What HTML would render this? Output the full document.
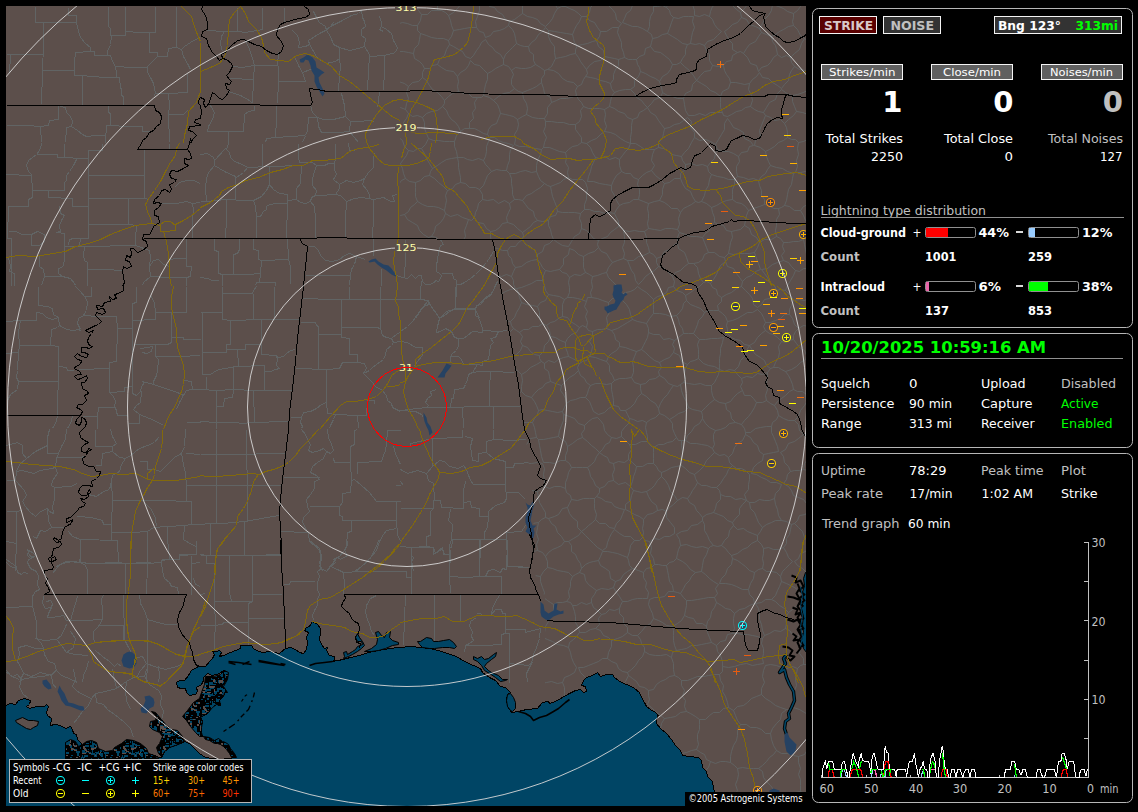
<!DOCTYPE html>
<html lang="en"><head><meta charset="utf-8"><title>Lightning Detector</title>
<style>
html,body{margin:0;padding:0;background:#000;overflow:hidden}
svg{display:block}
text{font-family:"DejaVu Sans","Liberation Sans",sans-serif;white-space:pre}
</style></head><body>
<svg width="1138" height="812" viewBox="0 0 1138 812">
<rect width="1138" height="812" fill="#000"/>
<clipPath id="mc"><rect x="6" y="6" width="800" height="800"/></clipPath>
<g clip-path="url(#mc)" fill="none" stroke-linejoin="round">
<rect x="6" y="6" width="800" height="800" fill="#5c4f4b"/>
<clipPath id="vz"><polygon points="400,0 812,0 812,812 545,812 545,594.5 537.5,594.5 534,560 533,500 524.6,429 500.4,286 492.4,239.3 400,239.3"/></clipPath>
<clipPath id="tz"><path clip-rule="evenodd" d="M0 0H812V812H0Z M400,0L812,0L812,812L545,812L545,594.5L537.5,594.5L534,560L533,500L524.6,429L500.4,286L492.4,239.3L400,239.3Z"/></clipPath>
<g stroke="#616464" stroke-width="1" shape-rendering="crispEdges" fill="none">
<path clip-path="url(#vz)" d="M704.5,821.5 705.5,816.5 709.5,812.5 710.5,808.5M698.5,787.5 701.5,790.5 703.5,795.5 706.5,799.5 707.5,804.5 710.5,808.5M698.5,787.5 692.5,786.5 687.5,787.5 682.5,788.5 677.5,790.5 671.5,790.5M671.5,790.5 672.5,796.5 671.5,802.5 673.5,808.5 671.5,814.5 672.5,819.5 672.5,825.5M363.5,454.5 368.5,452.5 373.5,452.5 379.5,452.5 383.5,448.5 389.5,449.5M389.5,449.5 386.5,444.5 388.5,438.5 385.5,433.5 384.5,428.5M374.5,422.5 380.5,424.5 384.5,428.5M414.5,432.5 412.5,437.5 414.5,443.5 412.5,448.5M414.5,432.5 411.5,428.5 407.5,426.5 404.5,422.5 399.5,420.5M384.5,428.5 389.5,425.5 394.5,422.5 399.5,420.5M390.5,450.5 395.5,451.5 401.5,450.5 406.5,448.5 412.5,448.5M806.5,355.5 804.5,350.5 799.5,347.5 796.5,343.5 793.5,339.5M806.5,355.5 809.5,351.5 813.5,348.5 817.5,344.5 822.5,342.5 825.5,338.5M820.5,322.5 814.5,322.5 809.5,326.5 803.5,325.5 798.5,328.5M798.5,328.5 795.5,331.5 793.5,335.5 793.5,339.5M614.5,528.5 609.5,527.5 605.5,523.5 599.5,523.5 595.5,519.5M614.5,528.5 616.5,523.5 620.5,519.5 622.5,514.5 624.5,509.5M624.5,509.5 619.5,508.5 614.5,506.5 611.5,502.5 605.5,501.5 601.5,498.5 596.5,496.5M595.5,519.5 596.5,514.5 594.5,508.5 594.5,503.5 594.5,498.5M594.5,498.5 596.5,496.5M614.5,529.5 611.5,533.5 609.5,537.5 607.5,542.5 606.5,547.5 602.5,550.5M602.5,550.5 597.5,547.5 593.5,543.5 589.5,539.5 585.5,535.5 581.5,531.5M581.5,531.5 585.5,528.5 588.5,525.5 592.5,522.5 595.5,519.5M571.5,499.5 577.5,500.5 583.5,498.5 589.5,498.5 594.5,498.5M571.5,499.5 569.5,503.5 567.5,507.5M567.5,507.5 569.5,513.5 572.5,517.5 577.5,521.5 577.5,527.5 581.5,531.5M648.5,690.5 648.5,695.5 649.5,699.5 647.5,704.5M648.5,690.5 644.5,687.5 639.5,686.5 636.5,681.5 632.5,678.5 628.5,675.5M647.5,704.5 644.5,707.5 638.5,708.5 635.5,713.5 631.5,716.5 626.5,717.5M628.5,675.5 625.5,681.5 621.5,685.5 615.5,688.5 611.5,692.5 608.5,698.5M626.5,717.5 622.5,714.5 619.5,709.5 616.5,705.5 611.5,702.5 608.5,698.5M696.5,749.5 691.5,750.5 686.5,752.5 681.5,753.5 675.5,754.5 670.5,754.5 664.5,754.5 659.5,757.5M696.5,749.5 700.5,752.5 704.5,754.5 706.5,759.5 710.5,761.5M710.5,761.5 708.5,767.5 704.5,771.5 701.5,776.5 700.5,782.5 698.5,787.5M671.5,790.5 667.5,787.5 663.5,783.5 660.5,778.5 656.5,774.5M659.5,757.5 660.5,762.5 657.5,766.5 658.5,770.5 656.5,774.5M664.5,718.5 660.5,715.5 655.5,711.5 651.5,707.5 647.5,704.5M664.5,718.5 661.5,723.5 660.5,728.5 659.5,734.5 659.5,739.5 658.5,745.5 655.5,749.5M626.5,717.5 625.5,722.5 624.5,727.5 624.5,731.5 624.5,736.5M655.5,749.5 651.5,746.5 645.5,744.5 639.5,744.5 634.5,742.5 629.5,738.5 624.5,736.5M631.5,821.5 628.5,815.5 629.5,809.5 629.5,803.5 628.5,797.5 626.5,791.5M656.5,774.5 650.5,777.5 646.5,781.5 641.5,783.5 636.5,785.5 630.5,788.5 626.5,791.5M758.5,768.5 753.5,768.5 748.5,768.5 742.5,767.5 737.5,768.5M758.5,768.5 762.5,771.5 763.5,777.5 766.5,781.5 770.5,785.5 773.5,789.5 774.5,795.5 778.5,798.5M737.5,768.5 738.5,774.5 737.5,779.5 735.5,784.5 737.5,790.5 734.5,795.5 734.5,800.5M778.5,798.5 777.5,803.5 773.5,806.5M773.5,806.5 767.5,807.5 762.5,808.5 756.5,808.5 751.5,811.5 745.5,810.5M745.5,810.5 742.5,806.5 739.5,802.5 734.5,800.5M730.5,762.5 734.5,765.5 737.5,768.5M730.5,762.5 730.5,756.5 731.5,751.5 733.5,745.5 736.5,740.5 737.5,735.5 737.5,729.5 740.5,724.5M740.5,724.5 746.5,724.5 750.5,727.5 756.5,727.5 761.5,729.5 765.5,733.5 770.5,733.5M776.5,750.5 773.5,745.5 771.5,739.5 770.5,733.5M776.5,750.5 773.5,754.5 769.5,757.5 766.5,761.5 762.5,765.5 758.5,768.5M710.5,761.5 715.5,763.5 720.5,761.5 725.5,761.5 730.5,762.5M710.5,808.5 715.5,805.5 720.5,804.5 725.5,804.5 729.5,801.5 734.5,800.5M736.5,867.5 736.5,861.5 737.5,855.5 738.5,850.5 741.5,844.5 741.5,838.5 742.5,833.5 744.5,827.5 743.5,821.5 746.5,816.5 745.5,810.5M778.5,828.5 777.5,822.5 775.5,817.5 775.5,811.5 773.5,806.5M836.5,645.5 831.5,648.5 827.5,653.5 821.5,654.5 817.5,659.5 811.5,660.5 806.5,664.5M828.5,687.5 825.5,683.5 822.5,678.5 816.5,676.5 814.5,671.5 810.5,668.5 806.5,664.5M816.5,799.5 810.5,798.5 805.5,793.5 800.5,791.5M800.5,791.5 800.5,785.5 800.5,779.5 798.5,774.5 800.5,768.5 798.5,762.5 798.5,756.5M798.5,756.5 804.5,754.5 807.5,749.5 813.5,747.5M805.5,838.5 808.5,833.5 809.5,827.5 809.5,821.5 812.5,816.5 811.5,810.5 815.5,805.5 816.5,799.5M778.5,798.5 784.5,796.5 789.5,793.5 794.5,792.5 800.5,791.5M776.5,750.5 781.5,753.5 787.5,753.5 793.5,755.5 798.5,756.5M821.5,709.5 817.5,710.5 814.5,714.5 809.5,715.5M809.5,715.5 811.5,720.5 811.5,725.5 810.5,731.5 812.5,736.5 811.5,741.5 813.5,747.5M422.5,821.5 417.5,818.5 415.5,813.5 410.5,810.5 406.5,806.5 403.5,802.5M379.5,868.5 380.5,862.5 381.5,856.5 379.5,850.5 379.5,845.5 381.5,839.5 379.5,833.5 379.5,828.5 380.5,822.5 379.5,816.5 382.5,810.5 381.5,805.5M403.5,802.5 398.5,804.5 392.5,805.5 386.5,803.5 381.5,805.5M430.5,821.5 434.5,817.5 437.5,812.5 440.5,807.5 441.5,801.5 447.5,798.5 449.5,793.5M414.5,778.5 420.5,779.5 425.5,777.5 431.5,776.5M414.5,778.5 411.5,783.5 408.5,787.5 407.5,792.5 404.5,797.5 403.5,802.5M449.5,793.5 446.5,789.5 441.5,787.5 438.5,783.5 434.5,780.5 431.5,776.5M370.5,798.5 374.5,799.5 377.5,803.5 381.5,805.5M425.5,426.5 429.5,430.5 435.5,431.5 438.5,435.5 443.5,437.5M425.5,426.5 422.5,428.5 418.5,430.5 414.5,432.5M443.5,437.5 444.5,440.5M444.5,440.5 441.5,442.5 438.5,446.5 436.5,450.5M436.5,450.5 430.5,451.5 424.5,451.5 418.5,451.5 413.5,449.5M720.5,96.5 722.5,91.5 728.5,88.5 730.5,82.5M720.5,96.5 720.5,102.5 720.5,107.5 722.5,112.5M722.5,112.5 723.5,115.5 727.5,116.5M749.5,83.5 744.5,84.5 740.5,83.5 735.5,82.5 730.5,82.5M749.5,83.5 748.5,89.5 751.5,95.5 752.5,100.5 750.5,106.5M750.5,106.5 745.5,107.5 741.5,110.5 736.5,111.5 731.5,114.5 727.5,116.5M640.5,71.5 645.5,73.5 650.5,76.5 655.5,78.5 659.5,81.5M640.5,71.5 639.5,67.5 637.5,64.5 636.5,59.5M659.5,81.5 662.5,76.5 667.5,73.5 670.5,69.5 672.5,64.5M636.5,59.5 639.5,56.5 644.5,54.5 645.5,48.5 650.5,46.5M650.5,46.5 654.5,51.5 660.5,52.5 664.5,55.5 669.5,59.5 672.5,64.5M794.5,523.5 797.5,520.5 799.5,515.5 805.5,514.5 807.5,510.5M794.5,523.5 798.5,527.5 802.5,531.5 804.5,537.5 807.5,541.5 812.5,545.5M807.5,510.5 812.5,512.5 819.5,511.5 824.5,514.5 829.5,515.5M806.5,355.5 805.5,359.5M793.5,339.5 789.5,340.5 785.5,342.5 781.5,341.5M781.5,341.5 778.5,346.5 779.5,352.5 778.5,357.5 775.5,362.5 773.5,367.5M773.5,367.5 778.5,367.5 781.5,369.5 785.5,371.5M805.5,359.5 800.5,362.5 796.5,366.5 791.5,369.5 785.5,371.5M806.5,503.5 808.5,506.5 807.5,510.5M806.5,503.5 809.5,499.5 810.5,494.5 815.5,490.5 815.5,484.5 819.5,480.5M478.5,492.5 473.5,492.5 469.5,493.5 464.5,493.5M478.5,492.5 482.5,495.5 483.5,500.5 488.5,503.5M464.5,493.5 463.5,498.5 461.5,503.5 458.5,507.5 455.5,511.5M488.5,503.5 486.5,506.5 488.5,509.5M488.5,509.5 486.5,514.5 481.5,516.5 479.5,521.5M479.5,521.5 473.5,521.5 467.5,521.5 462.5,519.5 456.5,518.5M456.5,518.5 455.5,515.5 455.5,511.5M511.5,476.5 512.5,480.5 513.5,483.5M511.5,476.5 505.5,476.5 499.5,476.5 493.5,476.5 488.5,474.5 482.5,474.5M482.5,474.5 482.5,479.5 479.5,483.5 478.5,487.5 478.5,492.5M513.5,483.5 510.5,487.5 504.5,489.5 502.5,495.5 496.5,497.5 492.5,500.5 488.5,503.5M515.5,520.5 509.5,518.5 504.5,516.5 499.5,514.5 493.5,512.5 488.5,509.5M515.5,520.5 515.5,515.5 517.5,510.5 517.5,505.5 518.5,500.5 519.5,495.5 520.5,490.5M513.5,483.5 518.5,485.5 520.5,490.5M493.5,556.5 496.5,551.5 499.5,546.5 502.5,542.5M493.5,556.5 488.5,555.5 484.5,557.5 479.5,557.5M502.5,542.5 498.5,539.5 494.5,536.5 489.5,535.5 486.5,531.5 481.5,530.5M481.5,530.5 477.5,533.5 476.5,538.5 475.5,543.5 471.5,546.5M479.5,557.5 477.5,553.5 474.5,550.5 471.5,546.5M515.5,520.5 515.5,526.5 511.5,530.5 509.5,535.5 509.5,540.5M509.5,540.5 505.5,540.5 502.5,542.5M479.5,521.5 481.5,525.5 481.5,530.5M447.5,538.5 445.5,534.5 447.5,530.5M447.5,538.5 451.5,540.5 454.5,542.5 456.5,546.5M456.5,546.5 461.5,547.5 466.5,547.5 471.5,546.5M447.5,530.5 449.5,525.5 454.5,522.5 456.5,518.5M608.5,698.5 602.5,698.5M624.5,736.5 620.5,739.5 615.5,742.5 609.5,742.5 605.5,747.5M605.5,747.5 602.5,741.5 598.5,737.5 595.5,732.5 593.5,726.5 588.5,722.5 586.5,716.5M602.5,698.5 600.5,702.5 595.5,704.5 592.5,708.5 588.5,711.5 586.5,716.5M602.5,698.5 598.5,694.5 594.5,690.5 593.5,684.5 588.5,680.5 584.5,676.5 580.5,672.5 578.5,667.5M586.5,716.5 582.5,714.5 577.5,717.5 573.5,716.5 568.5,715.5M568.5,715.5 566.5,710.5 567.5,704.5 563.5,699.5 564.5,693.5 564.5,687.5 562.5,682.5M562.5,682.5 564.5,677.5 569.5,675.5 574.5,672.5 576.5,667.5M628.5,675.5 627.5,672.5M627.5,672.5 622.5,671.5 618.5,668.5 616.5,663.5 611.5,661.5 607.5,658.5M578.5,667.5 583.5,667.5 588.5,665.5 593.5,663.5 598.5,661.5 602.5,658.5 607.5,658.5M358.5,382.5 364.5,383.5 369.5,383.5 375.5,383.5 381.5,384.5 386.5,383.5M363.5,354.5 368.5,356.5 374.5,359.5 380.5,360.5 386.5,361.5 391.5,364.5M391.5,364.5 390.5,369.5 389.5,374.5 387.5,378.5 386.5,383.5M371.5,414.5 373.5,409.5 376.5,405.5 380.5,402.5 385.5,399.5 388.5,395.5 391.5,390.5M386.5,383.5 389.5,386.5 391.5,390.5M437.5,387.5 433.5,384.5 427.5,383.5 425.5,378.5 420.5,376.5M437.5,387.5 438.5,393.5 434.5,398.5 434.5,404.5M426.5,407.5 429.5,404.5 434.5,404.5M426.5,407.5 421.5,407.5 416.5,406.5 411.5,404.5 406.5,401.5M420.5,376.5 418.5,381.5 414.5,385.5 411.5,389.5 406.5,392.5 404.5,397.5M406.5,401.5 404.5,397.5M425.5,426.5 425.5,421.5 425.5,417.5 425.5,412.5 426.5,407.5M450.5,412.5 448.5,417.5 446.5,421.5 445.5,426.5 443.5,431.5 443.5,437.5M450.5,412.5 445.5,411.5 442.5,407.5 437.5,407.5 434.5,404.5M399.5,420.5 402.5,415.5 403.5,411.5 403.5,405.5 406.5,401.5M391.5,390.5 395.5,394.5 400.5,394.5 404.5,397.5M536.5,437.5 530.5,438.5 526.5,444.5 520.5,445.5 515.5,449.5 510.5,451.5M536.5,437.5 535.5,432.5 534.5,427.5 532.5,422.5M510.5,451.5 506.5,448.5M506.5,448.5 505.5,443.5 505.5,438.5 504.5,433.5 503.5,428.5 501.5,423.5M532.5,422.5 526.5,422.5 520.5,422.5 514.5,422.5 508.5,422.5 502.5,423.5M659.5,375.5 664.5,378.5 668.5,383.5 673.5,385.5M659.5,375.5 655.5,378.5 649.5,379.5 645.5,383.5 640.5,384.5M640.5,384.5 640.5,388.5 641.5,393.5M641.5,393.5 646.5,396.5 650.5,400.5 655.5,403.5 658.5,408.5M658.5,408.5 660.5,403.5 663.5,398.5 667.5,394.5 670.5,389.5 673.5,385.5M696.5,749.5 698.5,744.5 697.5,739.5 697.5,734.5 699.5,729.5 699.5,724.5 699.5,719.5M664.5,718.5 670.5,717.5 675.5,716.5 680.5,712.5 686.5,711.5M659.5,757.5 657.5,753.5 655.5,749.5M699.5,719.5 695.5,716.5 690.5,713.5 686.5,711.5M812.5,545.5 808.5,547.5 805.5,551.5 800.5,553.5 798.5,558.5 794.5,561.5M815.5,577.5 810.5,575.5 806.5,572.5 802.5,568.5 797.5,565.5 794.5,561.5M791.5,524.5 794.5,523.5M791.5,524.5 790.5,529.5 789.5,534.5 786.5,538.5 786.5,543.5 783.5,547.5M783.5,547.5 786.5,552.5 788.5,557.5 792.5,561.5M791.5,524.5 786.5,521.5 781.5,520.5M781.5,520.5 775.5,520.5 771.5,522.5 766.5,524.5 762.5,527.5M783.5,547.5 778.5,549.5 773.5,549.5 768.5,547.5 763.5,548.5M762.5,527.5 760.5,531.5 757.5,535.5M757.5,535.5 757.5,540.5M763.5,548.5 761.5,544.5 757.5,540.5M564.5,541.5 561.5,545.5 557.5,547.5 552.5,549.5 548.5,552.5 545.5,556.5M564.5,541.5 561.5,536.5 557.5,532.5 555.5,526.5 551.5,523.5 548.5,518.5M538.5,522.5 541.5,519.5 545.5,517.5M538.5,522.5 537.5,527.5 536.5,533.5 538.5,539.5 536.5,544.5 537.5,550.5M537.5,550.5 542.5,552.5 545.5,556.5M548.5,518.5 545.5,517.5M567.5,507.5 562.5,508.5 558.5,514.5 554.5,516.5 548.5,518.5M581.5,531.5 578.5,535.5 573.5,538.5 568.5,541.5M568.5,541.5 564.5,541.5M515.5,520.5 521.5,520.5 527.5,520.5 532.5,523.5 538.5,522.5M537.5,491.5 531.5,490.5 525.5,492.5 520.5,490.5M537.5,491.5 538.5,497.5 539.5,502.5 542.5,507.5 545.5,512.5 545.5,517.5M519.5,550.5 515.5,547.5 511.5,544.5 509.5,540.5M519.5,550.5 524.5,551.5 528.5,551.5 533.5,551.5 537.5,550.5M571.5,499.5 570.5,495.5 566.5,492.5 565.5,488.5M537.5,491.5 541.5,489.5 544.5,486.5M565.5,488.5 560.5,486.5 554.5,486.5 549.5,488.5 544.5,486.5M511.5,476.5 514.5,471.5 514.5,466.5M514.5,466.5 520.5,465.5 525.5,463.5 531.5,463.5 537.5,462.5 542.5,463.5M544.5,486.5 544.5,480.5 543.5,474.5 544.5,468.5 542.5,463.5M538.5,439.5 536.5,437.5M538.5,439.5 539.5,445.5 540.5,450.5 541.5,456.5 543.5,462.5M510.5,451.5 511.5,456.5 513.5,461.5 514.5,466.5M585.5,397.5 580.5,397.5 575.5,399.5 570.5,400.5 566.5,403.5M585.5,397.5 589.5,401.5 591.5,406.5 593.5,411.5 598.5,414.5M584.5,425.5 578.5,423.5 574.5,418.5 569.5,416.5 563.5,414.5M584.5,425.5 588.5,421.5 592.5,418.5 597.5,417.5M566.5,403.5 564.5,407.5 562.5,411.5M563.5,414.5 562.5,411.5M538.5,439.5 543.5,439.5 548.5,438.5 553.5,437.5 558.5,436.5M558.5,436.5 559.5,430.5 561.5,425.5 563.5,420.5 563.5,414.5M532.5,422.5 534.5,418.5 537.5,414.5 538.5,410.5M538.5,410.5 542.5,409.5 547.5,410.5 552.5,411.5 557.5,412.5 562.5,411.5M599.5,488.5 595.5,485.5 593.5,480.5 590.5,476.5 589.5,471.5 587.5,467.5M599.5,488.5 599.5,492.5 596.5,496.5M565.5,488.5 565.5,482.5 567.5,477.5 568.5,472.5 571.5,467.5M587.5,467.5 582.5,467.5 576.5,467.5 571.5,467.5M558.5,436.5 561.5,439.5 565.5,441.5 567.5,446.5M584.5,425.5 584.5,429.5 581.5,433.5 582.5,437.5M567.5,446.5 572.5,443.5 577.5,439.5 582.5,437.5M543.5,462.5 549.5,462.5 554.5,463.5 560.5,460.5 565.5,460.5M567.5,446.5 567.5,450.5 565.5,455.5 565.5,460.5M565.5,460.5 569.5,463.5 571.5,467.5M587.5,467.5 591.5,464.5 594.5,461.5 596.5,456.5 599.5,452.5M582.5,437.5 587.5,441.5 591.5,445.5 595.5,448.5 599.5,452.5M597.5,417.5 600.5,420.5 603.5,424.5 604.5,430.5 607.5,434.5 611.5,437.5M599.5,452.5 602.5,449.5 605.5,444.5 609.5,442.5 611.5,437.5M613.5,405.5 618.5,406.5 620.5,410.5 625.5,410.5M613.5,405.5 608.5,408.5 604.5,412.5 598.5,414.5M625.5,410.5 627.5,414.5 629.5,418.5M629.5,418.5 628.5,423.5 624.5,427.5 621.5,431.5 621.5,436.5M611.5,437.5 616.5,438.5 621.5,436.5M643.5,519.5 647.5,514.5 652.5,513.5 657.5,510.5M643.5,519.5 639.5,516.5 634.5,514.5 629.5,511.5 625.5,509.5M657.5,510.5 656.5,505.5 651.5,501.5 648.5,496.5 646.5,491.5M625.5,509.5 625.5,504.5 630.5,500.5 631.5,495.5 633.5,490.5M633.5,490.5 637.5,491.5 641.5,492.5 646.5,491.5M661.5,476.5 665.5,480.5 668.5,485.5 670.5,491.5 674.5,495.5 677.5,500.5M661.5,476.5 657.5,480.5 654.5,485.5 651.5,488.5 646.5,491.5M657.5,510.5 662.5,509.5 666.5,511.5M666.5,511.5 669.5,507.5 673.5,504.5 677.5,500.5M685.5,440.5 681.5,440.5M685.5,440.5 690.5,443.5 696.5,443.5 701.5,444.5 707.5,445.5 712.5,448.5M681.5,440.5 681.5,445.5 682.5,450.5 682.5,455.5 680.5,460.5 681.5,465.5M714.5,452.5 712.5,448.5M714.5,452.5 710.5,456.5 706.5,460.5 703.5,466.5 699.5,470.5 694.5,474.5M694.5,474.5 689.5,472.5 685.5,468.5 681.5,465.5M647.5,441.5 647.5,436.5 646.5,432.5 645.5,427.5 646.5,422.5M647.5,441.5 650.5,445.5 653.5,447.5M653.5,447.5 658.5,444.5 663.5,444.5 667.5,442.5 672.5,441.5 676.5,437.5M676.5,437.5 674.5,433.5 672.5,428.5 672.5,423.5 669.5,419.5M646.5,422.5 650.5,419.5 655.5,417.5 659.5,413.5M659.5,413.5 664.5,415.5 669.5,419.5M629.5,418.5 633.5,419.5 637.5,421.5 642.5,420.5 646.5,422.5M629.5,444.5 625.5,440.5 621.5,436.5M629.5,444.5 635.5,444.5 641.5,441.5 647.5,441.5M653.5,463.5 656.5,466.5 658.5,470.5 661.5,472.5M653.5,463.5 653.5,458.5 653.5,452.5 653.5,447.5M661.5,472.5 666.5,470.5 671.5,467.5 676.5,466.5 681.5,465.5M681.5,440.5 678.5,440.5 676.5,437.5M641.5,393.5 637.5,397.5 634.5,403.5 630.5,407.5 625.5,410.5M658.5,408.5 659.5,413.5M688.5,407.5 684.5,411.5 678.5,413.5 674.5,416.5 669.5,419.5M688.5,407.5 686.5,401.5 683.5,396.5 681.5,390.5 680.5,384.5M680.5,384.5 677.5,386.5 673.5,385.5M613.5,480.5 612.5,474.5 614.5,469.5 613.5,463.5M613.5,480.5 618.5,484.5 625.5,482.5 630.5,486.5M630.5,486.5 632.5,481.5 633.5,476.5 635.5,471.5 636.5,466.5M613.5,463.5 618.5,461.5 624.5,462.5 628.5,459.5M636.5,466.5 632.5,462.5 628.5,459.5M599.5,488.5 604.5,486.5 608.5,481.5 613.5,480.5M599.5,452.5 603.5,455.5 607.5,457.5 609.5,462.5 613.5,463.5M633.5,490.5 630.5,486.5M653.5,463.5 647.5,463.5 642.5,466.5 636.5,466.5M661.5,476.5 661.5,472.5M629.5,444.5 631.5,449.5 628.5,454.5 628.5,459.5M626.5,791.5 622.5,788.5 617.5,785.5 612.5,784.5 607.5,782.5M605.5,747.5 603.5,750.5M607.5,782.5 607.5,777.5 605.5,772.5 605.5,766.5 606.5,760.5 604.5,755.5 603.5,750.5M557.5,725.5 561.5,721.5 565.5,718.5 568.5,715.5M557.5,725.5 561.5,729.5 562.5,736.5 565.5,740.5 568.5,746.5 570.5,751.5M603.5,750.5 597.5,749.5 592.5,751.5 586.5,750.5 581.5,751.5 575.5,753.5 570.5,751.5M536.5,725.5 536.5,731.5 533.5,737.5 532.5,742.5 532.5,748.5 529.5,754.5 530.5,760.5M536.5,725.5 541.5,725.5 547.5,726.5 552.5,725.5 557.5,725.5M530.5,760.5 532.5,762.5M532.5,762.5 537.5,763.5 542.5,761.5 547.5,762.5 552.5,762.5 557.5,763.5 562.5,763.5M570.5,751.5 566.5,755.5 565.5,760.5 562.5,763.5M770.5,733.5 772.5,728.5 776.5,723.5 780.5,719.5 781.5,713.5 786.5,709.5M809.5,715.5 804.5,712.5 799.5,709.5 793.5,707.5M786.5,709.5 790.5,709.5 793.5,707.5M429.5,692.5 429.5,687.5 426.5,682.5 427.5,677.5 425.5,672.5 423.5,667.5 424.5,662.5M429.5,692.5 434.5,690.5 440.5,690.5 445.5,690.5 450.5,691.5 455.5,691.5 460.5,688.5M460.5,688.5 461.5,683.5 462.5,678.5 465.5,673.5 465.5,667.5 467.5,662.5M425.5,660.5 431.5,659.5 436.5,661.5 442.5,658.5 447.5,660.5 453.5,660.5 458.5,657.5 463.5,658.5M463.5,658.5 467.5,662.5M401.5,662.5 406.5,663.5 412.5,662.5 418.5,663.5 424.5,662.5M401.5,662.5 398.5,666.5 395.5,670.5 390.5,672.5 388.5,677.5M388.5,677.5 390.5,682.5 394.5,686.5 394.5,692.5 398.5,697.5 400.5,702.5M400.5,702.5 405.5,702.5 408.5,706.5M424.5,701.5 419.5,703.5 414.5,704.5 408.5,706.5M424.5,701.5 425.5,696.5 429.5,692.5M532.5,762.5 531.5,767.5 534.5,773.5 533.5,778.5 534.5,784.5 532.5,790.5 533.5,795.5M562.5,763.5 565.5,768.5 567.5,773.5 568.5,779.5 569.5,784.5 571.5,789.5M533.5,795.5 539.5,795.5 544.5,794.5 550.5,794.5 555.5,793.5 560.5,792.5 565.5,790.5 571.5,789.5M607.5,782.5 602.5,785.5 596.5,786.5 591.5,790.5 586.5,793.5 581.5,796.5M581.5,796.5 576.5,792.5 571.5,789.5M455.5,792.5 457.5,788.5 461.5,784.5 464.5,780.5 468.5,777.5 470.5,773.5M455.5,792.5 459.5,797.5 462.5,802.5 465.5,806.5 470.5,809.5 473.5,814.5 477.5,818.5 482.5,821.5M470.5,773.5 475.5,776.5 480.5,779.5 485.5,781.5 491.5,781.5 495.5,785.5M483.5,821.5 487.5,817.5 488.5,811.5 494.5,809.5 498.5,804.5 500.5,799.5M495.5,785.5 499.5,789.5 498.5,794.5 500.5,799.5M449.5,793.5 455.5,792.5M530.5,760.5 525.5,761.5 519.5,761.5 514.5,759.5 509.5,760.5M509.5,760.5 506.5,765.5 502.5,769.5 499.5,774.5 497.5,779.5 495.5,785.5M533.5,795.5 533.5,799.5 529.5,801.5M529.5,801.5 523.5,801.5 518.5,798.5 512.5,800.5 506.5,800.5 500.5,799.5M381.5,751.5 378.5,747.5 377.5,742.5 377.5,736.5 376.5,731.5 373.5,727.5 371.5,722.5 372.5,716.5M381.5,751.5 378.5,754.5 375.5,756.5M396.5,751.5 398.5,748.5 403.5,746.5 406.5,742.5M396.5,751.5 391.5,753.5 386.5,751.5 381.5,751.5M400.5,702.5 395.5,703.5 391.5,708.5 386.5,710.5 381.5,711.5 376.5,714.5 372.5,716.5M408.5,706.5 407.5,711.5 409.5,716.5 409.5,721.5 406.5,726.5 408.5,732.5 407.5,737.5 406.5,742.5M414.5,778.5 410.5,775.5 407.5,770.5 403.5,766.5 401.5,761.5 399.5,756.5 396.5,751.5M437.5,468.5 433.5,470.5 429.5,473.5 424.5,475.5 420.5,477.5 415.5,478.5M437.5,468.5 441.5,472.5 446.5,473.5 450.5,476.5M450.5,476.5 450.5,479.5M450.5,479.5 446.5,484.5 444.5,489.5 441.5,494.5 436.5,498.5M424.5,500.5 428.5,500.5 433.5,500.5 436.5,498.5M424.5,500.5 423.5,495.5 419.5,491.5 417.5,486.5 413.5,482.5M415.5,478.5 413.5,482.5M436.5,450.5 438.5,454.5 435.5,459.5 437.5,464.5 437.5,468.5M413.5,449.5 414.5,455.5 412.5,461.5 413.5,467.5 414.5,473.5 415.5,478.5M464.5,493.5 461.5,489.5 458.5,486.5 454.5,483.5 450.5,479.5M455.5,511.5 450.5,509.5 445.5,505.5 442.5,500.5 436.5,498.5M447.5,530.5 442.5,528.5 437.5,526.5 433.5,524.5 429.5,519.5 424.5,518.5 420.5,516.5M419.5,516.5 421.5,510.5 424.5,506.5 424.5,500.5M389.5,470.5 394.5,472.5 399.5,474.5 403.5,478.5 408.5,481.5 413.5,482.5M389.5,470.5 390.5,465.5 391.5,460.5 390.5,455.5 390.5,450.5M681.5,156.5 676.5,155.5 671.5,154.5 667.5,150.5 663.5,148.5 658.5,147.5M681.5,156.5 684.5,152.5 688.5,148.5 691.5,142.5 694.5,137.5M658.5,147.5 658.5,142.5 662.5,138.5 663.5,133.5 664.5,128.5M664.5,128.5 669.5,127.5 674.5,124.5 679.5,123.5 683.5,120.5 687.5,117.5M694.5,137.5 694.5,132.5 690.5,127.5 691.5,121.5 687.5,117.5M715.5,144.5 718.5,139.5 721.5,134.5 724.5,129.5 724.5,123.5 727.5,118.5M715.5,144.5 710.5,141.5 705.5,139.5 699.5,140.5 694.5,137.5M722.5,112.5 716.5,112.5 710.5,112.5 705.5,115.5 699.5,113.5 694.5,115.5 688.5,115.5M600.5,31.5 599.5,36.5 596.5,40.5M600.5,31.5 606.5,31.5 612.5,27.5 618.5,27.5M618.5,27.5 617.5,32.5 619.5,37.5 621.5,42.5 621.5,47.5 623.5,52.5 624.5,57.5M624.5,57.5 621.5,58.5 618.5,59.5M618.5,59.5 614.5,58.5 609.5,57.5 604.5,56.5M596.5,40.5 598.5,46.5 603.5,50.5 604.5,56.5M688.5,115.5 685.5,110.5 684.5,104.5 683.5,98.5M683.5,98.5 677.5,98.5 672.5,96.5 667.5,95.5 662.5,92.5M662.5,92.5 660.5,97.5 654.5,99.5 651.5,103.5 647.5,107.5M664.5,128.5 661.5,124.5 658.5,120.5 655.5,115.5 650.5,112.5 647.5,107.5M640.5,71.5 638.5,76.5 634.5,80.5 634.5,86.5 630.5,89.5M659.5,81.5 661.5,87.5 662.5,92.5M647.5,107.5 644.5,104.5 641.5,100.5 636.5,97.5 634.5,93.5 630.5,89.5M509.5,21.5 505.5,19.5 502.5,14.5 497.5,11.5 494.5,7.5 489.5,6.5 486.5,1.5M509.5,21.5 508.5,25.5M508.5,25.5 504.5,28.5 499.5,30.5 493.5,31.5 490.5,35.5 485.5,37.5M486.5,1.5 482.5,2.5 479.5,4.5M479.5,4.5 479.5,10.5 477.5,16.5 475.5,21.5 476.5,27.5M485.5,37.5 483.5,32.5 479.5,31.5 476.5,27.5M465.5,-0.5 461.5,3.5 457.5,8.5 453.5,12.5 448.5,15.5M465.5,-0.5 470.5,0.5 474.5,4.5 479.5,4.5M476.5,27.5 470.5,27.5 464.5,28.5 459.5,29.5 453.5,30.5M448.5,15.5 450.5,20.5 451.5,25.5 453.5,30.5M817.5,5.5 813.5,4.5 809.5,2.5 804.5,2.5M799.5,-15.5 799.5,-10.5 802.5,-6.5 804.5,-2.5 804.5,2.5M666.5,7.5 669.5,10.5 670.5,14.5 673.5,17.5M666.5,7.5 662.5,5.5 657.5,6.5 653.5,6.5M652.5,38.5 657.5,37.5 662.5,34.5 667.5,33.5M652.5,38.5 651.5,34.5 647.5,31.5M647.5,31.5 649.5,26.5 649.5,21.5 650.5,16.5 653.5,11.5 653.5,6.5M673.5,17.5 671.5,22.5 669.5,28.5 667.5,33.5M655.5,-19.5 652.5,-14.5 651.5,-8.5 650.5,-2.5 649.5,2.5M666.5,7.5 668.5,2.5 671.5,-1.5 675.5,-5.5 678.5,-9.5M653.5,6.5 649.5,2.5M673.5,17.5 678.5,18.5 683.5,16.5 688.5,16.5 693.5,16.5M694.5,15.5 694.5,10.5 692.5,4.5 692.5,-0.5 691.5,-6.5 689.5,-11.5M652.5,38.5 651.5,42.5 650.5,46.5M672.5,64.5 676.5,64.5 680.5,62.5M667.5,33.5 672.5,36.5 677.5,39.5 682.5,43.5 687.5,44.5M680.5,62.5 682.5,58.5 685.5,54.5 685.5,49.5 687.5,44.5M683.5,98.5 685.5,93.5 691.5,90.5 692.5,84.5 696.5,80.5M680.5,62.5 684.5,66.5 689.5,70.5 693.5,75.5 696.5,80.5M693.5,16.5 692.5,21.5 694.5,27.5 692.5,32.5 691.5,37.5 690.5,43.5M690.5,43.5 687.5,44.5M720.5,96.5 715.5,92.5 710.5,90.5 706.5,86.5 701.5,83.5 696.5,80.5M621.5,23.5 616.5,19.5 615.5,13.5 612.5,9.5 608.5,5.5 605.5,0.5M622.5,22.5 624.5,18.5 626.5,13.5 630.5,10.5 632.5,5.5 635.5,1.5M605.5,0.5 610.5,-3.5 614.5,-7.5 618.5,-11.5M635.5,1.5 632.5,-2.5 628.5,-5.5 626.5,-10.5M636.5,59.5 632.5,59.5 628.5,59.5 624.5,57.5M647.5,31.5 642.5,28.5 637.5,26.5 632.5,26.5 627.5,24.5 622.5,22.5M618.5,27.5 621.5,23.5M649.5,2.5 645.5,2.5 640.5,3.5 635.5,1.5M806.5,503.5 803.5,499.5 798.5,497.5 793.5,495.5 791.5,490.5 788.5,486.5 783.5,483.5M781.5,520.5 778.5,515.5 777.5,509.5 775.5,504.5 774.5,498.5M774.5,498.5 775.5,493.5 779.5,489.5 781.5,484.5M762.5,527.5 758.5,522.5 756.5,517.5 754.5,512.5 750.5,508.5 749.5,502.5M774.5,498.5 769.5,500.5 764.5,500.5 759.5,499.5 754.5,502.5 749.5,502.5M757.5,535.5 752.5,533.5 747.5,531.5 743.5,528.5 737.5,529.5 733.5,525.5M732.5,522.5 735.5,518.5 739.5,514.5 739.5,508.5 742.5,504.5 746.5,500.5M732.5,522.5 733.5,525.5M749.5,502.5 746.5,500.5M805.5,359.5 809.5,364.5 813.5,368.5 818.5,372.5M819.5,480.5 816.5,476.5 810.5,476.5 808.5,470.5 803.5,469.5M783.5,483.5 786.5,479.5 787.5,474.5 790.5,471.5M803.5,469.5 799.5,470.5 794.5,470.5 790.5,471.5M803.5,434.5 806.5,435.5M803.5,434.5 798.5,438.5 794.5,441.5 788.5,443.5 785.5,449.5 780.5,452.5M780.5,452.5 783.5,456.5 784.5,462.5 788.5,466.5 790.5,471.5M803.5,469.5 804.5,463.5 807.5,459.5 811.5,455.5 813.5,451.5M813.5,451.5 812.5,445.5 807.5,441.5 806.5,435.5M793.5,389.5 797.5,391.5 802.5,391.5 806.5,394.5 811.5,394.5M793.5,389.5 789.5,391.5 785.5,395.5 781.5,398.5 777.5,401.5 774.5,405.5M794.5,420.5 798.5,416.5 800.5,410.5 804.5,405.5 807.5,400.5 812.5,396.5M794.5,420.5 788.5,420.5 783.5,418.5 778.5,415.5M778.5,415.5 777.5,410.5 774.5,405.5M785.5,371.5 788.5,375.5 790.5,379.5 792.5,384.5 793.5,389.5M818.5,372.5 814.5,377.5 813.5,383.5 813.5,389.5 811.5,394.5M773.5,367.5 770.5,368.5M766.5,400.5 770.5,403.5 774.5,405.5M766.5,400.5 765.5,395.5 767.5,389.5 766.5,383.5 767.5,377.5 767.5,372.5M767.5,372.5 770.5,368.5M803.5,434.5 799.5,430.5 798.5,424.5 794.5,420.5M827.5,422.5 823.5,424.5 819.5,427.5 815.5,431.5 809.5,431.5 806.5,435.5M715.5,144.5 717.5,149.5M727.5,118.5 730.5,122.5 733.5,127.5 738.5,129.5 743.5,132.5 744.5,138.5 750.5,141.5 753.5,145.5M717.5,149.5 722.5,151.5 728.5,151.5 733.5,153.5 738.5,156.5M738.5,156.5 741.5,152.5 747.5,151.5 749.5,146.5 753.5,145.5M744.5,225.5 740.5,229.5 735.5,230.5 731.5,231.5M744.5,225.5 749.5,228.5 751.5,234.5 756.5,237.5 759.5,242.5M731.5,231.5 732.5,237.5 730.5,242.5 729.5,248.5 728.5,253.5M759.5,242.5 757.5,247.5 754.5,252.5M754.5,252.5 749.5,253.5 744.5,253.5 739.5,253.5 733.5,254.5 728.5,253.5M820.5,230.5 815.5,231.5 811.5,229.5M811.5,229.5 807.5,232.5 805.5,235.5 803.5,239.5M803.5,239.5 804.5,244.5 805.5,249.5 806.5,254.5 810.5,258.5 810.5,263.5M810.5,263.5 815.5,260.5 820.5,257.5 827.5,257.5 831.5,253.5M800.5,210.5 803.5,206.5 808.5,204.5 813.5,202.5 816.5,198.5 822.5,197.5 825.5,192.5M800.5,210.5 803.5,215.5 805.5,220.5 808.5,224.5 811.5,229.5M822.5,287.5 818.5,282.5 813.5,278.5 812.5,272.5 807.5,268.5M807.5,268.5 810.5,263.5M821.5,53.5 817.5,49.5 813.5,44.5 810.5,39.5M810.5,39.5 815.5,36.5 819.5,32.5 823.5,29.5 825.5,24.5 829.5,21.5M793.5,25.5 797.5,29.5 800.5,35.5 804.5,38.5M793.5,25.5 788.5,26.5 783.5,29.5 779.5,31.5 775.5,34.5 771.5,36.5M804.5,38.5 801.5,43.5 799.5,49.5 794.5,53.5 790.5,57.5M771.5,36.5 772.5,41.5 775.5,45.5 776.5,49.5 777.5,54.5M790.5,57.5 786.5,55.5 781.5,57.5 777.5,54.5M793.5,13.5 797.5,10.5 800.5,6.5 804.5,2.5M793.5,13.5 793.5,17.5 792.5,21.5 793.5,25.5M810.5,39.5 807.5,40.5 804.5,38.5M743.5,53.5 746.5,48.5 749.5,44.5 755.5,41.5 758.5,36.5 761.5,32.5M743.5,53.5 747.5,57.5 750.5,63.5 756.5,65.5 758.5,71.5M758.5,71.5 761.5,67.5 767.5,65.5 770.5,62.5 773.5,57.5 777.5,54.5M761.5,32.5 766.5,34.5 771.5,36.5M450.5,441.5 455.5,438.5 460.5,436.5 466.5,434.5 471.5,431.5M450.5,441.5 453.5,445.5 456.5,450.5 459.5,454.5 464.5,457.5 466.5,462.5M481.5,453.5 478.5,449.5 477.5,444.5 476.5,439.5 475.5,433.5M481.5,453.5 477.5,457.5 475.5,463.5M471.5,431.5 475.5,433.5M466.5,462.5 471.5,462.5 475.5,463.5M444.5,440.5 450.5,441.5M450.5,476.5 454.5,472.5 458.5,469.5 463.5,467.5 466.5,462.5M506.5,448.5 501.5,449.5 496.5,451.5 491.5,452.5 486.5,453.5 481.5,453.5M498.5,423.5 501.5,423.5M498.5,423.5 494.5,425.5 489.5,427.5 484.5,429.5 480.5,431.5 475.5,433.5M482.5,474.5 479.5,470.5 477.5,466.5 475.5,463.5M614.5,529.5 619.5,533.5 624.5,536.5 630.5,536.5 634.5,540.5M602.5,551.5 607.5,551.5 612.5,552.5 617.5,553.5 622.5,555.5 627.5,557.5M627.5,557.5 629.5,551.5 630.5,545.5 634.5,540.5M643.5,519.5 643.5,523.5 642.5,528.5 643.5,532.5 642.5,537.5M634.5,540.5 639.5,540.5 642.5,537.5M666.5,511.5 666.5,517.5 670.5,522.5 674.5,527.5 674.5,533.5M674.5,533.5 669.5,536.5 664.5,536.5 659.5,539.5 654.5,538.5 649.5,541.5M649.5,541.5 645.5,540.5 642.5,537.5M602.5,551.5 600.5,556.5 598.5,560.5M632.5,568.5 629.5,565.5 628.5,560.5 627.5,557.5M632.5,568.5 627.5,571.5 623.5,574.5 620.5,579.5 615.5,581.5M615.5,581.5 610.5,578.5 609.5,571.5 605.5,568.5 600.5,565.5 598.5,560.5M568.5,541.5 571.5,545.5 571.5,551.5 575.5,554.5 577.5,559.5 580.5,563.5 581.5,568.5M598.5,560.5 593.5,561.5 589.5,562.5 585.5,564.5 581.5,568.5M627.5,632.5 622.5,636.5 617.5,638.5 611.5,640.5M627.5,632.5 627.5,627.5 623.5,623.5 623.5,617.5 619.5,613.5 619.5,608.5M619.5,608.5 614.5,610.5 609.5,609.5 605.5,613.5 601.5,614.5M611.5,640.5 608.5,637.5 603.5,635.5 600.5,630.5 595.5,628.5M601.5,614.5 598.5,618.5 599.5,624.5 595.5,628.5M568.5,647.5 570.5,652.5 571.5,657.5 573.5,662.5 576.5,667.5M568.5,647.5 569.5,642.5 573.5,639.5 576.5,636.5 579.5,632.5M611.5,640.5 611.5,646.5 608.5,652.5 607.5,658.5M579.5,632.5 585.5,632.5 590.5,629.5 595.5,628.5M536.5,725.5 533.5,720.5 528.5,718.5 524.5,714.5M562.5,682.5 557.5,683.5 551.5,681.5 546.5,682.5 541.5,683.5M524.5,714.5 526.5,709.5 529.5,704.5 533.5,699.5 534.5,693.5 538.5,689.5 541.5,683.5M391.5,641.5 393.5,646.5 396.5,651.5 399.5,656.5 401.5,662.5M391.5,641.5 395.5,636.5 400.5,636.5 405.5,632.5 409.5,629.5 414.5,627.5M425.5,660.5 425.5,655.5 424.5,649.5 425.5,643.5 426.5,637.5 426.5,631.5M426.5,631.5 422.5,630.5 418.5,630.5 414.5,627.5M456.5,546.5 457.5,552.5 454.5,557.5 456.5,563.5 454.5,569.5M479.5,557.5 476.5,561.5 476.5,567.5 473.5,571.5M473.5,571.5 468.5,573.5 463.5,574.5 458.5,574.5M454.5,569.5 455.5,572.5 458.5,574.5M548.5,294.5 545.5,300.5 540.5,302.5 537.5,306.5M548.5,294.5 545.5,290.5 544.5,285.5 542.5,280.5M542.5,280.5 536.5,280.5 531.5,283.5 526.5,285.5 521.5,287.5 516.5,288.5M537.5,306.5 532.5,305.5 526.5,304.5 521.5,302.5M516.5,288.5 518.5,293.5 519.5,297.5 521.5,302.5M542.5,323.5 539.5,318.5 539.5,312.5 537.5,306.5M542.5,323.5 538.5,326.5 532.5,326.5 528.5,329.5 523.5,329.5 519.5,332.5M519.5,332.5 516.5,330.5 513.5,328.5M510.5,321.5 511.5,325.5 513.5,328.5M510.5,321.5 514.5,317.5 516.5,312.5 519.5,307.5 521.5,302.5M495.5,313.5 494.5,308.5 494.5,302.5 495.5,297.5M495.5,313.5 500.5,316.5 505.5,320.5 510.5,321.5M515.5,288.5 510.5,289.5 505.5,291.5 500.5,294.5 495.5,297.5M522.5,345.5 520.5,350.5 516.5,354.5 511.5,357.5 508.5,362.5M522.5,345.5 520.5,341.5 522.5,336.5 519.5,332.5M508.5,362.5 504.5,363.5 499.5,363.5 495.5,362.5M513.5,328.5 509.5,332.5 505.5,334.5 501.5,338.5 496.5,340.5 492.5,343.5 487.5,346.5M495.5,362.5 492.5,357.5 490.5,351.5 487.5,346.5M480.5,319.5 486.5,319.5 490.5,315.5 495.5,313.5M480.5,319.5 481.5,325.5 482.5,330.5 480.5,336.5 480.5,342.5M480.5,342.5 484.5,343.5 487.5,346.5M461.5,392.5 466.5,389.5 468.5,384.5 472.5,380.5 477.5,377.5M461.5,392.5 463.5,397.5 464.5,402.5 463.5,407.5M465.5,409.5 463.5,407.5M465.5,409.5 471.5,406.5 477.5,405.5 482.5,405.5M482.5,405.5 485.5,401.5 488.5,396.5 491.5,392.5 492.5,387.5M492.5,387.5 489.5,382.5 487.5,377.5M487.5,377.5 482.5,378.5 477.5,377.5M447.5,382.5 449.5,377.5 450.5,372.5 450.5,368.5 451.5,363.5M447.5,382.5 452.5,385.5 456.5,389.5 461.5,392.5M451.5,363.5 454.5,361.5 458.5,361.5M458.5,361.5 462.5,364.5 466.5,367.5 470.5,370.5 473.5,374.5 477.5,377.5M450.5,412.5 454.5,410.5 459.5,410.5 463.5,407.5M447.5,382.5 441.5,383.5 437.5,387.5M471.5,431.5 469.5,426.5 469.5,420.5 466.5,414.5 465.5,409.5M498.5,423.5 493.5,419.5 491.5,414.5 486.5,410.5 482.5,405.5M512.5,394.5 509.5,400.5 509.5,406.5 505.5,411.5 506.5,417.5 502.5,423.5M512.5,394.5 507.5,393.5 501.5,392.5 496.5,390.5 492.5,387.5M495.5,362.5 493.5,368.5 489.5,372.5 487.5,377.5M458.5,361.5 462.5,357.5 464.5,353.5 466.5,349.5 469.5,345.5M469.5,345.5 474.5,342.5 480.5,342.5M450.5,328.5 445.5,330.5 443.5,334.5 440.5,338.5M450.5,328.5 454.5,332.5 458.5,335.5 462.5,338.5 465.5,342.5 469.5,345.5M451.5,363.5 448.5,360.5 444.5,359.5M444.5,359.5 442.5,354.5 442.5,349.5 442.5,343.5 440.5,338.5M420.5,376.5 418.5,370.5 419.5,364.5M444.5,359.5 439.5,359.5 434.5,362.5 429.5,363.5 424.5,364.5 419.5,364.5M693.5,263.5 697.5,267.5 698.5,273.5 700.5,278.5 703.5,282.5M693.5,263.5 698.5,262.5 702.5,259.5 704.5,254.5 708.5,252.5M708.5,252.5 714.5,252.5 719.5,256.5 724.5,257.5M710.5,283.5 706.5,281.5 703.5,282.5M710.5,283.5 713.5,279.5 716.5,274.5 718.5,269.5 720.5,265.5 725.5,261.5M725.5,261.5 724.5,257.5M721.5,297.5 717.5,294.5 716.5,289.5 712.5,287.5 710.5,283.5M721.5,297.5 726.5,294.5 731.5,292.5 736.5,288.5 741.5,286.5M741.5,286.5 742.5,281.5M742.5,281.5 739.5,277.5 736.5,273.5 733.5,268.5 727.5,266.5 725.5,261.5M754.5,252.5 756.5,258.5 758.5,263.5 760.5,269.5M760.5,269.5 755.5,271.5 751.5,275.5 746.5,277.5 742.5,281.5M728.5,253.5 724.5,257.5M766.5,400.5 762.5,402.5 756.5,402.5M756.5,402.5 754.5,407.5 751.5,412.5 748.5,416.5 744.5,420.5 741.5,424.5M741.5,424.5 744.5,428.5 745.5,432.5M778.5,415.5 776.5,419.5 772.5,422.5 771.5,426.5M745.5,432.5 750.5,432.5 755.5,428.5 760.5,427.5 766.5,426.5 771.5,426.5M778.5,451.5 777.5,446.5 775.5,441.5 773.5,436.5 771.5,432.5 771.5,426.5M688.5,407.5 692.5,409.5 697.5,410.5 701.5,411.5M685.5,440.5 687.5,435.5 691.5,431.5 694.5,426.5 699.5,423.5 702.5,418.5M701.5,411.5 702.5,415.5 702.5,418.5M712.5,448.5 714.5,444.5 713.5,439.5 713.5,434.5 715.5,430.5M702.5,418.5 705.5,423.5 709.5,427.5 715.5,430.5M798.5,328.5 794.5,324.5 792.5,318.5 789.5,314.5M815.5,300.5 809.5,298.5 804.5,300.5 799.5,299.5 793.5,300.5M793.5,300.5 791.5,305.5 789.5,309.5 789.5,314.5M765.5,330.5 769.5,333.5 773.5,334.5 777.5,337.5 781.5,341.5M765.5,330.5 763.5,326.5 765.5,322.5M789.5,314.5 784.5,314.5 780.5,318.5 775.5,320.5 770.5,322.5 765.5,322.5M721.5,297.5 721.5,301.5 717.5,305.5 718.5,310.5M727.5,321.5 725.5,316.5 722.5,313.5 718.5,310.5M727.5,321.5 732.5,320.5 737.5,318.5 742.5,315.5 747.5,312.5 752.5,312.5 757.5,309.5M741.5,286.5 745.5,290.5 749.5,294.5 752.5,298.5 753.5,304.5 757.5,307.5M761.5,269.5 767.5,268.5 772.5,264.5 777.5,262.5 783.5,260.5M761.5,269.5 764.5,273.5 767.5,277.5 769.5,282.5 774.5,285.5 776.5,290.5M776.5,290.5 780.5,289.5 785.5,290.5M785.5,290.5 787.5,285.5 790.5,280.5 793.5,275.5 795.5,270.5M783.5,260.5 788.5,262.5 791.5,266.5 795.5,270.5M759.5,242.5 764.5,239.5 771.5,239.5 776.5,236.5M776.5,236.5 780.5,238.5 783.5,242.5M783.5,242.5 782.5,246.5 784.5,251.5 781.5,255.5 783.5,260.5M757.5,307.5 761.5,304.5 764.5,299.5 769.5,298.5 773.5,294.5 776.5,290.5M793.5,300.5 791.5,296.5 788.5,293.5 785.5,290.5M765.5,322.5 763.5,317.5 761.5,313.5 757.5,309.5M807.5,268.5 803.5,268.5 799.5,271.5 795.5,270.5M783.5,242.5 788.5,242.5 793.5,241.5 798.5,241.5 803.5,239.5M819.5,621.5 815.5,624.5 810.5,626.5 806.5,629.5 801.5,632.5 797.5,636.5M806.5,664.5 803.5,664.5M797.5,636.5 800.5,641.5 800.5,647.5 799.5,653.5 803.5,658.5 803.5,664.5M793.5,707.5 792.5,702.5 795.5,696.5 794.5,690.5 796.5,685.5 795.5,679.5 796.5,673.5 797.5,668.5M803.5,664.5 800.5,665.5 797.5,668.5M627.5,632.5 632.5,635.5 637.5,635.5M627.5,672.5 631.5,669.5 635.5,665.5 638.5,660.5 642.5,656.5 644.5,651.5M644.5,651.5 644.5,647.5 641.5,643.5 640.5,639.5 637.5,635.5M820.5,613.5 815.5,611.5 810.5,609.5 805.5,606.5 800.5,604.5M815.5,577.5 812.5,581.5 806.5,583.5 803.5,587.5 798.5,590.5M798.5,590.5 799.5,595.5 800.5,599.5 800.5,604.5M797.5,636.5 792.5,634.5 789.5,630.5 785.5,628.5M785.5,628.5 786.5,623.5 785.5,617.5 788.5,612.5M800.5,604.5 795.5,606.5 792.5,609.5 788.5,612.5M632.5,568.5 638.5,570.5 643.5,572.5M649.5,541.5 651.5,547.5 650.5,553.5 653.5,558.5 654.5,564.5M654.5,564.5 651.5,567.5 646.5,568.5 643.5,572.5M622.5,601.5 619.5,596.5 616.5,592.5 613.5,587.5M622.5,601.5 627.5,601.5 632.5,599.5 637.5,598.5 642.5,598.5 647.5,598.5M615.5,581.5 613.5,587.5M643.5,572.5 643.5,577.5 646.5,582.5 645.5,587.5 648.5,592.5 647.5,598.5M512.5,394.5 517.5,394.5 521.5,391.5M538.5,410.5 536.5,405.5 534.5,401.5 531.5,397.5M521.5,391.5 525.5,395.5 531.5,397.5M508.5,362.5 510.5,366.5 514.5,368.5 518.5,371.5 521.5,374.5M521.5,391.5 521.5,386.5 522.5,380.5 521.5,374.5M561.5,385.5 560.5,390.5 563.5,394.5 565.5,398.5 566.5,403.5M561.5,385.5 555.5,383.5 550.5,381.5M531.5,397.5 534.5,393.5 538.5,389.5 542.5,387.5 545.5,383.5 550.5,381.5M561.5,385.5 565.5,381.5 569.5,377.5 574.5,374.5 578.5,370.5M585.5,397.5 587.5,393.5 588.5,389.5 590.5,385.5M578.5,370.5 580.5,375.5 584.5,378.5 586.5,382.5 590.5,385.5M613.5,405.5 613.5,400.5 612.5,394.5 611.5,389.5 611.5,383.5M590.5,385.5 595.5,383.5 600.5,383.5 606.5,384.5 611.5,383.5M564.5,299.5 562.5,304.5 562.5,310.5 562.5,316.5M564.5,299.5 559.5,296.5 553.5,295.5 548.5,294.5M542.5,323.5 546.5,325.5M546.5,325.5 550.5,322.5 554.5,321.5 558.5,318.5 562.5,316.5M677.5,500.5 682.5,497.5 687.5,498.5M694.5,474.5 695.5,478.5 697.5,482.5M697.5,482.5 695.5,486.5 692.5,490.5 690.5,494.5 687.5,498.5M431.5,776.5 432.5,771.5 437.5,767.5 439.5,761.5 442.5,757.5 444.5,751.5M470.5,773.5 468.5,767.5 468.5,762.5M444.5,751.5 449.5,753.5 453.5,757.5 458.5,758.5 463.5,761.5 468.5,762.5M406.5,742.5 412.5,742.5 417.5,743.5 423.5,742.5 429.5,741.5 434.5,741.5 440.5,741.5M444.5,751.5 443.5,746.5 440.5,741.5M424.5,701.5 428.5,705.5 431.5,710.5 436.5,714.5 439.5,718.5 443.5,722.5 445.5,728.5M440.5,741.5 442.5,736.5 444.5,732.5 445.5,728.5M389.5,470.5 384.5,472.5 381.5,476.5M381.5,476.5 375.5,473.5 369.5,474.5 364.5,469.5 358.5,469.5M529.5,801.5 530.5,807.5 531.5,812.5 535.5,817.5 537.5,822.5 538.5,828.5M577.5,45.5 582.5,44.5 587.5,43.5 592.5,41.5 596.5,40.5M577.5,45.5 575.5,49.5 575.5,53.5M604.5,56.5 600.5,60.5 594.5,61.5 589.5,65.5 586.5,69.5M575.5,53.5 578.5,57.5 580.5,61.5 583.5,65.5 586.5,69.5M470.5,58.5 473.5,55.5 476.5,50.5 479.5,46.5 481.5,42.5 485.5,39.5M470.5,60.5 474.5,64.5 479.5,65.5 483.5,69.5 487.5,73.5M485.5,39.5 488.5,44.5 492.5,47.5 495.5,51.5 500.5,54.5 503.5,59.5M487.5,73.5 491.5,71.5 495.5,68.5 499.5,66.5 503.5,64.5M503.5,59.5 503.5,64.5M508.5,25.5 512.5,29.5 514.5,33.5 515.5,38.5 516.5,43.5M503.5,59.5 505.5,54.5 509.5,50.5 512.5,47.5 516.5,43.5M618.5,59.5 618.5,65.5 615.5,69.5 613.5,74.5 613.5,79.5 610.5,83.5M586.5,69.5 587.5,73.5 585.5,76.5M585.5,76.5 590.5,77.5 595.5,78.5 600.5,80.5 605.5,81.5 610.5,83.5M630.5,89.5 625.5,89.5 619.5,90.5 614.5,92.5M610.5,83.5 611.5,88.5 614.5,92.5M647.5,107.5 643.5,110.5 639.5,112.5 637.5,117.5 632.5,119.5M632.5,119.5 627.5,117.5 624.5,113.5 618.5,111.5 614.5,108.5 609.5,106.5M614.5,92.5 611.5,96.5 610.5,101.5 609.5,106.5M479.5,189.5 475.5,187.5 469.5,187.5 465.5,183.5 460.5,182.5M479.5,189.5 483.5,185.5 485.5,180.5 487.5,175.5 491.5,171.5M491.5,171.5 488.5,167.5 485.5,164.5 483.5,160.5M460.5,182.5 460.5,177.5 459.5,172.5 458.5,167.5 458.5,162.5 457.5,157.5M483.5,160.5 478.5,158.5 472.5,160.5 467.5,159.5 463.5,157.5 457.5,157.5M374.5,116.5 377.5,112.5 380.5,108.5M380.5,108.5 376.5,104.5 374.5,100.5 374.5,95.5M397.5,136.5 393.5,136.5 389.5,139.5 384.5,137.5 379.5,138.5M397.5,136.5 399.5,131.5 403.5,127.5 403.5,122.5 406.5,118.5 408.5,113.5M380.5,108.5 385.5,108.5 390.5,109.5 395.5,108.5 400.5,107.5 405.5,109.5M408.5,113.5 405.5,109.5M421.5,14.5 427.5,14.5 431.5,10.5 437.5,10.5M421.5,14.5 418.5,10.5 415.5,5.5 414.5,-0.5 410.5,-5.5M437.5,10.5 437.5,5.5 439.5,0.5 440.5,-4.5 439.5,-9.5 440.5,-14.5M448.5,15.5 445.5,12.5 441.5,10.5 437.5,10.5M377.5,-9.5 381.5,-6.5 384.5,-2.5 390.5,-2.5 394.5,1.5M394.5,1.5 397.5,-1.5 402.5,-2.5 407.5,-2.5 410.5,-5.5M374.5,95.5 375.5,90.5 380.5,88.5 384.5,84.5 386.5,80.5 389.5,76.5M405.5,109.5 406.5,103.5 408.5,98.5 406.5,92.5 408.5,86.5M408.5,86.5 404.5,83.5 398.5,81.5 393.5,79.5 389.5,76.5M577.5,45.5 574.5,42.5 573.5,38.5 572.5,34.5M555.5,58.5 560.5,57.5 565.5,56.5 570.5,54.5 575.5,53.5M555.5,58.5 554.5,52.5 554.5,46.5 550.5,41.5 548.5,36.5 548.5,30.5M572.5,34.5 566.5,33.5 560.5,32.5 554.5,31.5 548.5,30.5M600.5,31.5 597.5,27.5 594.5,22.5 589.5,20.5 586.5,16.5M605.5,0.5 601.5,-0.5 597.5,-0.5M597.5,-0.5 594.5,3.5 590.5,7.5 589.5,12.5 586.5,16.5M572.5,34.5 574.5,29.5 576.5,25.5 579.5,21.5 581.5,16.5M586.5,16.5 581.5,16.5M793.5,13.5 787.5,11.5 783.5,8.5 778.5,6.5 772.5,4.5M761.5,32.5 759.5,28.5M772.5,4.5 771.5,10.5 768.5,15.5 764.5,19.5 762.5,23.5 759.5,28.5M772.5,4.5 769.5,1.5 767.5,-3.5 766.5,-7.5M749.5,83.5 752.5,79.5 756.5,76.5 759.5,72.5M730.5,82.5 729.5,78.5 726.5,74.5 724.5,70.5 723.5,65.5M743.5,53.5 740.5,51.5 737.5,52.5M737.5,52.5 732.5,55.5 731.5,60.5 726.5,61.5 723.5,65.5M696.5,80.5 700.5,75.5 704.5,71.5 710.5,70.5 712.5,65.5M723.5,65.5 718.5,66.5 712.5,65.5M690.5,43.5 695.5,44.5 699.5,43.5 704.5,45.5M712.5,65.5 709.5,60.5 709.5,54.5 706.5,50.5 704.5,45.5M732.5,522.5 727.5,520.5 723.5,516.5 718.5,514.5 713.5,512.5M713.5,512.5 715.5,508.5 716.5,503.5 720.5,499.5 720.5,494.5M746.5,500.5 741.5,498.5 735.5,499.5 730.5,496.5 725.5,496.5 720.5,494.5M697.5,482.5 701.5,485.5 706.5,485.5 711.5,487.5 716.5,487.5M687.5,498.5 689.5,502.5 694.5,505.5 696.5,510.5 699.5,513.5 702.5,517.5M713.5,512.5 710.5,513.5 706.5,514.5 702.5,517.5M716.5,487.5 719.5,490.5 720.5,494.5M793.5,173.5 792.5,178.5 791.5,184.5 788.5,189.5 787.5,194.5 786.5,200.5 784.5,205.5M793.5,173.5 787.5,171.5 782.5,168.5 776.5,167.5 770.5,165.5M770.5,165.5 767.5,169.5 765.5,173.5 761.5,176.5 758.5,180.5M758.5,180.5 759.5,185.5 761.5,190.5 761.5,195.5 764.5,199.5 764.5,204.5M764.5,204.5 769.5,205.5 773.5,208.5 778.5,208.5M778.5,208.5 781.5,207.5 784.5,205.5M800.5,210.5 794.5,210.5 789.5,206.5 784.5,205.5M795.5,172.5 800.5,172.5 805.5,171.5 810.5,175.5 815.5,175.5M795.5,172.5 793.5,173.5M748.5,210.5 745.5,206.5 741.5,203.5 736.5,202.5 732.5,199.5M748.5,210.5 753.5,208.5 759.5,206.5 764.5,204.5M732.5,199.5 732.5,194.5 732.5,189.5 734.5,184.5 734.5,179.5M734.5,179.5 737.5,176.5M737.5,176.5 743.5,177.5 748.5,179.5 753.5,178.5 758.5,180.5M744.5,225.5 745.5,220.5 746.5,215.5 748.5,210.5M776.5,236.5 775.5,230.5 776.5,225.5 776.5,219.5 779.5,214.5 778.5,208.5M592.5,276.5 589.5,274.5 585.5,272.5M592.5,276.5 591.5,281.5 592.5,287.5 590.5,292.5 591.5,297.5M585.5,272.5 580.5,275.5 574.5,274.5 569.5,277.5M569.5,277.5 568.5,282.5 569.5,287.5 569.5,292.5 567.5,297.5M567.5,297.5 572.5,297.5 577.5,298.5 581.5,299.5 586.5,301.5M591.5,297.5 587.5,297.5 586.5,301.5M606.5,272.5 608.5,267.5 612.5,262.5M606.5,272.5 602.5,273.5 597.5,275.5 592.5,276.5M583.5,256.5 583.5,261.5 583.5,267.5 585.5,272.5M583.5,256.5 588.5,253.5 594.5,251.5 598.5,247.5M612.5,262.5 609.5,258.5 606.5,253.5 601.5,251.5 598.5,247.5M537.5,259.5 537.5,254.5M537.5,259.5 540.5,263.5 542.5,267.5 545.5,270.5M537.5,254.5 542.5,251.5 544.5,245.5 549.5,243.5 553.5,239.5M545.5,270.5 550.5,271.5 554.5,270.5 559.5,269.5M559.5,269.5 563.5,264.5 563.5,258.5 568.5,254.5 569.5,248.5M553.5,239.5 557.5,242.5 562.5,245.5 568.5,246.5M564.5,299.5 567.5,297.5M542.5,280.5 543.5,275.5 545.5,270.5M569.5,277.5 566.5,273.5 562.5,272.5 559.5,269.5M583.5,256.5 578.5,254.5 574.5,250.5 569.5,248.5M598.5,247.5 597.5,244.5 598.5,240.5M598.5,240.5 593.5,238.5 590.5,234.5 586.5,230.5 581.5,228.5M581.5,228.5 579.5,233.5 574.5,236.5 571.5,241.5 568.5,246.5M826.5,149.5 822.5,145.5 816.5,144.5 811.5,143.5 807.5,139.5M795.5,172.5 797.5,166.5 796.5,160.5 798.5,154.5 797.5,148.5 798.5,142.5M798.5,142.5 803.5,141.5 807.5,139.5M759.5,72.5 762.5,77.5 768.5,78.5 772.5,82.5 777.5,85.5 781.5,88.5M790.5,57.5 791.5,62.5 794.5,66.5M794.5,66.5 791.5,70.5 789.5,74.5 788.5,80.5 784.5,84.5 781.5,88.5M794.5,66.5 799.5,69.5 805.5,70.5 811.5,70.5 816.5,73.5M750.5,106.5 754.5,109.5 758.5,111.5 763.5,112.5M763.5,112.5 766.5,107.5 769.5,102.5 775.5,99.5 777.5,93.5 781.5,89.5M391.5,517.5 391.5,522.5 389.5,527.5 386.5,531.5M391.5,517.5 389.5,513.5 386.5,509.5 386.5,504.5M386.5,531.5 380.5,532.5 374.5,530.5 368.5,530.5 363.5,532.5M363.5,501.5 369.5,500.5 374.5,501.5 380.5,500.5M386.5,504.5 382.5,503.5 380.5,500.5M419.5,516.5 414.5,517.5 408.5,515.5 403.5,517.5 397.5,518.5 391.5,517.5M420.5,516.5 418.5,521.5 417.5,526.5 419.5,531.5 418.5,536.5 417.5,541.5M417.5,541.5 411.5,543.5 406.5,542.5 401.5,540.5 396.5,541.5 391.5,541.5M391.5,541.5 388.5,536.5 386.5,531.5M413.5,482.5 407.5,485.5 403.5,488.5 399.5,493.5 394.5,496.5 391.5,502.5 386.5,504.5M389.5,551.5 390.5,546.5 391.5,541.5M389.5,551.5 385.5,554.5 381.5,559.5 377.5,563.5 372.5,565.5M381.5,476.5 379.5,482.5 382.5,488.5 378.5,494.5 380.5,500.5M519.5,550.5 518.5,554.5 518.5,560.5 518.5,565.5 515.5,569.5M493.5,556.5 497.5,560.5 497.5,566.5 500.5,571.5M515.5,569.5 510.5,569.5 506.5,572.5 500.5,571.5M547.5,567.5 547.5,561.5 545.5,556.5M547.5,567.5 543.5,571.5 540.5,576.5M540.5,576.5 534.5,575.5 529.5,577.5 523.5,577.5M515.5,569.5 519.5,574.5 523.5,577.5M540.5,576.5 540.5,581.5 542.5,587.5 544.5,592.5 543.5,597.5M523.5,577.5 523.5,583.5 519.5,588.5 515.5,593.5 513.5,599.5M513.5,599.5 518.5,600.5 521.5,604.5M543.5,597.5 538.5,599.5 532.5,600.5 527.5,602.5 521.5,604.5M596.5,590.5 592.5,587.5 588.5,584.5 585.5,580.5 584.5,574.5 579.5,572.5M596.5,590.5 594.5,594.5 591.5,598.5 591.5,602.5M591.5,602.5 586.5,604.5 581.5,602.5 576.5,605.5 572.5,605.5M572.5,576.5 575.5,574.5 579.5,572.5M572.5,576.5 570.5,581.5 570.5,586.5 568.5,591.5 569.5,597.5 566.5,601.5M566.5,601.5 570.5,602.5 572.5,605.5M613.5,587.5 608.5,589.5 601.5,588.5 596.5,590.5M581.5,568.5 579.5,572.5M619.5,608.5 620.5,605.5 622.5,601.5M601.5,614.5 597.5,610.5 593.5,607.5 591.5,602.5M579.5,632.5 578.5,627.5 575.5,622.5 575.5,616.5 574.5,611.5 572.5,605.5M547.5,567.5 552.5,568.5 557.5,570.5 563.5,571.5 568.5,572.5 572.5,576.5M553.5,604.5 550.5,602.5 547.5,600.5 543.5,597.5M553.5,604.5 557.5,602.5 562.5,602.5 566.5,601.5M568.5,647.5 563.5,645.5 557.5,644.5 552.5,641.5 547.5,639.5 542.5,637.5M553.5,604.5 553.5,610.5 549.5,615.5 548.5,621.5 545.5,626.5 544.5,632.5 542.5,637.5M520.5,714.5 515.5,711.5 511.5,707.5 507.5,704.5 503.5,700.5 500.5,696.5M520.5,714.5 515.5,717.5 512.5,722.5 508.5,726.5 502.5,728.5 500.5,735.5 494.5,737.5 491.5,741.5M500.5,696.5 494.5,699.5 489.5,700.5 483.5,702.5 477.5,703.5 472.5,706.5M491.5,741.5 487.5,741.5M487.5,741.5 483.5,736.5 479.5,732.5 475.5,728.5 473.5,721.5 468.5,718.5M472.5,706.5 471.5,710.5 470.5,714.5 468.5,718.5M509.5,760.5 505.5,757.5 503.5,752.5 497.5,750.5 493.5,746.5 491.5,741.5M524.5,714.5 520.5,714.5M468.5,762.5 474.5,759.5 477.5,754.5 480.5,749.5 485.5,746.5 487.5,741.5M445.5,728.5 449.5,725.5 455.5,725.5 458.5,720.5 464.5,721.5 468.5,718.5M460.5,688.5 462.5,693.5 466.5,697.5 468.5,702.5 472.5,706.5M528.5,668.5 522.5,668.5 517.5,670.5 512.5,672.5 506.5,671.5 501.5,673.5M528.5,668.5 529.5,663.5 529.5,658.5 532.5,653.5 531.5,648.5 533.5,643.5 535.5,638.5M504.5,636.5 509.5,636.5 515.5,636.5 521.5,636.5 527.5,634.5M504.5,636.5 503.5,641.5 500.5,645.5 497.5,650.5 495.5,655.5 494.5,660.5 492.5,664.5M492.5,664.5 495.5,668.5 496.5,672.5 501.5,673.5M535.5,638.5 531.5,635.5 527.5,634.5M541.5,683.5 539.5,678.5 533.5,676.5 530.5,673.5 528.5,668.5M500.5,696.5 501.5,690.5 499.5,685.5 501.5,679.5 501.5,673.5M542.5,637.5 539.5,638.5 535.5,638.5M467.5,662.5 472.5,661.5 477.5,663.5 482.5,665.5 487.5,664.5 492.5,664.5M521.5,604.5 523.5,609.5 523.5,614.5 523.5,619.5 525.5,624.5 525.5,629.5 527.5,634.5M413.5,581.5 408.5,579.5 406.5,575.5M413.5,581.5 418.5,580.5 424.5,579.5 430.5,579.5M430.5,579.5 432.5,575.5 435.5,571.5 435.5,566.5M406.5,568.5 411.5,565.5 414.5,562.5 417.5,557.5 422.5,555.5 425.5,551.5M406.5,568.5 408.5,571.5 406.5,575.5M435.5,566.5 432.5,562.5 430.5,557.5 427.5,552.5M437.5,603.5 431.5,603.5 425.5,603.5 420.5,600.5 414.5,599.5M437.5,603.5 438.5,598.5 439.5,593.5M414.5,599.5 413.5,595.5 413.5,590.5 412.5,586.5 413.5,581.5M439.5,593.5 435.5,589.5 433.5,584.5 430.5,579.5M439.5,593.5 444.5,592.5 447.5,588.5 451.5,586.5 455.5,584.5M455.5,584.5 456.5,578.5 458.5,574.5M454.5,569.5 449.5,568.5 444.5,569.5 440.5,567.5 435.5,566.5M417.5,541.5 418.5,546.5 423.5,548.5 425.5,551.5M389.5,551.5 393.5,556.5 398.5,559.5 401.5,564.5 406.5,568.5M447.5,538.5 442.5,540.5 439.5,544.5 435.5,547.5 431.5,549.5 427.5,552.5M439.5,610.5 436.5,615.5 436.5,621.5 433.5,626.5M439.5,610.5 445.5,608.5 450.5,611.5 456.5,609.5 462.5,612.5 467.5,611.5M433.5,626.5 438.5,629.5 443.5,633.5 449.5,633.5 454.5,635.5 458.5,638.5 463.5,641.5M467.5,611.5 469.5,616.5 466.5,622.5 469.5,627.5 468.5,633.5M463.5,641.5 466.5,637.5 468.5,633.5M437.5,603.5 439.5,606.5 439.5,610.5M426.5,631.5 430.5,629.5 433.5,626.5M414.5,627.5 413.5,621.5 409.5,618.5 407.5,613.5 405.5,608.5M405.5,608.5 408.5,605.5 411.5,603.5 414.5,599.5M463.5,658.5 462.5,652.5 464.5,647.5 463.5,641.5M499.5,631.5 494.5,631.5 489.5,631.5 484.5,632.5 479.5,631.5 474.5,633.5 468.5,633.5M499.5,631.5 502.5,632.5 504.5,636.5M365.5,212.5 371.5,211.5 377.5,212.5 383.5,210.5 388.5,210.5M388.5,210.5 388.5,205.5 387.5,199.5 387.5,193.5 389.5,188.5M374.5,180.5 380.5,181.5 384.5,186.5 389.5,188.5M372.5,170.5 375.5,165.5 378.5,162.5 383.5,159.5M383.5,159.5 381.5,155.5 380.5,150.5 377.5,146.5 377.5,141.5M405.5,178.5 401.5,180.5 398.5,184.5 394.5,186.5 389.5,188.5M405.5,178.5 403.5,173.5 402.5,168.5 400.5,163.5M400.5,163.5 394.5,163.5 388.5,161.5 383.5,159.5M408.5,150.5 404.5,146.5 402.5,140.5 397.5,136.5M408.5,150.5 406.5,155.5 403.5,159.5 400.5,163.5M466.5,308.5 465.5,305.5M466.5,308.5 462.5,313.5 457.5,316.5 455.5,322.5 450.5,326.5M465.5,305.5 460.5,304.5 455.5,303.5 451.5,300.5 446.5,298.5 442.5,296.5M450.5,326.5 446.5,323.5 442.5,321.5 438.5,317.5 434.5,315.5 431.5,310.5M442.5,296.5 437.5,297.5 434.5,300.5 431.5,303.5M431.5,303.5 431.5,307.5 431.5,310.5M480.5,319.5 476.5,314.5 470.5,313.5 466.5,308.5M495.5,297.5 492.5,294.5 488.5,291.5 484.5,288.5 479.5,286.5M479.5,286.5 475.5,286.5 473.5,289.5M473.5,289.5 470.5,294.5 466.5,299.5 465.5,305.5M450.5,328.5 450.5,326.5M431.5,303.5 427.5,299.5 421.5,299.5 417.5,294.5M431.5,310.5 427.5,314.5 425.5,319.5 420.5,323.5 416.5,327.5M417.5,294.5 413.5,297.5 409.5,300.5 405.5,302.5 401.5,306.5M401.5,306.5 401.5,310.5M401.5,310.5 405.5,314.5 409.5,318.5 413.5,322.5 416.5,327.5M362.5,342.5 367.5,339.5 373.5,341.5 377.5,338.5 383.5,338.5 388.5,335.5M372.5,311.5 377.5,314.5 382.5,317.5 387.5,320.5M387.5,320.5 388.5,325.5 387.5,330.5 388.5,335.5M687.5,364.5 690.5,361.5 694.5,360.5 698.5,358.5M687.5,364.5 681.5,361.5 679.5,355.5 673.5,352.5M698.5,358.5 698.5,354.5 698.5,349.5 697.5,344.5 699.5,339.5M673.5,352.5 674.5,348.5 672.5,344.5 674.5,340.5M674.5,340.5 678.5,337.5 683.5,333.5M683.5,333.5 688.5,333.5 693.5,333.5M693.5,333.5 696.5,336.5 699.5,339.5M659.5,375.5 658.5,371.5 661.5,367.5 659.5,362.5M659.5,362.5 664.5,359.5 669.5,357.5 673.5,352.5M680.5,384.5 683.5,382.5M683.5,382.5 685.5,378.5 684.5,373.5 685.5,368.5 687.5,364.5M659.5,362.5 654.5,360.5 649.5,356.5 645.5,352.5 641.5,349.5M641.5,349.5 643.5,345.5 645.5,341.5 647.5,337.5 648.5,332.5M648.5,332.5 653.5,334.5 659.5,334.5 663.5,339.5 669.5,338.5 674.5,340.5M756.5,402.5 753.5,398.5 750.5,395.5 744.5,395.5 742.5,390.5M741.5,424.5 738.5,423.5 735.5,422.5M735.5,422.5 731.5,418.5 730.5,412.5 726.5,409.5 725.5,403.5M742.5,390.5 737.5,393.5 733.5,397.5 730.5,401.5 725.5,403.5M767.5,372.5 762.5,374.5 757.5,373.5 752.5,377.5 746.5,376.5 741.5,378.5M742.5,390.5 740.5,386.5 742.5,382.5 741.5,378.5M683.5,382.5 688.5,383.5 694.5,384.5 700.5,383.5 705.5,385.5 711.5,385.5M701.5,411.5 705.5,407.5 709.5,403.5 714.5,399.5M711.5,385.5 711.5,390.5 712.5,395.5 714.5,399.5M715.5,430.5 720.5,429.5 725.5,427.5 729.5,423.5 735.5,422.5M714.5,399.5 719.5,402.5 725.5,403.5M786.5,709.5 780.5,707.5 775.5,705.5 770.5,701.5 765.5,698.5 761.5,694.5M797.5,668.5 792.5,666.5 786.5,668.5 781.5,667.5 776.5,665.5 770.5,664.5 765.5,665.5M765.5,665.5 763.5,670.5 762.5,676.5 764.5,682.5 761.5,688.5 761.5,694.5M740.5,724.5 737.5,720.5 735.5,715.5 733.5,710.5M761.5,694.5 756.5,696.5 751.5,698.5 747.5,702.5 743.5,705.5 737.5,706.5 733.5,710.5M699.5,719.5 705.5,719.5 709.5,715.5 713.5,712.5 719.5,712.5 723.5,708.5 728.5,707.5M733.5,710.5 728.5,707.5M792.5,561.5 789.5,564.5 785.5,568.5 782.5,571.5 780.5,576.5M798.5,590.5 794.5,587.5 790.5,585.5 786.5,583.5 781.5,581.5M780.5,576.5 781.5,581.5M763.5,548.5 763.5,553.5 762.5,558.5 763.5,563.5 762.5,568.5M780.5,576.5 776.5,572.5 771.5,571.5 766.5,571.5 762.5,568.5M788.5,612.5 784.5,608.5 779.5,605.5 775.5,601.5 771.5,599.5M781.5,581.5 779.5,586.5 777.5,590.5 775.5,595.5 771.5,599.5M702.5,517.5 702.5,520.5M702.5,520.5 697.5,524.5 691.5,525.5 687.5,530.5 681.5,531.5 676.5,534.5M562.5,316.5 567.5,317.5 570.5,321.5 575.5,324.5 579.5,327.5M586.5,301.5 584.5,306.5 587.5,311.5 585.5,316.5 587.5,322.5 586.5,327.5M579.5,327.5 582.5,325.5 586.5,327.5M608.5,302.5 608.5,307.5 609.5,312.5 606.5,317.5 607.5,323.5 606.5,328.5M608.5,302.5 602.5,300.5 597.5,298.5 591.5,297.5M606.5,328.5 601.5,329.5 597.5,329.5 592.5,331.5M592.5,331.5 588.5,330.5 586.5,327.5M631.5,377.5 625.5,378.5 619.5,378.5 614.5,380.5M631.5,377.5 633.5,372.5 633.5,367.5 632.5,361.5 634.5,356.5 636.5,351.5M614.5,380.5 612.5,375.5 609.5,371.5 609.5,365.5 606.5,361.5M606.5,361.5 608.5,356.5 611.5,353.5 616.5,350.5 619.5,346.5M636.5,351.5 630.5,349.5 625.5,347.5 619.5,346.5M640.5,384.5 634.5,382.5 631.5,377.5M611.5,383.5 614.5,380.5M641.5,349.5 636.5,351.5M578.5,370.5 577.5,367.5 579.5,363.5M579.5,363.5 582.5,361.5 586.5,360.5 589.5,356.5M589.5,356.5 595.5,357.5 600.5,359.5 606.5,361.5M611.5,330.5 606.5,328.5M611.5,330.5 614.5,334.5 615.5,339.5 619.5,342.5 619.5,346.5M589.5,356.5 591.5,351.5 592.5,346.5 589.5,341.5 592.5,336.5 592.5,331.5M581.5,796.5 580.5,801.5 580.5,806.5 580.5,811.5 577.5,816.5 578.5,821.5M638.5,179.5 633.5,177.5 630.5,173.5 625.5,173.5 621.5,171.5M638.5,179.5 637.5,184.5 639.5,189.5 639.5,194.5 638.5,199.5M621.5,171.5 616.5,175.5 613.5,180.5 611.5,185.5M611.5,185.5 611.5,190.5 614.5,195.5 616.5,200.5 619.5,205.5M638.5,199.5 633.5,199.5 629.5,202.5 623.5,203.5 619.5,205.5M584.5,209.5 589.5,209.5 594.5,211.5 599.5,211.5 604.5,213.5 609.5,212.5 614.5,213.5M584.5,209.5 584.5,204.5 586.5,199.5 586.5,193.5 587.5,188.5 585.5,182.5M611.5,185.5 605.5,184.5 599.5,183.5 593.5,181.5 587.5,181.5M619.5,205.5 616.5,209.5 614.5,213.5M598.5,240.5 602.5,238.5 607.5,236.5 610.5,232.5 614.5,229.5 618.5,226.5M584.5,209.5 580.5,213.5M581.5,228.5 581.5,223.5 579.5,218.5 580.5,213.5M614.5,213.5 616.5,217.5 618.5,221.5 618.5,226.5M623.5,258.5 617.5,260.5 612.5,262.5M623.5,258.5 624.5,253.5 622.5,247.5 624.5,242.5 624.5,236.5 623.5,230.5M623.5,230.5 621.5,227.5 618.5,226.5M717.5,149.5 715.5,153.5 714.5,158.5 710.5,162.5 707.5,166.5M681.5,156.5 682.5,160.5 685.5,164.5M685.5,164.5 691.5,163.5 696.5,165.5 702.5,164.5 707.5,166.5M734.5,179.5 728.5,179.5 723.5,177.5 717.5,176.5 711.5,174.5M738.5,156.5 739.5,161.5 736.5,166.5 736.5,171.5 737.5,176.5M707.5,166.5 708.5,171.5 711.5,174.5M731.5,231.5 726.5,230.5 723.5,225.5 719.5,224.5 714.5,222.5M708.5,252.5 706.5,247.5 704.5,242.5 702.5,237.5M702.5,237.5 705.5,233.5 709.5,230.5 710.5,225.5 714.5,222.5M732.5,199.5 726.5,200.5 721.5,202.5 716.5,205.5 711.5,207.5M714.5,222.5 714.5,217.5 712.5,212.5 711.5,207.5M711.5,174.5 709.5,179.5 708.5,185.5 705.5,190.5 704.5,195.5 701.5,201.5M711.5,207.5 706.5,203.5 701.5,201.5M664.5,183.5 662.5,189.5 662.5,194.5 659.5,200.5M664.5,183.5 669.5,182.5 674.5,178.5 680.5,178.5M659.5,200.5 664.5,202.5 668.5,205.5 671.5,208.5 677.5,208.5 680.5,212.5M680.5,178.5 682.5,183.5 685.5,188.5 690.5,191.5 692.5,196.5 695.5,201.5M680.5,212.5 683.5,208.5 687.5,206.5 691.5,204.5 695.5,201.5M638.5,179.5 642.5,175.5 646.5,172.5 651.5,170.5M651.5,170.5 655.5,175.5 660.5,179.5 664.5,183.5M638.5,199.5 643.5,201.5 648.5,203.5M648.5,203.5 654.5,201.5 659.5,200.5M658.5,147.5 654.5,149.5M654.5,149.5 652.5,154.5 651.5,160.5 654.5,165.5 651.5,170.5M685.5,164.5 685.5,169.5 680.5,173.5 680.5,178.5M701.5,201.5 698.5,202.5 695.5,201.5M483.5,95.5 489.5,97.5 493.5,100.5M483.5,95.5 484.5,89.5 485.5,84.5 487.5,79.5 487.5,73.5M493.5,100.5 498.5,96.5 503.5,93.5 509.5,92.5 514.5,88.5M503.5,64.5 508.5,66.5 511.5,70.5M514.5,88.5 511.5,84.5 511.5,79.5 513.5,74.5 511.5,70.5M516.5,43.5 520.5,45.5 524.5,46.5 528.5,46.5M528.5,46.5 529.5,51.5 533.5,54.5 533.5,60.5 535.5,64.5M511.5,70.5 515.5,67.5 521.5,68.5 525.5,68.5 530.5,67.5 535.5,64.5M619.5,159.5 615.5,157.5 609.5,159.5 605.5,156.5 599.5,158.5 595.5,157.5M619.5,159.5 622.5,155.5 625.5,151.5 628.5,148.5 630.5,143.5M630.5,143.5 625.5,141.5 620.5,138.5 615.5,134.5 610.5,132.5 604.5,131.5M604.5,131.5 600.5,134.5 596.5,138.5 591.5,140.5 586.5,143.5M586.5,143.5 590.5,147.5 592.5,152.5 595.5,157.5M621.5,171.5 619.5,165.5 619.5,159.5M587.5,181.5 588.5,176.5 590.5,171.5 591.5,166.5 593.5,162.5 595.5,157.5M654.5,149.5 649.5,149.5 644.5,149.5 640.5,146.5 635.5,143.5 630.5,143.5M632.5,119.5 631.5,125.5 631.5,131.5 630.5,137.5 630.5,143.5M604.5,109.5 609.5,106.5M604.5,109.5 605.5,114.5 604.5,120.5 606.5,126.5 604.5,131.5M568.5,177.5 567.5,172.5 568.5,167.5 565.5,162.5 566.5,157.5 565.5,152.5M568.5,177.5 572.5,179.5 577.5,179.5 582.5,179.5 585.5,182.5M565.5,152.5 568.5,149.5 572.5,146.5 577.5,145.5 581.5,142.5M581.5,142.5 586.5,143.5M580.5,213.5 574.5,212.5 568.5,212.5 562.5,212.5 557.5,211.5M553.5,239.5 551.5,234.5 550.5,229.5 548.5,225.5 548.5,220.5M557.5,211.5 555.5,215.5 550.5,216.5 548.5,220.5M568.5,177.5 563.5,179.5 560.5,182.5 555.5,184.5 550.5,186.5M557.5,211.5 556.5,206.5 554.5,201.5 552.5,196.5 551.5,191.5 550.5,186.5M541.5,149.5 540.5,154.5 537.5,160.5 536.5,165.5 536.5,171.5M541.5,149.5 535.5,148.5 530.5,147.5 525.5,146.5 519.5,146.5 514.5,144.5M536.5,171.5 531.5,172.5 525.5,170.5 520.5,171.5 515.5,173.5 509.5,173.5M513.5,145.5 510.5,149.5 509.5,154.5 509.5,160.5 507.5,165.5 506.5,170.5M506.5,170.5 509.5,173.5M543.5,147.5 549.5,147.5 554.5,149.5 559.5,151.5 565.5,152.5M543.5,147.5 541.5,149.5M550.5,186.5 547.5,185.5 544.5,183.5M544.5,183.5 540.5,180.5 538.5,176.5 536.5,171.5M517.5,119.5 513.5,116.5 509.5,115.5 505.5,114.5 500.5,113.5M517.5,119.5 518.5,124.5 517.5,129.5 514.5,134.5 515.5,139.5 514.5,144.5M500.5,113.5 498.5,118.5 496.5,123.5 491.5,125.5 488.5,129.5 487.5,134.5M487.5,134.5 489.5,137.5M489.5,137.5 494.5,137.5 498.5,140.5 503.5,142.5 508.5,143.5 513.5,145.5M491.5,171.5 496.5,169.5 501.5,170.5 506.5,170.5M483.5,160.5 485.5,156.5 486.5,151.5 486.5,146.5 488.5,141.5 489.5,137.5M515.5,288.5 513.5,284.5 513.5,280.5 511.5,276.5M479.5,286.5 481.5,281.5 483.5,276.5 486.5,271.5M511.5,276.5 506.5,274.5 501.5,276.5 496.5,274.5 491.5,274.5 486.5,271.5M537.5,259.5 531.5,260.5 526.5,262.5 521.5,266.5 515.5,267.5M511.5,276.5 513.5,271.5 515.5,267.5M522.5,239.5 525.5,244.5 530.5,246.5 534.5,250.5 537.5,254.5M522.5,239.5 518.5,242.5 515.5,246.5 510.5,246.5 507.5,250.5M515.5,267.5 512.5,263.5 511.5,258.5 508.5,255.5 507.5,250.5M389.5,76.5 386.5,70.5 385.5,65.5M359.5,70.5 365.5,70.5 370.5,69.5 374.5,65.5 380.5,65.5 385.5,65.5M457.5,76.5 460.5,72.5 465.5,69.5 468.5,65.5 470.5,60.5M457.5,76.5 453.5,71.5 446.5,70.5 441.5,67.5 437.5,64.5M470.5,58.5 465.5,56.5 462.5,51.5 458.5,49.5 453.5,46.5 449.5,44.5M437.5,64.5 439.5,59.5 444.5,55.5 446.5,49.5 449.5,44.5M453.5,30.5 451.5,36.5 448.5,40.5M449.5,44.5 448.5,40.5M565.5,6.5 569.5,8.5 574.5,10.5 578.5,13.5 581.5,16.5M565.5,6.5 568.5,1.5 571.5,-3.5 573.5,-8.5 574.5,-14.5M486.5,1.5 488.5,-3.5 493.5,-7.5 495.5,-13.5M545.5,26.5 549.5,22.5 552.5,18.5 554.5,13.5 557.5,8.5M545.5,26.5 540.5,23.5 537.5,19.5 532.5,17.5 527.5,16.5 522.5,13.5M557.5,8.5 554.5,3.5 551.5,-1.5 547.5,-5.5 542.5,-9.5 540.5,-14.5M522.5,13.5 522.5,8.5 522.5,2.5 523.5,-2.5M545.5,27.5 548.5,30.5M565.5,6.5 561.5,6.5 557.5,8.5M509.5,21.5 514.5,19.5 518.5,16.5 522.5,13.5M528.5,46.5 531.5,42.5 535.5,39.5 538.5,34.5 542.5,31.5 545.5,27.5M759.5,28.5 755.5,26.5 749.5,24.5 746.5,19.5 741.5,17.5M737.5,52.5 732.5,49.5 732.5,43.5 729.5,40.5 726.5,35.5 724.5,31.5M741.5,17.5 737.5,22.5 732.5,24.5 728.5,28.5 724.5,31.5M694.5,15.5 699.5,16.5 704.5,14.5 709.5,16.5M704.5,45.5 707.5,41.5 713.5,39.5 717.5,35.5 721.5,31.5M709.5,16.5 712.5,19.5 714.5,24.5 717.5,28.5 721.5,31.5M751.5,473.5 753.5,467.5 757.5,463.5 762.5,460.5 763.5,454.5M749.5,474.5 745.5,470.5 741.5,468.5 736.5,468.5 732.5,465.5M745.5,434.5 750.5,437.5 753.5,442.5 757.5,445.5 759.5,451.5 763.5,454.5M745.5,434.5 742.5,440.5 737.5,443.5 734.5,447.5 732.5,453.5 728.5,457.5M728.5,457.5 729.5,462.5 732.5,465.5M781.5,484.5 776.5,482.5 770.5,482.5 766.5,479.5 761.5,477.5 756.5,474.5 751.5,473.5M746.5,500.5 744.5,494.5 748.5,489.5 748.5,484.5 749.5,479.5 749.5,474.5M778.5,451.5 773.5,452.5 768.5,453.5 763.5,454.5M716.5,487.5 720.5,483.5 723.5,478.5 726.5,474.5 728.5,469.5 732.5,465.5M745.5,432.5 745.5,434.5M714.5,452.5 719.5,455.5 724.5,454.5 728.5,457.5M693.5,263.5 688.5,263.5M688.5,263.5 686.5,257.5 684.5,252.5 678.5,248.5 677.5,242.5M702.5,237.5 696.5,236.5 690.5,236.5 685.5,234.5 679.5,232.5M677.5,242.5 677.5,237.5 679.5,232.5M680.5,212.5 678.5,218.5 679.5,224.5 677.5,229.5M679.5,232.5 677.5,229.5M648.5,203.5 647.5,208.5 648.5,213.5 648.5,218.5 647.5,223.5 648.5,228.5M677.5,229.5 671.5,228.5 665.5,228.5 660.5,230.5 654.5,229.5 648.5,228.5M623.5,230.5 629.5,231.5 634.5,230.5 639.5,231.5 644.5,231.5M644.5,231.5 648.5,228.5M704.5,312.5 702.5,316.5 698.5,320.5 697.5,324.5 695.5,329.5 693.5,333.5M704.5,312.5 700.5,308.5 695.5,306.5 690.5,304.5 686.5,300.5M683.5,333.5 682.5,328.5 679.5,324.5 678.5,319.5 676.5,315.5M676.5,315.5 679.5,312.5 682.5,308.5 683.5,303.5 686.5,300.5M703.5,282.5 699.5,286.5 694.5,289.5 690.5,292.5 685.5,295.5M688.5,263.5 684.5,266.5 680.5,270.5 675.5,272.5 672.5,276.5M672.5,276.5 674.5,281.5 673.5,286.5M673.5,286.5 676.5,290.5 682.5,292.5 685.5,295.5M704.5,312.5 708.5,310.5 713.5,310.5 718.5,310.5M686.5,300.5 685.5,295.5M787.5,137.5 787.5,132.5 786.5,127.5 784.5,123.5M787.5,137.5 783.5,140.5 778.5,142.5 774.5,146.5 769.5,149.5 765.5,151.5M784.5,123.5 780.5,119.5 774.5,120.5 770.5,117.5 765.5,115.5M765.5,115.5 763.5,120.5 761.5,125.5 759.5,130.5 760.5,136.5 755.5,140.5 754.5,145.5M765.5,151.5 760.5,147.5 754.5,145.5M770.5,165.5 768.5,161.5 766.5,156.5 765.5,151.5M798.5,142.5 795.5,139.5 791.5,139.5 787.5,137.5M763.5,112.5 765.5,115.5M813.5,117.5 808.5,114.5 802.5,112.5 796.5,111.5M817.5,84.5 812.5,87.5 807.5,90.5 803.5,92.5 797.5,94.5 792.5,95.5M796.5,111.5 794.5,106.5 792.5,101.5 792.5,95.5M807.5,139.5 810.5,134.5 809.5,127.5 810.5,122.5 813.5,117.5M784.5,123.5 788.5,119.5 793.5,115.5 796.5,111.5M781.5,89.5 785.5,92.5 788.5,94.5 792.5,95.5M485.5,583.5 484.5,588.5 480.5,592.5 478.5,596.5 475.5,600.5 472.5,604.5M485.5,583.5 490.5,582.5 494.5,582.5M494.5,582.5 497.5,587.5 502.5,590.5 504.5,594.5 507.5,599.5M472.5,605.5 477.5,606.5 481.5,609.5 486.5,608.5 491.5,611.5 495.5,612.5M495.5,612.5 499.5,607.5 503.5,603.5 507.5,599.5M473.5,571.5 477.5,575.5 480.5,579.5 485.5,583.5M455.5,584.5 458.5,588.5 463.5,591.5 464.5,596.5 469.5,599.5 472.5,604.5M500.5,571.5 499.5,575.5 497.5,579.5 494.5,582.5M513.5,599.5 510.5,600.5 507.5,599.5M467.5,611.5 470.5,608.5 472.5,605.5M499.5,631.5 499.5,626.5 499.5,621.5 496.5,617.5 495.5,612.5M378.5,622.5 383.5,619.5 386.5,613.5 391.5,611.5 395.5,607.5M363.5,607.5 367.5,603.5 369.5,597.5 372.5,592.5 377.5,589.5 380.5,584.5M395.5,607.5 391.5,602.5 390.5,597.5 388.5,591.5 386.5,586.5M386.5,586.5 383.5,585.5 380.5,584.5M391.5,641.5 386.5,639.5 382.5,636.5 378.5,634.5M405.5,608.5 400.5,609.5 395.5,607.5M371.5,571.5 373.5,576.5 378.5,579.5 380.5,584.5M406.5,575.5 401.5,577.5 396.5,580.5 390.5,582.5 386.5,586.5M417.5,201.5 422.5,204.5 427.5,206.5 433.5,206.5 438.5,207.5 444.5,210.5M417.5,201.5 415.5,196.5 415.5,192.5 415.5,187.5 415.5,182.5M415.5,182.5 420.5,180.5 424.5,176.5 429.5,175.5M429.5,175.5 434.5,178.5 438.5,182.5 443.5,186.5 447.5,190.5M447.5,190.5 445.5,195.5 446.5,200.5 445.5,205.5 444.5,210.5M408.5,150.5 413.5,151.5 417.5,148.5 421.5,148.5M405.5,178.5 409.5,181.5 415.5,182.5M421.5,148.5 424.5,153.5 426.5,158.5 429.5,163.5 432.5,168.5M432.5,168.5 430.5,171.5 429.5,175.5M460.5,182.5 455.5,184.5 452.5,188.5 447.5,190.5M457.5,157.5 451.5,158.5 446.5,159.5 441.5,162.5 437.5,165.5 432.5,168.5M388.5,210.5 393.5,212.5 395.5,215.5M417.5,201.5 414.5,204.5 410.5,207.5 408.5,211.5 404.5,214.5M395.5,215.5 400.5,215.5 404.5,214.5M401.5,306.5 397.5,302.5 394.5,296.5 389.5,293.5M401.5,310.5 397.5,314.5 392.5,318.5 387.5,320.5M379.5,295.5 384.5,293.5 389.5,293.5M416.5,285.5 412.5,282.5 407.5,280.5 401.5,281.5 397.5,278.5M416.5,285.5 416.5,290.5 417.5,294.5M389.5,293.5 390.5,288.5 396.5,284.5 397.5,278.5M390.5,337.5 395.5,336.5 400.5,334.5 406.5,334.5 411.5,334.5 416.5,332.5M390.5,337.5 391.5,341.5 393.5,346.5 394.5,351.5 395.5,356.5 395.5,361.5M395.5,361.5 400.5,362.5 405.5,362.5 410.5,360.5 415.5,360.5M415.5,360.5 417.5,356.5 417.5,351.5 416.5,346.5 418.5,341.5 419.5,336.5M419.5,336.5 416.5,332.5M388.5,335.5 390.5,337.5M416.5,327.5 416.5,332.5M391.5,364.5 395.5,361.5M419.5,364.5 415.5,360.5M440.5,338.5 435.5,338.5 429.5,337.5 424.5,335.5 419.5,336.5M734.5,370.5 729.5,369.5 724.5,371.5 719.5,369.5M734.5,370.5 738.5,366.5 740.5,360.5 744.5,356.5 746.5,350.5 749.5,345.5M719.5,369.5 719.5,363.5 719.5,358.5 720.5,353.5 720.5,348.5 722.5,342.5 723.5,337.5M727.5,333.5 723.5,337.5M727.5,333.5 731.5,337.5 735.5,339.5 740.5,340.5 744.5,344.5 749.5,345.5M741.5,378.5 737.5,374.5 734.5,370.5M711.5,385.5 714.5,382.5 716.5,378.5 718.5,374.5 719.5,369.5M770.5,368.5 766.5,365.5 764.5,360.5 760.5,357.5 755.5,354.5 752.5,350.5 749.5,345.5M698.5,358.5 703.5,363.5 708.5,365.5 714.5,366.5 719.5,369.5M699.5,339.5 705.5,339.5 711.5,338.5 717.5,338.5 723.5,337.5M727.5,321.5 726.5,325.5 727.5,329.5 727.5,333.5M765.5,330.5 761.5,333.5 757.5,337.5 754.5,342.5 749.5,345.5M637.5,635.5 641.5,631.5 645.5,626.5 650.5,623.5 653.5,618.5M653.5,618.5 652.5,613.5 650.5,609.5 648.5,604.5 649.5,599.5M644.5,651.5 649.5,654.5 655.5,655.5 660.5,655.5 666.5,654.5 671.5,657.5M672.5,626.5 666.5,625.5 662.5,622.5 658.5,620.5 653.5,618.5M672.5,626.5 673.5,630.5 673.5,635.5 673.5,640.5 674.5,645.5 676.5,650.5M671.5,657.5 672.5,652.5 676.5,650.5M648.5,690.5 653.5,689.5 656.5,684.5 660.5,681.5 665.5,679.5 669.5,676.5 674.5,675.5M671.5,657.5 673.5,663.5 673.5,669.5 674.5,675.5M686.5,711.5 684.5,706.5 685.5,700.5 682.5,696.5 684.5,690.5 681.5,685.5 681.5,680.5M674.5,675.5 678.5,677.5 681.5,680.5M728.5,707.5 727.5,702.5 725.5,696.5 722.5,691.5 723.5,685.5 720.5,680.5 719.5,674.5M681.5,680.5 687.5,680.5 692.5,678.5 697.5,676.5 703.5,676.5 708.5,675.5 714.5,674.5 719.5,674.5M568.5,356.5 567.5,352.5 565.5,347.5 565.5,342.5M568.5,356.5 563.5,357.5 558.5,359.5 554.5,362.5 548.5,360.5 544.5,363.5M565.5,342.5 560.5,340.5 555.5,337.5 550.5,336.5M550.5,336.5 548.5,341.5 544.5,345.5 543.5,351.5 539.5,355.5M539.5,355.5 539.5,358.5 541.5,361.5M544.5,363.5 541.5,361.5M579.5,363.5 576.5,360.5 572.5,358.5 568.5,356.5M579.5,327.5 576.5,332.5 571.5,334.5 567.5,338.5 565.5,342.5M550.5,381.5 549.5,376.5 548.5,371.5 544.5,368.5 544.5,363.5M546.5,325.5 549.5,330.5 550.5,336.5M522.5,345.5 527.5,347.5 530.5,351.5 534.5,354.5 539.5,355.5M521.5,374.5 526.5,371.5 530.5,367.5 536.5,364.5 541.5,361.5M388.5,677.5 383.5,678.5 377.5,675.5 372.5,676.5M543.5,147.5 544.5,142.5 546.5,137.5 543.5,131.5 545.5,126.5 545.5,121.5M581.5,142.5 581.5,137.5 578.5,133.5 575.5,129.5 575.5,124.5M545.5,121.5 551.5,121.5 557.5,122.5 563.5,122.5 569.5,124.5 575.5,124.5M604.5,109.5 599.5,108.5 594.5,108.5 588.5,108.5 583.5,106.5M583.5,106.5 580.5,110.5 581.5,116.5 579.5,121.5 575.5,124.5M457.5,157.5 456.5,151.5 454.5,146.5 454.5,141.5M421.5,148.5 425.5,144.5 428.5,138.5M454.5,141.5 449.5,141.5 444.5,141.5 438.5,140.5 433.5,140.5 428.5,138.5M408.5,113.5 412.5,116.5 417.5,115.5 422.5,117.5M422.5,117.5 424.5,122.5 424.5,128.5 426.5,133.5 428.5,138.5M522.5,232.5 526.5,229.5 530.5,226.5 533.5,222.5 537.5,220.5M522.5,232.5 517.5,228.5 513.5,224.5 507.5,222.5M537.5,220.5 534.5,216.5 533.5,211.5 528.5,208.5 525.5,204.5 522.5,200.5M507.5,222.5 506.5,217.5 508.5,212.5 510.5,208.5 509.5,203.5M522.5,200.5 518.5,199.5 514.5,199.5M509.5,203.5 514.5,199.5M522.5,239.5 523.5,235.5 522.5,232.5M548.5,220.5 542.5,221.5 537.5,220.5M544.5,183.5 540.5,187.5 535.5,190.5 531.5,193.5 526.5,195.5 522.5,200.5M509.5,173.5 511.5,178.5 511.5,183.5 512.5,189.5 512.5,194.5 514.5,199.5M479.5,189.5 482.5,194.5 482.5,199.5M482.5,199.5 487.5,200.5 493.5,199.5 498.5,203.5 504.5,200.5 509.5,203.5M413.5,53.5 414.5,48.5 418.5,44.5 419.5,39.5 420.5,33.5M413.5,53.5 408.5,52.5 403.5,51.5 399.5,51.5 394.5,54.5 389.5,53.5M417.5,25.5 417.5,30.5 420.5,33.5M417.5,25.5 412.5,25.5 407.5,23.5 402.5,22.5 396.5,24.5 391.5,24.5M387.5,26.5 391.5,24.5M387.5,26.5 389.5,32.5 386.5,37.5 385.5,42.5 385.5,47.5M385.5,47.5 389.5,49.5 389.5,53.5M437.5,64.5 432.5,65.5 429.5,68.5 424.5,68.5M424.5,68.5 422.5,64.5 419.5,61.5 414.5,58.5 413.5,53.5M448.5,40.5 443.5,38.5 437.5,38.5 431.5,37.5 426.5,35.5 420.5,33.5M422.5,77.5 418.5,81.5 412.5,82.5 408.5,86.5M422.5,77.5 422.5,72.5 424.5,68.5M385.5,65.5 386.5,61.5 388.5,57.5 389.5,53.5M421.5,14.5 420.5,20.5 417.5,25.5M394.5,1.5 393.5,6.5 391.5,12.5 392.5,18.5 391.5,24.5M366.5,17.5 372.5,19.5 377.5,22.5 382.5,25.5 387.5,26.5M354.5,45.5 359.5,46.5 364.5,46.5 370.5,45.5 375.5,48.5 380.5,47.5 385.5,47.5M758.5,-7.5 755.5,-3.5 751.5,0.5 747.5,4.5 744.5,8.5 740.5,12.5M740.5,12.5 736.5,9.5 732.5,5.5 729.5,1.5 725.5,-2.5 721.5,-5.5M741.5,17.5 740.5,12.5M709.5,16.5 710.5,11.5 712.5,6.5 717.5,3.5 718.5,-1.5 721.5,-5.5M658.5,266.5 654.5,270.5 649.5,273.5 645.5,276.5 642.5,280.5 638.5,284.5M658.5,266.5 656.5,262.5 656.5,258.5M656.5,258.5 653.5,254.5 649.5,252.5M649.5,252.5 643.5,255.5 638.5,256.5 633.5,260.5 627.5,260.5M627.5,260.5 629.5,265.5 631.5,270.5 634.5,274.5 635.5,280.5 638.5,284.5M672.5,276.5 668.5,272.5 664.5,268.5 658.5,266.5M677.5,242.5 673.5,245.5 669.5,249.5 664.5,251.5 661.5,256.5 656.5,258.5M644.5,231.5 646.5,237.5 646.5,242.5 648.5,247.5 649.5,252.5M623.5,258.5 627.5,260.5M653.5,299.5 653.5,304.5 653.5,309.5 653.5,313.5M653.5,299.5 649.5,295.5 646.5,292.5 641.5,289.5 637.5,286.5M637.5,286.5 634.5,289.5 630.5,291.5 625.5,292.5 621.5,294.5M632.5,319.5 630.5,314.5 629.5,309.5 626.5,304.5 622.5,300.5 621.5,295.5M632.5,319.5 637.5,321.5 642.5,322.5 646.5,323.5M646.5,323.5 649.5,318.5 653.5,313.5M676.5,315.5 670.5,316.5 665.5,314.5 659.5,313.5 653.5,313.5M673.5,286.5 668.5,287.5 666.5,292.5 661.5,295.5 657.5,296.5 653.5,299.5M606.5,272.5 608.5,277.5 612.5,281.5 616.5,285.5 617.5,291.5 621.5,294.5M608.5,302.5 612.5,298.5 616.5,297.5 621.5,295.5M611.5,330.5 617.5,328.5 622.5,325.5 627.5,322.5 632.5,319.5M648.5,332.5 648.5,328.5 646.5,323.5M363.5,238.5 368.5,239.5 373.5,240.5 378.5,241.5 383.5,241.5 388.5,241.5M395.5,215.5 395.5,221.5 393.5,227.5 392.5,233.5 391.5,239.5M388.5,241.5 391.5,239.5M365.5,271.5 371.5,270.5 377.5,268.5 382.5,266.5 388.5,264.5M388.5,241.5 388.5,247.5 388.5,253.5 389.5,259.5 388.5,264.5M397.5,278.5 396.5,273.5 393.5,268.5M388.5,264.5 390.5,266.5 393.5,268.5M482.5,199.5 478.5,203.5 477.5,208.5 475.5,212.5 474.5,217.5M507.5,222.5 502.5,223.5 499.5,227.5 495.5,230.5 490.5,231.5M474.5,217.5 477.5,222.5 483.5,223.5 486.5,228.5 490.5,231.5M444.5,210.5 445.5,213.5M445.5,213.5 450.5,216.5 457.5,214.5 462.5,217.5 468.5,219.5M474.5,217.5 471.5,220.5 468.5,219.5M507.5,250.5 502.5,250.5 497.5,248.5 492.5,247.5M490.5,231.5 490.5,236.5 491.5,242.5 492.5,247.5M486.5,271.5 486.5,266.5 485.5,262.5 483.5,258.5M492.5,247.5 489.5,250.5 485.5,254.5 483.5,258.5M428.5,237.5 425.5,240.5 424.5,245.5 421.5,247.5M428.5,237.5 431.5,236.5M431.5,236.5 436.5,237.5 440.5,242.5 446.5,243.5 450.5,248.5 454.5,250.5 460.5,253.5M421.5,247.5 420.5,251.5 420.5,256.5M420.5,256.5 422.5,260.5 424.5,265.5 428.5,268.5M428.5,268.5 433.5,272.5 438.5,273.5 444.5,273.5M444.5,273.5 447.5,272.5 450.5,270.5M450.5,270.5 454.5,267.5 454.5,261.5 458.5,258.5 460.5,253.5M404.5,214.5 407.5,219.5 412.5,222.5 417.5,225.5 419.5,230.5 423.5,234.5 428.5,237.5M391.5,239.5 396.5,241.5 401.5,241.5 406.5,242.5 411.5,245.5 415.5,248.5 421.5,247.5M445.5,213.5 443.5,218.5 440.5,222.5 435.5,226.5 434.5,231.5 431.5,236.5M468.5,219.5 466.5,225.5 464.5,230.5 465.5,236.5 462.5,241.5 462.5,247.5 460.5,253.5M393.5,268.5 399.5,266.5 403.5,262.5 409.5,260.5 415.5,257.5 420.5,256.5M416.5,285.5 418.5,280.5 422.5,277.5 423.5,272.5 428.5,268.5M442.5,296.5 443.5,290.5 442.5,284.5 443.5,279.5 444.5,273.5M473.5,289.5 469.5,285.5 463.5,282.5 460.5,277.5 454.5,275.5 450.5,270.5M483.5,258.5 477.5,256.5 471.5,257.5 465.5,256.5 460.5,253.5M719.5,674.5 722.5,671.5 722.5,666.5M763.5,663.5 757.5,664.5 752.5,665.5 746.5,663.5 740.5,664.5 734.5,666.5 728.5,667.5 722.5,666.5M493.5,100.5 497.5,104.5 499.5,109.5 500.5,113.5M517.5,119.5 522.5,116.5 526.5,114.5M514.5,88.5 518.5,91.5 522.5,92.5M522.5,92.5 523.5,98.5 526.5,103.5 527.5,108.5 526.5,114.5M545.5,121.5 544.5,118.5M526.5,114.5 532.5,117.5 538.5,118.5 544.5,118.5M469.5,128.5 464.5,128.5 460.5,131.5M469.5,128.5 469.5,122.5 473.5,118.5 472.5,112.5 475.5,108.5 474.5,102.5 477.5,97.5M460.5,131.5 458.5,126.5 455.5,122.5 451.5,119.5 448.5,115.5 446.5,110.5 442.5,106.5M458.5,91.5 463.5,93.5 468.5,93.5 472.5,97.5 477.5,97.5M458.5,91.5 452.5,93.5 448.5,96.5 444.5,100.5M444.5,100.5 444.5,103.5 442.5,106.5M487.5,134.5 483.5,133.5 478.5,130.5 474.5,128.5 469.5,128.5M454.5,141.5 456.5,135.5 460.5,131.5M483.5,95.5 481.5,97.5 477.5,97.5M422.5,117.5 426.5,113.5 431.5,111.5 437.5,110.5 442.5,106.5M457.5,76.5 458.5,81.5 457.5,86.5 458.5,91.5M422.5,77.5 426.5,80.5 429.5,85.5 432.5,89.5 437.5,92.5 441.5,96.5 444.5,100.5M695.5,572.5 691.5,576.5 689.5,580.5 685.5,584.5 683.5,588.5 680.5,593.5M695.5,572.5 690.5,569.5 686.5,564.5 682.5,561.5 676.5,558.5M666.5,565.5 667.5,570.5 668.5,575.5 669.5,581.5 672.5,585.5 673.5,591.5M666.5,565.5 669.5,562.5 673.5,561.5 676.5,558.5M673.5,591.5 677.5,592.5 680.5,593.5M654.5,564.5 658.5,564.5 662.5,565.5 666.5,565.5M649.5,599.5 654.5,597.5 659.5,597.5 664.5,596.5 668.5,591.5 673.5,591.5M676.5,534.5 679.5,539.5 680.5,545.5M680.5,545.5 678.5,549.5 677.5,553.5 676.5,558.5M676.5,650.5 681.5,649.5 686.5,648.5 691.5,645.5 696.5,645.5 701.5,644.5 706.5,643.5 711.5,642.5M722.5,666.5 722.5,661.5 720.5,655.5 717.5,651.5 716.5,645.5M711.5,642.5 716.5,645.5M684.5,615.5 685.5,610.5 686.5,605.5 686.5,600.5M684.5,615.5 688.5,617.5 693.5,618.5 696.5,623.5 702.5,623.5 706.5,626.5M686.5,600.5 691.5,600.5 697.5,599.5 703.5,598.5 708.5,597.5 714.5,597.5M706.5,626.5 707.5,621.5 710.5,617.5 711.5,611.5 714.5,607.5 716.5,602.5M714.5,597.5 716.5,602.5M672.5,626.5 677.5,623.5 681.5,620.5 684.5,615.5M680.5,593.5 683.5,597.5 686.5,600.5M711.5,642.5 709.5,637.5 707.5,632.5 706.5,626.5M701.5,571.5 705.5,574.5 709.5,578.5 713.5,581.5 718.5,584.5M701.5,571.5 702.5,565.5 703.5,559.5 706.5,554.5 708.5,548.5M719.5,583.5 721.5,578.5 725.5,574.5 727.5,568.5 731.5,564.5 732.5,558.5M721.5,545.5 725.5,548.5 728.5,552.5 731.5,555.5M721.5,545.5 717.5,546.5 713.5,545.5M731.5,555.5 732.5,558.5M713.5,545.5 710.5,546.5 708.5,548.5M695.5,572.5 701.5,571.5M714.5,597.5 717.5,593.5 715.5,588.5 718.5,584.5M680.5,545.5 686.5,544.5 691.5,546.5 696.5,547.5 702.5,546.5 708.5,548.5M754.5,572.5 753.5,578.5 750.5,583.5 748.5,589.5M754.5,572.5 749.5,570.5 745.5,566.5 741.5,563.5 737.5,560.5 732.5,558.5M748.5,589.5 742.5,589.5 736.5,586.5 731.5,584.5 725.5,583.5 719.5,583.5M733.5,525.5 729.5,530.5 728.5,536.5 724.5,540.5 721.5,545.5M757.5,540.5 751.5,543.5 747.5,547.5 742.5,549.5 737.5,553.5 731.5,555.5M702.5,520.5 704.5,524.5 704.5,530.5 707.5,535.5 709.5,540.5 713.5,545.5M762.5,568.5 758.5,569.5 754.5,572.5M541.5,82.5 543.5,88.5 544.5,93.5 550.5,97.5 551.5,102.5M541.5,82.5 541.5,78.5 544.5,74.5 544.5,70.5M547.5,69.5 553.5,70.5 558.5,73.5 562.5,78.5 567.5,81.5 573.5,82.5 577.5,86.5M547.5,69.5 544.5,70.5M551.5,102.5 556.5,100.5 560.5,98.5 566.5,98.5 571.5,97.5 576.5,95.5M577.5,86.5 575.5,90.5 576.5,95.5M522.5,92.5 527.5,90.5 532.5,88.5 536.5,86.5 541.5,82.5M544.5,118.5 547.5,113.5 547.5,107.5 551.5,102.5M535.5,64.5 540.5,67.5 544.5,70.5M555.5,58.5 553.5,62.5 551.5,66.5 547.5,69.5M585.5,76.5 583.5,79.5 581.5,84.5 577.5,86.5M583.5,106.5 581.5,102.5 578.5,99.5 576.5,95.5M732.5,633.5 734.5,628.5 733.5,623.5 733.5,618.5 734.5,613.5M732.5,633.5 737.5,633.5 742.5,634.5 747.5,634.5 752.5,635.5 757.5,636.5 762.5,638.5M764.5,635.5 762.5,638.5M764.5,635.5 762.5,630.5 761.5,624.5 759.5,619.5 759.5,614.5 758.5,608.5 755.5,603.5M734.5,613.5 739.5,609.5 744.5,608.5 749.5,605.5 754.5,603.5M716.5,645.5 720.5,641.5 725.5,640.5 727.5,634.5 732.5,633.5M716.5,602.5 721.5,605.5 725.5,608.5 730.5,609.5 734.5,613.5M763.5,663.5 762.5,658.5 763.5,653.5 763.5,648.5 761.5,643.5 762.5,638.5M785.5,628.5 780.5,631.5 774.5,630.5 769.5,633.5 764.5,635.5M771.5,599.5 765.5,599.5 761.5,602.5 755.5,603.5M748.5,589.5 749.5,594.5 753.5,598.5 754.5,603.5" shape-rendering="geometricPrecision" stroke-width="0.9"/>
<path clip-path="url(#tz)" d="M35.5,6.5 35.5,22.5 76.5,22.5 76.5,15.5 68.5,15.5 68.5,7.5M43.5,22.5 43.5,45.5 42.5,70.5 41.5,104.5M6.5,54.5 42.5,54.5M10.5,54.5 9.5,73.5M42.5,70.5 74.5,70.5M76.5,22.5 78.5,31.5 80.5,37.5 85.5,43.5 90.5,47.5 90.5,51.5 75.5,52.5 74.5,61.5 74.5,75.5 82.5,75.5 90.5,76.5 107.5,77.5 119.5,77.5M82.5,75.5 82.5,104.5M90.5,51.5 94.5,51.5 94.5,55.5 110.5,55.5 112.5,61.5 115.5,66.5 116.5,72.5 116.5,77.5M108.5,6.5 108.5,26.5 110.5,28.5 110.5,35.5 111.5,35.5 110.5,44.5 107.5,51.5 107.5,55.5M110.5,35.5 125.5,35.5 125.5,6.5M125.5,31.5 140.5,32.5 155.5,32.5 155.5,6.5M149.5,32.5 149.5,52.5 157.5,52.5 157.5,56.5 153.5,60.5 149.5,64.5 147.5,66.5 147.5,72.5 150.5,77.5 153.5,83.5 154.5,88.5 155.5,93.5 153.5,96.5M115.5,66.5 131.5,67.5 147.5,67.5M119.5,77.5 120.5,88.5 121.5,88.5 121.5,95.5 123.5,96.5 123.5,104.5M157.5,56.5 167.5,56.5 168.5,48.5 176.5,47.5 176.5,6.5M176.5,47.5 181.5,49.5 184.5,46.5 190.5,42.5 195.5,39.5 200.5,37.5M181.5,49.5 183.5,56.5 187.5,63.5 190.5,69.5M155.5,93.5 169.5,93.5 187.5,92.5 187.5,73.5M168.5,93.5 169.5,105.5 168.5,114.5 169.5,142.5M168.5,114.5 183.5,114.5 187.5,110.5M58.5,105.5 58.5,119.5 49.5,120.5 48.5,125.5 40.5,126.5 27.5,125.5 6.5,125.5M40.5,126.5 41.5,142.5M60.5,106.5 65.5,107.5 66.5,112.5 70.5,116.5 72.5,121.5 71.5,126.5 66.5,127.5 65.5,142.5M71.5,126.5 77.5,130.5 82.5,134.5 86.5,136.5 95.5,135.5 105.5,135.5M108.5,105.5 108.5,112.5 110.5,113.5 110.5,125.5 106.5,125.5 106.5,130.5 105.5,135.5 105.5,142.5M110.5,125.5 126.5,126.5 142.5,126.5 142.5,131.5 149.5,131.5M237.5,7.5 237.5,31.5 245.5,32.5 262.5,29.5 262.5,7.5M207.5,30.5 224.5,31.5 237.5,31.5M224.5,31.5 221.5,36.5 220.5,44.5 222.5,51.5M284.5,7.5 284.5,22.5M245.5,40.5 249.5,49.5 252.5,58.5 254.5,65.5 253.5,79.5 252.5,103.5M233.5,66.5 242.5,67.5 254.5,65.5 277.5,65.5 278.5,52.5M278.5,65.5 278.5,81.5 277.5,103.5M278.5,81.5 305.5,81.5 302.5,72.5 298.5,65.5 295.5,58.5M230.5,78.5 253.5,79.5M228.5,91.5 240.5,95.5 249.5,100.5 252.5,103.5M292.5,30.5 297.5,35.5 299.5,42.5 298.5,47.5 305.5,46.5 309.5,44.5 308.5,40.5 319.5,33.5 325.5,30.5 330.5,26.5 333.5,22.5M309.5,44.5 312.5,49.5 316.5,56.5 321.5,61.5M313.5,11.5 316.5,17.5 319.5,22.5 325.5,26.5 326.5,30.5M330.5,26.5 340.5,21.5 351.5,15.5 358.5,13.5 361.5,10.5M326.5,30.5 330.5,36.5 333.5,44.5 339.5,47.5 349.5,50.5 358.5,48.5 364.5,46.5 365.5,38.5 361.5,35.5 361.5,29.5 365.5,26.5 364.5,21.5 362.5,17.5 361.5,10.5M339.5,47.5 339.5,58.5 335.5,61.5 330.5,62.5 326.5,63.5M339.5,58.5 340.5,66.5 339.5,75.5 338.5,91.5M364.5,46.5 369.5,54.5 369.5,56.5 384.5,55.5 395.5,52.5 397.5,47.5 393.5,40.5 391.5,33.5 386.5,29.5 381.5,26.5 379.5,29.5 383.5,31.5M369.5,56.5 368.5,70.5 367.5,90.5M384.5,55.5 384.5,70.5 383.5,90.5M379.5,16.5 381.5,22.5 381.5,26.5M302.5,72.5 310.5,69.5 314.5,68.5M210.5,105.5 214.5,112.5 212.5,119.5 208.5,126.5 207.5,131.5 228.5,131.5 243.5,131.5 244.5,114.5 248.5,111.5 254.5,110.5 254.5,105.5M228.5,131.5 228.5,142.5M276.5,105.5 276.5,119.5 275.5,137.5 266.5,138.5 265.5,142.5M275.5,137.5 291.5,136.5 305.5,135.5M310.5,105.5 312.5,112.5 317.5,117.5 323.5,119.5 333.5,119.5 345.5,116.5 344.5,105.5 341.5,93.5M317.5,117.5 316.5,117.5 308.5,117.5 307.5,130.5 305.5,135.5 302.5,142.5M317.5,117.5 318.5,126.5 321.5,132.5 339.5,132.5 349.5,131.5 350.5,121.5 345.5,116.5M350.5,121.5 358.5,121.5 369.5,120.5 374.5,121.5M349.5,131.5 354.5,137.5 358.5,142.5M379.5,92.5 378.5,100.5 377.5,107.5M41.5,143.5 40.5,148.5 37.5,153.5 36.5,154.5 28.5,160.5 26.5,165.5 28.5,171.5 31.5,174.5 32.5,190.5 32.5,197.5 28.5,199.5 28.5,206.5 8.5,206.5 7.5,238.5 11.5,238.5 11.5,285.5M6.5,174.5 31.5,175.5M36.5,154.5 57.5,154.5 57.5,157.5 88.5,158.5 88.5,150.5 102.5,150.5 102.5,143.5M64.5,143.5 64.5,157.5M76.5,159.5 73.5,165.5 69.5,171.5 66.5,175.5 66.5,180.5 64.5,182.5 64.5,190.5 48.5,190.5 32.5,190.5M48.5,190.5 48.5,197.5 72.5,198.5 72.5,206.5 88.5,206.5M88.5,158.5 88.5,175.5 88.5,198.5 88.5,206.5 88.5,224.5 88.5,238.5 80.5,238.5 79.5,245.5M88.5,175.5 144.5,175.5M144.5,149.5 144.5,175.5 144.5,198.5M88.5,198.5 128.5,198.5 144.5,198.5 149.5,199.5M128.5,198.5 128.5,224.5M88.5,224.5 128.5,224.5 136.5,225.5 135.5,238.5 135.5,245.5M59.5,206.5 60.5,213.5 64.5,215.5 61.5,220.5 59.5,225.5 60.5,231.5 56.5,232.5 64.5,233.5 64.5,246.5M8.5,231.5 15.5,231.5 22.5,234.5 31.5,234.5 37.5,231.5 44.5,234.5 44.5,238.5M31.5,234.5 31.5,245.5 39.5,245.5 44.5,241.5 44.5,238.5M68.5,245.5 69.5,239.5 73.5,238.5 80.5,238.5M64.5,246.5 84.5,246.5 135.5,245.5 149.5,250.5 150.5,257.5 149.5,266.5M84.5,246.5 83.5,255.5 84.5,260.5 87.5,262.5 87.5,269.5 105.5,269.5 122.5,270.5M87.5,269.5 87.5,285.5M64.5,246.5 64.5,257.5 63.5,266.5 58.5,268.5 58.5,273.5 62.5,276.5 70.5,278.5 74.5,283.5 75.5,285.5M39.5,255.5 39.5,266.5 43.5,269.5 44.5,276.5 41.5,285.5M8.5,257.5 10.5,266.5 9.5,271.5 14.5,273.5 14.5,285.5M44.5,276.5 52.5,276.5 62.5,276.5M174.5,187.5 179.5,182.5 186.5,180.5 193.5,180.5 200.5,183.5M161.5,203.5 176.5,203.5 186.5,201.5 192.5,203.5 193.5,209.5 192.5,218.5 192.5,238.5M192.5,203.5 200.5,202.5M149.5,266.5 153.5,260.5 158.5,259.5 163.5,264.5 169.5,266.5M149.5,266.5 150.5,276.5 143.5,282.5 142.5,285.5M186.5,238.5 186.5,258.5 176.5,258.5 169.5,259.5M186.5,258.5 186.5,266.5 191.5,266.5 190.5,276.5 186.5,277.5 186.5,285.5M150.5,276.5 169.5,277.5 186.5,277.5M169.5,143.5 169.5,149.5M228.5,143.5 226.5,149.5 229.5,152.5 230.5,157.5 234.5,161.5 242.5,164.5 247.5,167.5 269.5,166.5 301.5,165.5M200.5,154.5 207.5,153.5 213.5,157.5 214.5,160.5 225.5,148.5M214.5,160.5 214.5,165.5 208.5,172.5 206.5,178.5 205.5,187.5 206.5,201.5 200.5,201.5M214.5,165.5 224.5,171.5 235.5,176.5 235.5,199.5M247.5,167.5 243.5,172.5 236.5,177.5M262.5,143.5 262.5,166.5M269.5,166.5 269.5,184.5 266.5,190.5 261.5,196.5 253.5,200.5 244.5,200.5 226.5,199.5 206.5,201.5M269.5,184.5 273.5,189.5 279.5,193.5 287.5,194.5 287.5,203.5 286.5,238.5M226.5,199.5 226.5,218.5 225.5,238.5M253.5,200.5 255.5,206.5 256.5,216.5 256.5,238.5M256.5,216.5 260.5,216.5 263.5,211.5 266.5,209.5 266.5,206.5 269.5,204.5 277.5,203.5 287.5,203.5M298.5,143.5 298.5,157.5 299.5,162.5 312.5,162.5 316.5,165.5 324.5,165.5 328.5,163.5 334.5,163.5 335.5,158.5 335.5,143.5M301.5,165.5 300.5,183.5 296.5,188.5 296.5,199.5 288.5,200.5M296.5,199.5 300.5,202.5 305.5,203.5 310.5,201.5 314.5,206.5 315.5,218.5 315.5,238.5M316.5,165.5 314.5,171.5 312.5,178.5 312.5,185.5 316.5,190.5 315.5,195.5 311.5,197.5 310.5,201.5M315.5,195.5 323.5,195.5 330.5,194.5 335.5,194.5 340.5,195.5 346.5,201.5 345.5,218.5 345.5,236.5M335.5,194.5 339.5,188.5 339.5,184.5 333.5,179.5 336.5,174.5 334.5,169.5 334.5,163.5M339.5,184.5 346.5,180.5 353.5,182.5 360.5,180.5 364.5,178.5 368.5,172.5 373.5,167.5 373.5,158.5 374.5,153.5M346.5,201.5 354.5,198.5 361.5,197.5 373.5,199.5 383.5,197.5 390.5,201.5 394.5,201.5M364.5,178.5 362.5,184.5 366.5,189.5 369.5,194.5 369.5,198.5M373.5,199.5 373.5,216.5 372.5,238.5M394.5,201.5 392.5,195.5 397.5,194.5M348.5,143.5 349.5,150.5 354.5,150.5M214.5,238.5 214.5,250.5 218.5,251.5 218.5,273.5 222.5,274.5 222.5,285.5M239.5,238.5 239.5,249.5 237.5,253.5 233.5,254.5 233.5,273.5M222.5,274.5 248.5,274.5 260.5,273.5 261.5,260.5 258.5,259.5 258.5,250.5 253.5,249.5 253.5,238.5M261.5,260.5 288.5,259.5 287.5,238.5M288.5,259.5 290.5,266.5 290.5,283.5M260.5,273.5 259.5,282.5 256.5,282.5 255.5,285.5M259.5,282.5 275.5,282.5 275.5,285.5M200.5,277.5 207.5,278.5 212.5,280.5 218.5,280.5M308.5,246.5 314.5,246.5 318.5,250.5 320.5,255.5 325.5,260.5 332.5,261.5 339.5,259.5 344.5,255.5 349.5,253.5 356.5,256.5 365.5,259.5M356.5,256.5 354.5,264.5 351.5,269.5 350.5,275.5 349.5,285.5M305.5,275.5 349.5,275.5M373.5,238.5 373.5,255.5M381.5,268.5 381.5,285.5M38.5,286.5 38.5,305.5 47.5,306.5 52.5,308.5 53.5,314.5 58.5,317.5 59.5,325.5 57.5,327.5 51.5,329.5 50.5,345.5 58.5,346.5 58.5,366.5 57.5,415.5M6.5,321.5 20.5,320.5 36.5,320.5 36.5,312.5 42.5,313.5 46.5,317.5 52.5,319.5 58.5,317.5M20.5,320.5 18.5,331.5 19.5,345.5 50.5,345.5M19.5,345.5 18.5,352.5 6.5,353.5M18.5,352.5 17.5,370.5 16.5,377.5 18.5,381.5 57.5,381.5M18.5,381.5 17.5,389.5 10.5,394.5 7.5,400.5 7.5,415.5M59.5,325.5 66.5,329.5 72.5,330.5 79.5,329.5 80.5,331.5M75.5,286.5 80.5,291.5 84.5,296.5 91.5,296.5 91.5,286.5M84.5,296.5 87.5,301.5 86.5,310.5 83.5,315.5 78.5,318.5 77.5,323.5 80.5,329.5M83.5,315.5 98.5,316.5 116.5,316.5 117.5,328.5 132.5,328.5 132.5,303.5 136.5,302.5 136.5,286.5M117.5,328.5 116.5,361.5 109.5,362.5 109.5,368.5M58.5,366.5 66.5,367.5 67.5,370.5 73.5,370.5M79.5,369.5 109.5,368.5 109.5,392.5 124.5,391.5 124.5,387.5 132.5,386.5 132.5,328.5M132.5,320.5 155.5,319.5 155.5,312.5 186.5,312.5 186.5,286.5M155.5,312.5 154.5,303.5 151.5,296.5M171.5,312.5 171.5,337.5 183.5,337.5 183.5,339.5 200.5,339.5M171.5,337.5 171.5,342.5 167.5,344.5 155.5,344.5 133.5,344.5M155.5,344.5 155.5,356.5 180.5,356.5 200.5,355.5M155.5,356.5 158.5,359.5 157.5,370.5 156.5,375.5 153.5,381.5 153.5,384.5M142.5,381.5 153.5,384.5 165.5,388.5 177.5,392.5 183.5,395.5M183.5,380.5 191.5,381.5 192.5,389.5 186.5,390.5 183.5,395.5 179.5,402.5 176.5,409.5M192.5,389.5 200.5,389.5M132.5,386.5 132.5,393.5 136.5,395.5 140.5,391.5 141.5,386.5 144.5,382.5 142.5,381.5M141.5,391.5 140.5,402.5 136.5,405.5 133.5,409.5 139.5,414.5 149.5,418.5 158.5,422.5 163.5,425.5M109.5,392.5 112.5,395.5 115.5,400.5 114.5,407.5 98.5,407.5 97.5,416.5 97.5,428.5M115.5,407.5 117.5,415.5 126.5,415.5 128.5,416.5M140.5,348.5 147.5,347.5 152.5,346.5 151.5,351.5 146.5,353.5 142.5,352.5M82.5,416.5 97.5,416.5M57.5,415.5 56.5,421.5 52.5,428.5M72.5,416.5 70.5,423.5 67.5,428.5M186.5,422.5 200.5,422.5M139.5,414.5 139.5,423.5 128.5,423.5M222.5,286.5 222.5,319.5 230.5,320.5 261.5,319.5 299.5,319.5M222.5,293.5 245.5,293.5 252.5,293.5 253.5,290.5 256.5,286.5M253.5,293.5 253.5,319.5M274.5,286.5 274.5,319.5M200.5,312.5 222.5,312.5M202.5,312.5 202.5,352.5 202.5,374.5M230.5,320.5 230.5,344.5 226.5,344.5 226.5,352.5 202.5,352.5M226.5,349.5 237.5,349.5 245.5,349.5 245.5,344.5 259.5,344.5M237.5,349.5 238.5,366.5 233.5,366.5 233.5,389.5M238.5,366.5 264.5,365.5 264.5,389.5M261.5,319.5 261.5,354.5 276.5,355.5 278.5,357.5 283.5,356.5 286.5,353.5 290.5,350.5 295.5,349.5M276.5,355.5 277.5,359.5 276.5,365.5 279.5,368.5 275.5,369.5 270.5,371.5 264.5,371.5M202.5,374.5 210.5,374.5 216.5,370.5 223.5,368.5 233.5,367.5M206.5,376.5 206.5,389.5M200.5,389.5 216.5,390.5 233.5,389.5 253.5,390.5 291.5,390.5M216.5,390.5 216.5,406.5 223.5,406.5 224.5,398.5 232.5,397.5 233.5,390.5M216.5,406.5 216.5,422.5 216.5,428.5M253.5,390.5 254.5,422.5M200.5,421.5 216.5,422.5 238.5,422.5 239.5,423.5 254.5,422.5 267.5,422.5 270.5,421.5 288.5,421.5M302.5,298.5 314.5,298.5 321.5,299.5 340.5,299.5 361.5,299.5 381.5,299.5 400.5,299.5M349.5,286.5 349.5,299.5M380.5,286.5 380.5,299.5 380.5,328.5M341.5,299.5 341.5,327.5 341.5,337.5 349.5,338.5 349.5,354.5 357.5,354.5 357.5,362.5 342.5,362.5 339.5,368.5 326.5,369.5 318.5,369.5 305.5,368.5 295.5,368.5M300.5,322.5 315.5,322.5 316.5,325.5 318.5,326.5 318.5,334.5 318.5,369.5M318.5,334.5 341.5,334.5M341.5,327.5 376.5,327.5 380.5,328.5 382.5,335.5 386.5,337.5 391.5,338.5 393.5,342.5 400.5,341.5M391.5,338.5 397.5,333.5 400.5,332.5M393.5,342.5 391.5,345.5 386.5,349.5 385.5,354.5 383.5,359.5 376.5,364.5 372.5,367.5 369.5,370.5 365.5,372.5M357.5,362.5 364.5,363.5 366.5,368.5 363.5,373.5 367.5,377.5 371.5,381.5 376.5,387.5 381.5,389.5 386.5,395.5 387.5,400.5 391.5,403.5 392.5,407.5 400.5,411.5M326.5,369.5 326.5,402.5 327.5,413.5 335.5,414.5 357.5,415.5 366.5,415.5M326.5,402.5 321.5,404.5 316.5,408.5 310.5,411.5 303.5,412.5 301.5,417.5 290.5,417.5M301.5,417.5 300.5,422.5 302.5,426.5 301.5,428.5M335.5,414.5 333.5,419.5 330.5,425.5 329.5,428.5M357.5,415.5 358.5,428.5M366.5,415.5 367.5,400.5 374.5,400.5 374.5,403.5M400.5,299.5 420.5,299.5 428.5,300.5 430.5,305.5 435.5,312.5 439.5,318.5 444.5,315.5 449.5,311.5 455.5,308.5 475.5,308.5 477.5,305.5 484.5,298.5 491.5,293.5 495.5,286.5M420.5,286.5 420.5,299.5M456.5,286.5 455.5,308.5M428.5,300.5 422.5,307.5 417.5,314.5 412.5,321.5 407.5,326.5 400.5,331.5M439.5,318.5 437.5,326.5 436.5,332.5 440.5,331.5 445.5,328.5 451.5,331.5 454.5,337.5 458.5,338.5 458.5,345.5 456.5,350.5 452.5,353.5 450.5,356.5 450.5,361.5M475.5,308.5 475.5,315.5 478.5,317.5 480.5,322.5 482.5,328.5 482.5,332.5 472.5,331.5 467.5,335.5 463.5,338.5 458.5,338.5M482.5,330.5 498.5,331.5 507.5,330.5M400.5,341.5 407.5,342.5 415.5,347.5 422.5,347.5 422.5,355.5 417.5,361.5 414.5,366.5M450.5,356.5 458.5,356.5 461.5,359.5 463.5,364.5 477.5,364.5 482.5,365.5 482.5,361.5 488.5,359.5 489.5,352.5 490.5,345.5 493.5,342.5 490.5,338.5 495.5,337.5 498.5,331.5M477.5,364.5 472.5,372.5 468.5,374.5 467.5,379.5 465.5,384.5 463.5,388.5 454.5,389.5 453.5,398.5 451.5,398.5 450.5,407.5M472.5,372.5 480.5,371.5 490.5,371.5 514.5,372.5M490.5,371.5 489.5,388.5 489.5,406.5M400.5,410.5 426.5,407.5 450.5,407.5 462.5,407.5 465.5,406.5 489.5,406.5 519.5,406.5M462.5,407.5 463.5,428.5M493.5,406.5 493.5,428.5M436.5,389.5 430.5,391.5 431.5,395.5 427.5,398.5 425.5,402.5 428.5,405.5 426.5,407.5M400.5,410.5 415.5,411.5 421.5,414.5 423.5,417.5M49.5,429.5 47.5,437.5 47.5,453.5 58.5,453.5M66.5,429.5 65.5,439.5 61.5,446.5 58.5,453.5 56.5,458.5 55.5,467.5 57.5,473.5 52.5,480.5 51.5,485.5 54.5,487.5M6.5,445.5 17.5,442.5 22.5,445.5 22.5,453.5 26.5,458.5 35.5,451.5 47.5,445.5M26.5,458.5 19.5,464.5 16.5,471.5 15.5,480.5 6.5,480.5M16.5,471.5 22.5,470.5 33.5,473.5 40.5,470.5 51.5,468.5 55.5,467.5M54.5,487.5 70.5,486.5 77.5,483.5M54.5,487.5 54.5,499.5 52.5,506.5 53.5,513.5 49.5,511.5 47.5,508.5 40.5,511.5 35.5,516.5 29.5,511.5 25.5,506.5 22.5,501.5 26.5,495.5 24.5,490.5 15.5,480.5M6.5,511.5 16.5,511.5 22.5,510.5M16.5,511.5 16.5,538.5 15.5,571.5M47.5,508.5 48.5,520.5 51.5,527.5 63.5,527.5M51.5,527.5 45.5,531.5 40.5,530.5 36.5,538.5 33.5,536.5M56.5,457.5 80.5,457.5 84.5,456.5M95.5,429.5 95.5,446.5 112.5,446.5 116.5,443.5 112.5,436.5 110.5,429.5M112.5,446.5 112.5,451.5 102.5,453.5 101.5,465.5 95.5,465.5M112.5,451.5 119.5,457.5 125.5,458.5 130.5,455.5M125.5,458.5 121.5,464.5 119.5,471.5 112.5,475.5 111.5,481.5 112.5,499.5 111.5,524.5 111.5,539.5M88.5,494.5 96.5,496.5 103.5,491.5 109.5,489.5 111.5,481.5M77.5,516.5 91.5,517.5 102.5,520.5 103.5,524.5 111.5,524.5M68.5,531.5 72.5,536.5 80.5,539.5 80.5,562.5M80.5,539.5 117.5,540.5 118.5,562.5M56.5,566.5 66.5,561.5 80.5,562.5 91.5,563.5 118.5,562.5 125.5,563.5 147.5,562.5 153.5,563.5M125.5,563.5 125.5,571.5M111.5,532.5 133.5,532.5 147.5,531.5M147.5,531.5 147.5,562.5M112.5,500.5 142.5,500.5 160.5,500.5 191.5,501.5 191.5,524.5 200.5,524.5M147.5,531.5 153.5,527.5 167.5,526.5 184.5,525.5 191.5,524.5M167.5,526.5 167.5,538.5 169.5,559.5 161.5,560.5 161.5,564.5M184.5,525.5 183.5,539.5 191.5,544.5 196.5,546.5 196.5,554.5 179.5,555.5 179.5,559.5 169.5,559.5M130.5,455.5 139.5,448.5 147.5,445.5 154.5,442.5 158.5,437.5M139.5,461.5 147.5,461.5 147.5,469.5 154.5,469.5M154.5,469.5 160.5,471.5 167.5,464.5 174.5,457.5 181.5,453.5 184.5,446.5 185.5,429.5M181.5,453.5 183.5,464.5 185.5,473.5 186.5,485.5 186.5,500.5M186.5,453.5 200.5,454.5M186.5,485.5 200.5,485.5M28.5,550.5 32.5,552.5 35.5,555.5 30.5,558.5 27.5,555.5 28.5,550.5M6.5,541.5 16.5,543.5M6.5,562.5 10.5,566.5 16.5,568.5M142.5,500.5 151.5,509.5 155.5,518.5 156.5,526.5M200.5,562.5 191.5,563.5 191.5,571.5M216.5,429.5 216.5,454.5 216.5,485.5 216.5,523.5M200.5,454.5 216.5,454.5 246.5,454.5 266.5,453.5 285.5,453.5M246.5,429.5 246.5,454.5 247.5,485.5 247.5,521.5M200.5,485.5 216.5,485.5 247.5,485.5 281.5,485.5M200.5,524.5 210.5,523.5 216.5,523.5 222.5,523.5 244.5,521.5 261.5,518.5 279.5,515.5M210.5,523.5 210.5,554.5M244.5,521.5 244.5,554.5M200.5,554.5 206.5,555.5 229.5,555.5 252.5,555.5 280.5,554.5M206.5,555.5 206.5,563.5 214.5,563.5M229.5,555.5 229.5,571.5M252.5,555.5 252.5,571.5M283.5,477.5 305.5,477.5 319.5,477.5M301.5,429.5 305.5,434.5 307.5,439.5 310.5,444.5 308.5,450.5 312.5,452.5 319.5,450.5 323.5,448.5 326.5,451.5 330.5,453.5 333.5,450.5 331.5,444.5 328.5,437.5 327.5,429.5M326.5,451.5 323.5,458.5 317.5,462.5 312.5,466.5 310.5,472.5 316.5,475.5 319.5,479.5 314.5,481.5 314.5,488.5 310.5,494.5 306.5,499.5 307.5,506.5 309.5,511.5 303.5,517.5 302.5,522.5 305.5,527.5 308.5,534.5 309.5,541.5 314.5,545.5 319.5,550.5 321.5,559.5 319.5,566.5 323.5,571.5M309.5,506.5 339.5,506.5 339.5,515.5 342.5,516.5 342.5,520.5 351.5,520.5 376.5,520.5 396.5,520.5M351.5,520.5 351.5,531.5 347.5,532.5 346.5,545.5 344.5,550.5 347.5,555.5 340.5,559.5 337.5,557.5 331.5,564.5 328.5,568.5M339.5,506.5 342.5,502.5 342.5,493.5 350.5,492.5 351.5,480.5 354.5,479.5 361.5,485.5 369.5,492.5 376.5,501.5 400.5,501.5M351.5,480.5 350.5,462.5 350.5,446.5 354.5,444.5 354.5,430.5 357.5,429.5M333.5,458.5 334.5,462.5 350.5,462.5M357.5,473.5 357.5,462.5 381.5,461.5 383.5,455.5 385.5,450.5 386.5,443.5 387.5,430.5 400.5,430.5M396.5,501.5 396.5,520.5 397.5,534.5 400.5,541.5M395.5,485.5 400.5,485.5M396.5,528.5 386.5,530.5 383.5,534.5 379.5,541.5 376.5,550.5 370.5,557.5 365.5,562.5 358.5,569.5 356.5,571.5M280.5,531.5 307.5,532.5M393.5,446.5 395.5,453.5 398.5,460.5 400.5,464.5M462.5,429.5 462.5,437.5 432.5,438.5 410.5,443.5 410.5,446.5M432.5,438.5 432.5,466.5 439.5,460.5 444.5,461.5 449.5,466.5 458.5,468.5 463.5,465.5 466.5,469.5 470.5,480.5 473.5,484.5 505.5,484.5M465.5,436.5 472.5,438.5 470.5,446.5 472.5,460.5 478.5,461.5 478.5,453.5 486.5,452.5 486.5,441.5 493.5,439.5 493.5,429.5M493.5,439.5 512.5,440.5 526.5,439.5M486.5,452.5 493.5,458.5 505.5,461.5 505.5,467.5 505.5,484.5 506.5,498.5 504.5,502.5 495.5,505.5 488.5,511.5 488.5,516.5 479.5,516.5 479.5,508.5 471.5,507.5 470.5,501.5 463.5,502.5 463.5,508.5 441.5,507.5 440.5,500.5 433.5,500.5 433.5,508.5 400.5,508.5M505.5,467.5 513.5,467.5 514.5,463.5 533.5,462.5 534.5,459.5M506.5,492.5 518.5,492.5 523.5,497.5 525.5,499.5M400.5,469.5 407.5,473.5 417.5,470.5 426.5,473.5 432.5,466.5M426.5,473.5 428.5,480.5 433.5,483.5 434.5,500.5M465.5,481.5 463.5,490.5 463.5,502.5M433.5,508.5 430.5,511.5 430.5,535.5 426.5,536.5 426.5,546.5 411.5,547.5 400.5,546.5M411.5,547.5 411.5,560.5 413.5,571.5M426.5,546.5 433.5,547.5 435.5,553.5 442.5,548.5 444.5,554.5 450.5,554.5 449.5,571.5M450.5,554.5 449.5,545.5 451.5,539.5 452.5,524.5 448.5,520.5 450.5,509.5M451.5,539.5 479.5,539.5 484.5,539.5 506.5,539.5M488.5,516.5 487.5,527.5 484.5,532.5 484.5,539.5M479.5,539.5 479.5,571.5M506.5,532.5 507.5,566.5 528.5,567.5M506.5,532.5 521.5,531.5 525.5,525.5M530.5,452.5 544.5,451.5 546.5,453.5M400.5,481.5 403.5,485.5M80.5,540.5 80.5,556.5 79.5,562.5 73.5,561.5 66.5,562.5 59.5,564.5 56.5,568.5 52.5,573.5M79.5,562.5 84.5,564.5 87.5,569.5 87.5,594.5M84.5,563.5 105.5,563.5 125.5,563.5 147.5,563.5 161.5,562.5 162.5,559.5 179.5,559.5 179.5,554.5 196.5,554.5 196.5,540.5M125.5,563.5 125.5,594.5M147.5,540.5 147.5,563.5 146.5,594.5M161.5,562.5 162.5,571.5 164.5,578.5 169.5,582.5 171.5,586.5 177.5,587.5 178.5,594.5M191.5,555.5 191.5,594.5M27.5,549.5 29.5,555.5 33.5,557.5 28.5,559.5 27.5,562.5 30.5,568.5 36.5,571.5 38.5,576.5 37.5,584.5 39.5,589.5 35.5,591.5 32.5,596.5 32.5,606.5 6.5,607.5M6.5,559.5 10.5,562.5 16.5,566.5 17.5,572.5 21.5,574.5 23.5,572.5 28.5,573.5M32.5,606.5 34.5,613.5 36.5,622.5 36.5,631.5 36.5,638.5 41.5,643.5 43.5,648.5 44.5,654.5 48.5,661.5 54.5,663.5 56.5,670.5 61.5,675.5 66.5,677.5 73.5,680.5 77.5,682.5M43.5,596.5 42.5,603.5 45.5,608.5 51.5,607.5 52.5,603.5 50.5,600.5 46.5,601.5M51.5,607.5 48.5,613.5 47.5,617.5 52.5,617.5 63.5,615.5 66.5,620.5 70.5,620.5 77.5,596.5M70.5,620.5 84.5,620.5 102.5,619.5 102.5,610.5 101.5,599.5 103.5,594.5M102.5,619.5 98.5,626.5 93.5,631.5 93.5,638.5 95.5,643.5M98.5,625.5 123.5,625.5 123.5,640.5M123.5,594.5 124.5,640.5M139.5,594.5 140.5,603.5 144.5,610.5 147.5,619.5 147.5,642.5 147.5,663.5 146.5,682.5M147.5,619.5 154.5,621.5 165.5,624.5 176.5,624.5M35.5,638.5 44.5,640.5 56.5,639.5 61.5,635.5 66.5,624.5M56.5,639.5 61.5,645.5 66.5,652.5 75.5,654.5 88.5,655.5M70.5,631.5 75.5,638.5 73.5,647.5 66.5,652.5M18.5,647.5 26.5,645.5 35.5,648.5 43.5,648.5M18.5,647.5 19.5,654.5 17.5,661.5 21.5,668.5 23.5,673.5 20.5,679.5 19.5,682.5M6.5,670.5 10.5,675.5 14.5,677.5 19.5,679.5M23.5,673.5 31.5,676.5 40.5,672.5 51.5,675.5 56.5,670.5M95.5,650.5 102.5,656.5 109.5,661.5 114.5,666.5 117.5,663.5 121.5,666.5M88.5,661.5 86.5,668.5 83.5,675.5 82.5,682.5M137.5,657.5 142.5,656.5 146.5,663.5M146.5,663.5 154.5,666.5 165.5,669.5 176.5,666.5 183.5,663.5M158.5,666.5 159.5,675.5 158.5,682.5M146.5,663.5 140.5,670.5 136.5,677.5M193.5,578.5 195.5,584.5 200.5,586.5M125.5,641.5 128.5,647.5 131.5,652.5M210.5,540.5 210.5,554.5M244.5,540.5 244.5,554.5M200.5,555.5 206.5,555.5 229.5,555.5 252.5,555.5 280.5,555.5M206.5,555.5 206.5,563.5 214.5,563.5 214.5,601.5M229.5,555.5 229.5,594.5 230.5,595.5 231.5,601.5M252.5,555.5 252.5,594.5 252.5,601.5M214.5,601.5 231.5,601.5 252.5,601.5 248.5,603.5 248.5,618.5 248.5,645.5M252.5,594.5 281.5,594.5M248.5,618.5 283.5,618.5M200.5,625.5 214.5,625.5 222.5,624.5 223.5,622.5 248.5,622.5M214.5,601.5 215.5,625.5 214.5,638.5 214.5,649.5M283.5,584.5 289.5,584.5 290.5,581.5 314.5,581.5M309.5,540.5 314.5,544.5 319.5,548.5 321.5,555.5 319.5,562.5 321.5,568.5 317.5,571.5 319.5,576.5 317.5,582.5 317.5,589.5 319.5,594.5 317.5,599.5 317.5,605.5 314.5,610.5 312.5,615.5 313.5,620.5M321.5,568.5 326.5,571.5 330.5,566.5 335.5,562.5 333.5,559.5 339.5,556.5 344.5,550.5 347.5,545.5 347.5,540.5M330.5,566.5 337.5,569.5 343.5,572.5 349.5,572.5 354.5,571.5 376.5,571.5 400.5,571.5M343.5,572.5 344.5,584.5 343.5,594.5M354.5,571.5 361.5,566.5 369.5,559.5 374.5,550.5 377.5,543.5 378.5,540.5M376.5,595.5 370.5,598.5 366.5,605.5 365.5,612.5 367.5,619.5 369.5,624.5 371.5,631.5 374.5,635.5M200.5,594.5 205.5,593.5M411.5,547.5 426.5,547.5 433.5,547.5 433.5,554.5 442.5,547.5 443.5,554.5 449.5,554.5 449.5,576.5 450.5,593.5M426.5,540.5 426.5,547.5M411.5,547.5 411.5,555.5 413.5,557.5 411.5,562.5 411.5,570.5 411.5,593.5M400.5,571.5 406.5,571.5 406.5,577.5 411.5,577.5M452.5,540.5 451.5,547.5 449.5,547.5 449.5,554.5M449.5,576.5 466.5,577.5 479.5,576.5 485.5,576.5 488.5,570.5 493.5,569.5 500.5,572.5 502.5,568.5 506.5,569.5 507.5,540.5M480.5,540.5 479.5,576.5M485.5,576.5 501.5,576.5 501.5,593.5M506.5,566.5 516.5,566.5 529.5,567.5M405.5,594.5 404.5,619.5 403.5,645.5M434.5,594.5 434.5,617.5 434.5,643.5M460.5,594.5 460.5,620.5M499.5,595.5 495.5,601.5 492.5,608.5 491.5,614.5 495.5,609.5 501.5,609.5 502.5,613.5 505.5,613.5 505.5,629.5 505.5,633.5 509.5,633.5 509.5,663.5 509.5,682.5M476.5,613.5 480.5,613.5 482.5,615.5M476.5,617.5 470.5,621.5 469.5,626.5 472.5,631.5 471.5,636.5 473.5,640.5 469.5,643.5 465.5,645.5 464.5,652.5M465.5,645.5 484.5,645.5 501.5,644.5 501.5,634.5 505.5,633.5M505.5,629.5 525.5,629.5 525.5,632.5 540.5,628.5M509.5,663.5 528.5,665.5 533.5,661.5M540.5,628.5 539.5,638.5 536.5,647.5 533.5,654.5 531.5,663.5 526.5,673.5 527.5,682.5M6.5,672.5 12.5,676.5 17.5,674.5 21.5,679.5 19.5,686.5 22.5,693.5 28.5,698.5M21.5,679.5 31.5,677.5 42.5,676.5 51.5,674.5 56.5,669.5M51.5,674.5 52.5,683.5 56.5,688.5M73.5,669.5 75.5,679.5 72.5,686.5 77.5,691.5 84.5,695.5 91.5,698.5 95.5,693.5 105.5,691.5 116.5,688.5 114.5,679.5 112.5,669.5M95.5,693.5 96.5,702.5 103.5,704.5 107.5,709.5 114.5,714.5 123.5,721.5 130.5,728.5 133.5,737.5M91.5,698.5 88.5,705.5 82.5,711.5 77.5,718.5 73.5,723.5M116.5,688.5 126.5,681.5 133.5,677.5 144.5,676.5 146.5,669.5M144.5,676.5 149.5,684.5 158.5,690.5 161.5,695.5M161.5,695.5 160.5,704.5 163.5,711.5 161.5,720.5M126.5,681.5 125.5,690.5 126.5,700.5 130.5,709.5M405.5,239.5 405.5,257.5 404.5,277.5M396.5,275.5 402.5,277.5 407.5,278.5 411.5,274.5 415.5,278.5 418.5,275.5 421.5,275.5 422.5,281.5 425.5,284.5 429.5,284.5 434.5,282.5 435.5,280.5 438.5,281.5 440.5,278.5 441.5,275.5 439.5,273.5 436.5,271.5 436.5,264.5 437.5,260.5 438.5,251.5 440.5,245.5 443.5,244.5 441.5,241.5 440.5,239.5M441.5,273.5 452.5,273.5 453.5,278.5 456.5,280.5 456.5,284.5 460.5,284.5 464.5,282.5 470.5,278.5 475.5,274.5 480.5,269.5 486.5,262.5 490.5,256.5 493.5,251.5M456.5,284.5 455.5,289.5 455.5,309.5 448.5,310.5 445.5,312.5 440.5,318.5M421.5,281.5 420.5,291.5 420.5,299.5M396.5,299.5 401.5,299.5 420.5,299.5 427.5,300.5 429.5,304.5 425.5,305.5 421.5,309.5 417.5,315.5 415.5,318.5M429.5,304.5 434.5,310.5 438.5,316.5 439.5,318.5M455.5,309.5 475.5,309.5 479.5,318.5M475.5,309.5 476.5,305.5 480.5,304.5 484.5,299.5 491.5,294.5 494.5,287.5 497.5,281.5"/>
</g>
<pattern id="mp" width="40" height="40" patternUnits="userSpaceOnUse"><rect width="40" height="40" fill="#000"/><rect x="20" y="9" width="2" height="1" fill="#004565"/><rect x="34" y="6" width="2" height="3" fill="#004565"/><rect x="32" y="13" width="1" height="1" fill="#004565"/><rect x="4" y="15" width="1" height="3" fill="#004565"/><rect x="36" y="7" width="1" height="3" fill="#5c4f4b"/><rect x="36" y="37" width="2" height="1" fill="#5c4f4b"/><rect x="2" y="35" width="1" height="2" fill="#004565"/><rect x="34" y="7" width="3" height="2" fill="#004565"/><rect x="11" y="6" width="3" height="3" fill="#004565"/><rect x="23" y="6" width="3" height="1" fill="#004565"/><rect x="39" y="13" width="2" height="3" fill="#004565"/><rect x="20" y="29" width="3" height="2" fill="#004565"/><rect x="15" y="11" width="4" height="1" fill="#004565"/><rect x="19" y="33" width="2" height="2" fill="#5c4f4b"/><rect x="18" y="38" width="1" height="1" fill="#004565"/><rect x="10" y="21" width="1" height="2" fill="#004565"/><rect x="4" y="35" width="3" height="2" fill="#004565"/><rect x="22" y="38" width="2" height="3" fill="#5c4f4b"/><rect x="4" y="5" width="2" height="2" fill="#5c4f4b"/><rect x="4" y="3" width="4" height="2" fill="#004565"/><rect x="28" y="18" width="4" height="2" fill="#5c4f4b"/><rect x="22" y="1" width="2" height="2" fill="#004565"/><rect x="7" y="31" width="1" height="1" fill="#5c4f4b"/><rect x="8" y="15" width="2" height="2" fill="#5c4f4b"/><rect x="31" y="5" width="1" height="2" fill="#004565"/><rect x="17" y="8" width="2" height="3" fill="#004565"/><rect x="26" y="22" width="4" height="2" fill="#5c4f4b"/><rect x="9" y="5" width="1" height="1" fill="#004565"/><rect x="14" y="0" width="2" height="3" fill="#004565"/><rect x="18" y="0" width="1" height="2" fill="#004565"/><rect x="39" y="36" width="2" height="1" fill="#5c4f4b"/><rect x="32" y="39" width="4" height="1" fill="#004565"/><rect x="35" y="25" width="2" height="2" fill="#004565"/><rect x="30" y="25" width="1" height="1" fill="#004565"/><rect x="13" y="28" width="1" height="1" fill="#004565"/><rect x="3" y="6" width="1" height="3" fill="#004565"/><rect x="6" y="23" width="3" height="1" fill="#004565"/><rect x="13" y="39" width="2" height="1" fill="#004565"/><rect x="22" y="38" width="2" height="2" fill="#004565"/><rect x="31" y="29" width="2" height="2" fill="#004565"/><rect x="9" y="6" width="4" height="2" fill="#5c4f4b"/><rect x="30" y="10" width="3" height="1" fill="#004565"/><rect x="33" y="23" width="1" height="3" fill="#5c4f4b"/><rect x="33" y="19" width="4" height="1" fill="#5c4f4b"/><rect x="16" y="33" width="2" height="1" fill="#004565"/><rect x="14" y="34" width="3" height="3" fill="#004565"/><rect x="14" y="39" width="1" height="1" fill="#5c4f4b"/><rect x="14" y="12" width="3" height="2" fill="#004565"/><rect x="1" y="1" width="2" height="2" fill="#004565"/><rect x="38" y="22" width="2" height="2" fill="#5c4f4b"/><rect x="23" y="5" width="1" height="1" fill="#004565"/><rect x="12" y="21" width="1" height="2" fill="#004565"/><rect x="39" y="0" width="2" height="2" fill="#5c4f4b"/><rect x="5" y="7" width="2" height="1" fill="#004565"/><rect x="11" y="27" width="4" height="2" fill="#004565"/><rect x="25" y="29" width="2" height="1" fill="#5c4f4b"/><rect x="10" y="8" width="1" height="1" fill="#004565"/><rect x="29" y="9" width="3" height="3" fill="#5c4f4b"/><rect x="22" y="9" width="3" height="3" fill="#004565"/><rect x="0" y="6" width="3" height="1" fill="#004565"/><rect x="12" y="13" width="1" height="2" fill="#004565"/><rect x="32" y="15" width="3" height="2" fill="#004565"/><rect x="26" y="8" width="1" height="2" fill="#5c4f4b"/><rect x="37" y="33" width="2" height="3" fill="#004565"/><rect x="9" y="33" width="3" height="1" fill="#5c4f4b"/><rect x="11" y="38" width="1" height="1" fill="#004565"/><rect x="30" y="39" width="4" height="1" fill="#004565"/><rect x="20" y="33" width="3" height="3" fill="#004565"/><rect x="6" y="35" width="1" height="1" fill="#004565"/><rect x="2" y="6" width="3" height="2" fill="#004565"/><rect x="4" y="28" width="2" height="3" fill="#5c4f4b"/><rect x="38" y="32" width="1" height="2" fill="#004565"/><rect x="34" y="30" width="3" height="1" fill="#5c4f4b"/><rect x="16" y="35" width="1" height="2" fill="#004565"/><rect x="7" y="25" width="2" height="2" fill="#004565"/><rect x="15" y="27" width="1" height="1" fill="#5c4f4b"/><rect x="7" y="9" width="4" height="2" fill="#004565"/><rect x="8" y="29" width="1" height="1" fill="#004565"/><rect x="31" y="10" width="4" height="1" fill="#004565"/><rect x="27" y="32" width="2" height="2" fill="#004565"/><rect x="22" y="20" width="1" height="2" fill="#004565"/><rect x="35" y="29" width="2" height="1" fill="#004565"/><rect x="33" y="39" width="2" height="3" fill="#5c4f4b"/><rect x="7" y="14" width="1" height="1" fill="#004565"/><rect x="2" y="11" width="2" height="1" fill="#5c4f4b"/><rect x="16" y="25" width="1" height="3" fill="#5c4f4b"/><rect x="36" y="31" width="4" height="2" fill="#004565"/><rect x="3" y="11" width="2" height="1" fill="#004565"/><rect x="1" y="5" width="2" height="1" fill="#004565"/><rect x="14" y="4" width="2" height="1" fill="#004565"/><rect x="21" y="35" width="2" height="2" fill="#004565"/><rect x="2" y="33" width="4" height="1" fill="#5c4f4b"/><rect x="10" y="16" width="1" height="1" fill="#004565"/><rect x="19" y="19" width="3" height="1" fill="#004565"/><rect x="32" y="11" width="2" height="2" fill="#5c4f4b"/><rect x="16" y="2" width="1" height="1" fill="#5c4f4b"/><rect x="35" y="12" width="3" height="2" fill="#004565"/><rect x="28" y="6" width="4" height="2" fill="#004565"/><rect x="34" y="25" width="3" height="2" fill="#5c4f4b"/><rect x="14" y="21" width="1" height="1" fill="#004565"/><rect x="22" y="3" width="1" height="1" fill="#004565"/><rect x="16" y="27" width="1" height="1" fill="#004565"/><rect x="24" y="32" width="4" height="2" fill="#004565"/><rect x="18" y="2" width="2" height="1" fill="#004565"/><rect x="28" y="0" width="2" height="2" fill="#5c4f4b"/><rect x="35" y="20" width="1" height="1" fill="#5c4f4b"/><rect x="19" y="13" width="2" height="1" fill="#004565"/><rect x="24" y="5" width="2" height="2" fill="#004565"/><rect x="12" y="15" width="3" height="1" fill="#004565"/><rect x="5" y="9" width="2" height="3" fill="#004565"/><rect x="1" y="19" width="2" height="1" fill="#004565"/><rect x="33" y="9" width="4" height="3" fill="#004565"/><rect x="20" y="31" width="1" height="2" fill="#5c4f4b"/><rect x="9" y="2" width="4" height="3" fill="#004565"/><rect x="32" y="8" width="3" height="3" fill="#004565"/><rect x="1" y="37" width="4" height="1" fill="#004565"/><rect x="2" y="8" width="4" height="2" fill="#5c4f4b"/><rect x="24" y="28" width="3" height="1" fill="#004565"/><rect x="34" y="15" width="2" height="2" fill="#004565"/><rect x="4" y="32" width="3" height="1" fill="#004565"/><rect x="4" y="30" width="2" height="1" fill="#5c4f4b"/><rect x="15" y="13" width="1" height="2" fill="#004565"/><rect x="24" y="4" width="2" height="2" fill="#5c4f4b"/><rect x="39" y="12" width="1" height="3" fill="#004565"/><rect x="16" y="19" width="3" height="3" fill="#004565"/><rect x="30" y="3" width="2" height="2" fill="#5c4f4b"/><rect x="6" y="13" width="4" height="2" fill="#004565"/><rect x="33" y="18" width="2" height="2" fill="#004565"/><rect x="7" y="35" width="1" height="2" fill="#5c4f4b"/><rect x="30" y="1" width="2" height="2" fill="#004565"/><rect x="32" y="28" width="2" height="2" fill="#004565"/><rect x="13" y="4" width="3" height="1" fill="#004565"/><rect x="33" y="16" width="2" height="1" fill="#004565"/><rect x="32" y="17" width="1" height="2" fill="#004565"/><rect x="31" y="25" width="1" height="1" fill="#004565"/><rect x="31" y="28" width="2" height="2" fill="#5c4f4b"/><rect x="26" y="22" width="2" height="2" fill="#004565"/><rect x="21" y="0" width="2" height="2" fill="#5c4f4b"/><rect x="7" y="12" width="4" height="1" fill="#5c4f4b"/><rect x="18" y="16" width="2" height="1" fill="#004565"/><rect x="37" y="4" width="2" height="2" fill="#5c4f4b"/><rect x="3" y="17" width="1" height="1" fill="#5c4f4b"/><rect x="18" y="9" width="1" height="2" fill="#004565"/><rect x="20" y="12" width="2" height="2" fill="#5c4f4b"/><rect x="25" y="35" width="3" height="1" fill="#5c4f4b"/><rect x="3" y="26" width="2" height="3" fill="#5c4f4b"/><rect x="18" y="31" width="1" height="3" fill="#004565"/><rect x="30" y="26" width="2" height="2" fill="#004565"/><rect x="16" y="25" width="4" height="1" fill="#004565"/><rect x="35" y="25" width="1" height="1" fill="#004565"/><rect x="4" y="13" width="3" height="2" fill="#004565"/><rect x="28" y="21" width="2" height="2" fill="#004565"/><rect x="12" y="15" width="1" height="1" fill="#004565"/><rect x="5" y="20" width="1" height="2" fill="#004565"/><rect x="36" y="12" width="1" height="2" fill="#004565"/><rect x="33" y="13" width="2" height="2" fill="#004565"/><rect x="3" y="31" width="2" height="3" fill="#5c4f4b"/><rect x="8" y="32" width="3" height="1" fill="#004565"/><rect x="15" y="24" width="2" height="2" fill="#004565"/><rect x="19" y="1" width="1" height="1" fill="#004565"/><rect x="30" y="37" width="2" height="1" fill="#004565"/><rect x="33" y="29" width="2" height="1" fill="#5c4f4b"/><rect x="14" y="9" width="1" height="3" fill="#5c4f4b"/><rect x="6" y="29" width="1" height="3" fill="#5c4f4b"/><rect x="0" y="8" width="1" height="3" fill="#5c4f4b"/><rect x="19" y="8" width="4" height="2" fill="#004565"/><rect x="27" y="7" width="1" height="1" fill="#004565"/><rect x="37" y="12" width="2" height="2" fill="#004565"/><rect x="38" y="0" width="1" height="3" fill="#004565"/><rect x="29" y="17" width="2" height="1" fill="#004565"/><rect x="15" y="35" width="1" height="1" fill="#5c4f4b"/><rect x="19" y="3" width="1" height="1" fill="#004565"/><rect x="26" y="5" width="2" height="1" fill="#5c4f4b"/><rect x="23" y="14" width="2" height="1" fill="#5c4f4b"/><rect x="26" y="23" width="4" height="2" fill="#004565"/><rect x="18" y="32" width="1" height="1" fill="#004565"/><rect x="12" y="19" width="1" height="1" fill="#004565"/><rect x="16" y="18" width="1" height="3" fill="#004565"/><rect x="11" y="14" width="2" height="2" fill="#5c4f4b"/><rect x="3" y="38" width="1" height="2" fill="#004565"/><rect x="1" y="38" width="1" height="2" fill="#004565"/><rect x="3" y="11" width="2" height="2" fill="#5c4f4b"/><rect x="20" y="7" width="1" height="1" fill="#004565"/><rect x="11" y="33" width="4" height="2" fill="#004565"/><rect x="24" y="23" width="2" height="2" fill="#004565"/><rect x="0" y="5" width="2" height="1" fill="#004565"/><rect x="7" y="35" width="1" height="2" fill="#004565"/><rect x="19" y="27" width="1" height="1" fill="#5c4f4b"/><rect x="12" y="23" width="3" height="2" fill="#004565"/><rect x="23" y="30" width="1" height="2" fill="#004565"/><rect x="25" y="2" width="2" height="1" fill="#004565"/><rect x="3" y="16" width="1" height="1" fill="#5c4f4b"/><rect x="21" y="23" width="2" height="2" fill="#5c4f4b"/><rect x="39" y="2" width="2" height="2" fill="#5c4f4b"/><rect x="19" y="0" width="4" height="3" fill="#5c4f4b"/><rect x="4" y="1" width="1" height="1" fill="#004565"/><rect x="29" y="24" width="2" height="2" fill="#5c4f4b"/><rect x="8" y="31" width="1" height="1" fill="#5c4f4b"/><rect x="19" y="9" width="3" height="1" fill="#004565"/><rect x="20" y="29" width="2" height="3" fill="#004565"/><rect x="12" y="25" width="1" height="1" fill="#004565"/><rect x="2" y="30" width="3" height="3" fill="#004565"/><rect x="27" y="6" width="1" height="2" fill="#004565"/><rect x="13" y="6" width="2" height="2" fill="#5c4f4b"/><rect x="28" y="11" width="1" height="1" fill="#004565"/><rect x="39" y="15" width="4" height="3" fill="#5c4f4b"/><rect x="7" y="18" width="2" height="2" fill="#004565"/><rect x="23" y="16" width="4" height="2" fill="#004565"/><rect x="15" y="11" width="1" height="1" fill="#004565"/><rect x="37" y="12" width="2" height="1" fill="#004565"/><rect x="15" y="32" width="3" height="1" fill="#004565"/><rect x="6" y="29" width="1" height="1" fill="#004565"/><rect x="14" y="28" width="2" height="1" fill="#5c4f4b"/><rect x="14" y="7" width="1" height="1" fill="#004565"/><rect x="37" y="12" width="1" height="2" fill="#004565"/><rect x="11" y="28" width="3" height="2" fill="#5c4f4b"/><rect x="0" y="6" width="4" height="3" fill="#5c4f4b"/><rect x="22" y="13" width="1" height="2" fill="#004565"/><rect x="2" y="13" width="2" height="1" fill="#004565"/><rect x="13" y="0" width="2" height="2" fill="#5c4f4b"/><rect x="11" y="39" width="2" height="1" fill="#004565"/><rect x="31" y="35" width="2" height="1" fill="#004565"/><rect x="25" y="35" width="1" height="3" fill="#004565"/><rect x="10" y="25" width="4" height="2" fill="#004565"/><rect x="18" y="19" width="2" height="1" fill="#004565"/><rect x="36" y="22" width="2" height="2" fill="#004565"/><rect x="23" y="12" width="2" height="2" fill="#004565"/><rect x="0" y="27" width="1" height="2" fill="#004565"/><rect x="5" y="25" width="3" height="2" fill="#004565"/><rect x="10" y="8" width="1" height="1" fill="#004565"/><rect x="25" y="5" width="3" height="3" fill="#5c4f4b"/><rect x="32" y="10" width="1" height="2" fill="#004565"/><rect x="33" y="10" width="1" height="1" fill="#004565"/><rect x="12" y="19" width="1" height="1" fill="#5c4f4b"/><rect x="30" y="20" width="1" height="3" fill="#5c4f4b"/><rect x="24" y="5" width="4" height="3" fill="#5c4f4b"/><rect x="10" y="14" width="3" height="2" fill="#004565"/><rect x="12" y="30" width="1" height="3" fill="#004565"/><rect x="25" y="33" width="1" height="2" fill="#004565"/><rect x="9" y="15" width="4" height="1" fill="#004565"/></pattern>
<path d="M0.5,705.5 3.5,705.5 6.5,705.5 9.5,703.5 15.5,704.5 18.5,700.5 24.5,698.5 30.5,700.5 29.5,704.5 26.5,706.5 29.5,708.5 36.5,706.5 44.5,706.5 46.5,704.5 48.5,706.5 46.5,712.5 47.5,715.5 51.5,718.5 50.5,725.5 54.5,724.5 60.5,725.5 65.5,728.5 70.5,726.5 72.5,729.5 73.5,733.5 76.5,734.5 77.5,739.5 80.5,742.5 83.5,747.5 86.5,750.5 91.5,751.5 96.5,757.5 101.5,757.5 105.5,753.5 112.5,751.5 114.5,748.5 121.5,744.5 126.5,740.5 133.5,741.5 140.5,744.5 146.5,749.5 147.5,753.5 154.5,755.5 159.5,757.5 161.5,757.5 164.5,751.5 169.5,747.5 175.5,745.5 180.5,743.5 184.5,741.5 189.5,743.5 193.5,747.5 199.5,753.5 205.5,757.5 220.5,759.5 235.5,757.5 233.5,753.5 230.5,749.5 227.5,745.5 224.5,743.5 221.5,741.5 218.5,739.5 214.5,741.5 209.5,738.5 205.5,737.5 202.5,736.5 200.5,732.5 201.5,727.5 202.5,721.5 200.5,717.5 203.5,715.5 207.5,713.5 212.5,706.5 216.5,704.5 220.5,705.5 219.5,700.5 223.5,696.5 224.5,692.5 222.5,690.5 223.5,686.5 226.5,679.5 227.5,672.5 223.5,670.5 219.5,673.5 212.5,675.5 207.5,673.5 205.5,675.5 203.5,677.5 203.5,680.5 201.5,684.5 196.5,687.5 197.5,691.5 195.5,694.5 189.5,695.5 186.5,692.5 185.5,688.5 181.5,688.5 177.5,687.5 176.5,682.5 179.5,680.5 184.5,680.5 188.5,675.5 191.5,670.5 196.5,667.5 198.5,666.5 205.5,666.5 209.5,661.5 212.5,658.5 214.5,654.5 212.5,651.5 216.5,651.5 219.5,650.5 221.5,652.5 219.5,656.5 223.5,655.5 230.5,652.5 235.5,650.5 240.5,648.5 240.5,645.5 251.5,645.5 253.5,648.5 258.5,651.5 263.5,652.5 269.5,651.5 274.5,652.5 279.5,653.5 280.5,652.5 285.5,648.5 290.5,647.5 295.5,649.5 299.5,652.5 303.5,653.5 306.5,649.5 307.5,642.5 306.5,637.5 308.5,632.5 304.5,630.5 306.5,627.5 309.5,626.5 312.5,621.5 317.5,624.5 320.5,628.5 320.5,633.5 319.5,639.5 321.5,644.5 324.5,648.5 327.5,647.5 326.5,650.5 329.5,655.5 334.5,656.5 334.5,660.5 331.5,661.5 338.5,660.5 350.5,657.5 359.5,655.5 368.5,652.5 378.5,650.5 389.5,648.5 399.5,647.5 410.5,646.5 420.5,647.5 429.5,648.5 438.5,650.5 447.5,653.5 456.5,656.5 464.5,661.5 473.5,665.5 480.5,668.5 482.5,672.5 489.5,677.5 495.5,680.5 500.5,686.5 505.5,687.5 510.5,692.5 507.5,694.5 506.5,699.5 507.5,706.5 510.5,710.5 511.5,712.5 518.5,711.5 526.5,709.5 537.5,708.5 542.5,702.5 548.5,701.5 549.5,703.5 555.5,701.5 562.5,697.5 569.5,693.5 575.5,690.5 580.5,689.5 583.5,692.5 586.5,691.5 585.5,686.5 581.5,685.5 583.5,680.5 586.5,677.5 592.5,675.5 597.5,672.5 600.5,676.5 606.5,674.5 612.5,674.5 614.5,677.5 618.5,680.5 623.5,683.5 629.5,685.5 634.5,688.5 639.5,692.5 641.5,697.5 644.5,702.5 646.5,706.5 650.5,709.5 655.5,712.5 658.5,715.5 657.5,714.5 656.5,723.5 660.5,728.5 666.5,733.5 671.5,739.5 675.5,745.5 680.5,750.5 682.5,755.5 689.5,756.5 698.5,757.5 701.5,760.5 702.5,767.5 706.5,771.5 707.5,776.5 712.5,781.5 713.5,787.5 714.5,792.5 715.5,806.5 716.5,812.5 0.5,812.5Z" fill="#004565" stroke="none"/>
<path d="M3.5,705.5 6.5,705.5 9.5,703.5 15.5,704.5 18.5,700.5 24.5,698.5 30.5,700.5 29.5,704.5 26.5,706.5 29.5,708.5 36.5,706.5 44.5,706.5 46.5,704.5 48.5,706.5 46.5,712.5 47.5,715.5 51.5,718.5 50.5,725.5 54.5,724.5 60.5,725.5 65.5,728.5 70.5,726.5 72.5,729.5 73.5,733.5 76.5,734.5 77.5,739.5 80.5,742.5 83.5,747.5 86.5,750.5 91.5,751.5 96.5,757.5 101.5,757.5 105.5,753.5 112.5,751.5 114.5,748.5 121.5,744.5 126.5,740.5 133.5,741.5 140.5,744.5 146.5,749.5 147.5,753.5 154.5,755.5 159.5,757.5 161.5,757.5 164.5,751.5 169.5,747.5 175.5,745.5 180.5,743.5 184.5,741.5 189.5,743.5 193.5,747.5 199.5,753.5 205.5,757.5 220.5,759.5 235.5,757.5 233.5,753.5 230.5,749.5 227.5,745.5 224.5,743.5 221.5,741.5 218.5,739.5 214.5,741.5 209.5,738.5 205.5,737.5 202.5,736.5 200.5,732.5 201.5,727.5 202.5,721.5 200.5,717.5 203.5,715.5 207.5,713.5 212.5,706.5 216.5,704.5 220.5,705.5 219.5,700.5 223.5,696.5 224.5,692.5 222.5,690.5 223.5,686.5 226.5,679.5 227.5,672.5 223.5,670.5 219.5,673.5 212.5,675.5 207.5,673.5 205.5,675.5 203.5,677.5 203.5,680.5 201.5,684.5 196.5,687.5 197.5,691.5 195.5,694.5 189.5,695.5 186.5,692.5 185.5,688.5 181.5,688.5 177.5,687.5 176.5,682.5 179.5,680.5 184.5,680.5 188.5,675.5 191.5,670.5 196.5,667.5 198.5,666.5 205.5,666.5 209.5,661.5 212.5,658.5 214.5,654.5 212.5,651.5 216.5,651.5 219.5,650.5 221.5,652.5 219.5,656.5 223.5,655.5 230.5,652.5 235.5,650.5 240.5,648.5 240.5,645.5 251.5,645.5 253.5,648.5 258.5,651.5 263.5,652.5 269.5,651.5 274.5,652.5 279.5,653.5 280.5,652.5 285.5,648.5 290.5,647.5 295.5,649.5 299.5,652.5 303.5,653.5 306.5,649.5 307.5,642.5 306.5,637.5 308.5,632.5 304.5,630.5 306.5,627.5 309.5,626.5 312.5,621.5 317.5,624.5 320.5,628.5 320.5,633.5 319.5,639.5 321.5,644.5 324.5,648.5 327.5,647.5 326.5,650.5 329.5,655.5 334.5,656.5 334.5,660.5 331.5,661.5 338.5,660.5 350.5,657.5 359.5,655.5 368.5,652.5 378.5,650.5 389.5,648.5 399.5,647.5 410.5,646.5 420.5,647.5 429.5,648.5 438.5,650.5 447.5,653.5 456.5,656.5 464.5,661.5 473.5,665.5 480.5,668.5 482.5,672.5 489.5,677.5 495.5,680.5 500.5,686.5 505.5,687.5 510.5,692.5 507.5,694.5 506.5,699.5 507.5,706.5 510.5,710.5 511.5,712.5 518.5,711.5 526.5,709.5 537.5,708.5 542.5,702.5 548.5,701.5 549.5,703.5 555.5,701.5 562.5,697.5 569.5,693.5 575.5,690.5 580.5,689.5 583.5,692.5 586.5,691.5 585.5,686.5 581.5,685.5 583.5,680.5 586.5,677.5 592.5,675.5 597.5,672.5 600.5,676.5 606.5,674.5 612.5,674.5 614.5,677.5 618.5,680.5 623.5,683.5 629.5,685.5 634.5,688.5 639.5,692.5 641.5,697.5 644.5,702.5 646.5,706.5 650.5,709.5 655.5,712.5 658.5,715.5 657.5,714.5 656.5,723.5 660.5,728.5 666.5,733.5 671.5,739.5 675.5,745.5 680.5,750.5 682.5,755.5 689.5,756.5 698.5,757.5 701.5,760.5 702.5,767.5 706.5,771.5 707.5,776.5 712.5,781.5 713.5,787.5 714.5,792.5 715.5,806.5" fill="none" stroke="#000" stroke-width="1" shape-rendering="crispEdges"/>
<path d="M343.5,658.5 344.5,656.5 343.5,652.5 346.5,651.5 347.5,654.5 352.5,651.5 355.5,649.5 357.5,646.5 362.5,644.5 361.5,641.5 357.5,641.5 355.5,637.5 357.5,633.5 359.5,637.5 362.5,641.5 364.5,645.5 361.5,648.5 357.5,651.5 352.5,654.5 348.5,656.5Z M364.5,651.5 371.5,648.5 376.5,644.5 377.5,639.5 375.5,632.5 378.5,631.5 381.5,635.5 384.5,637.5 386.5,632.5 390.5,631.5 389.5,637.5 392.5,640.5 398.5,642.5 398.5,644.5 392.5,645.5 385.5,648.5 378.5,650.5 371.5,651.5Z M419.5,644.5 417.5,641.5 420.5,641.5 426.5,637.5 431.5,638.5 433.5,641.5 438.5,641.5 443.5,640.5 449.5,639.5 453.5,642.5 456.5,646.5 454.5,648.5 449.5,647.5 442.5,647.5 434.5,648.5 429.5,648.5 422.5,647.5Z M473.5,656.5 477.5,658.5 481.5,656.5 484.5,659.5 488.5,658.5 493.5,654.5 496.5,652.5 495.5,656.5 491.5,659.5 486.5,663.5 484.5,666.5 488.5,670.5 491.5,672.5 498.5,675.5 502.5,679.5 507.5,679.5 505.5,680.5 500.5,681.5 495.5,677.5 489.5,673.5 484.5,670.5 481.5,665.5 477.5,661.5 473.5,659.5Z M507.5,694.5 510.5,693.5 513.5,697.5 515.5,702.5 515.5,708.5 512.5,711.5 510.5,710.5 507.5,706.5 506.5,700.5Z" fill="#004565" stroke="#000" stroke-width="1"/>
<path d="M15.5,720.5 22.5,717.5 28.5,720.5 33.5,720.5 38.5,721.5 37.5,725.5 33.5,727.5 30.5,729.5 26.5,728.5 21.5,725.5 16.5,722.5Z" fill="#5c4f4b" stroke="#000" stroke-width="1"/>
<path d="M810.5,570.5 805.5,572.5 803.5,578.5 804.5,585.5 802.5,592.5 803.5,600.5 801.5,608.5 803.5,616.5 802.5,624.5 803.5,632.5 801.5,640.5 803.5,648.5 806.5,652.5 810.5,655.5Z" fill="#004565" stroke="#000" stroke-width="1"/>
<path d="M791.5,575.5 796.5,577.5 795.5,582.5 800.5,580.5 803.5,586.5 799.5,590.5 804.5,594.5 800.5,597.5 M787.5,596.5 793.5,597.5 798.5,599.5 801.5,596.5 804.5,600.5 799.5,603.5 803.5,606.5 M792.5,607.5 797.5,609.5 795.5,614.5 800.5,612.5 803.5,618.5 798.5,620.5 M787.5,619.5 793.5,621.5 797.5,619.5 800.5,624.5 803.5,628.5 798.5,630.5 802.5,634.5 M792.5,633.5 796.5,636.5 793.5,640.5 799.5,639.5 803.5,645.5 798.5,647.5 M782.5,646.5 788.5,647.5 792.5,650.5 789.5,655.5 794.5,656.5 790.5,660.5 786.5,657.5 M797.5,583.5 799.5,588.5 796.5,593.5 800.5,600.5 797.5,606.5 801.5,611.5 797.5,617.5 801.5,623.5 797.5,629.5 801.5,636.5 797.5,642.5 800.5,648.5 796.5,653.5" fill="none" stroke="#000" stroke-width="2"/>
<path d="M800.5,586.5 802.5,596.5 800.5,606.5 802.5,616.5 800.5,626.5 802.5,636.5 800.5,646.5" fill="none" stroke="#004565" stroke-width="1"/>
<path d="M150.5,721.5 155.5,720.5 156.5,716.5 154.5,714.5 151.5,711.5 155.5,712.5 161.5,719.5 166.5,725.5 171.5,729.5 177.5,730.5 182.5,736.5 184.5,740.5 180.5,743.5 175.5,745.5 169.5,747.5 164.5,751.5 161.5,756.5 158.5,753.5 156.5,747.5 159.5,743.5 162.5,736.5 159.5,732.5 152.5,729.5 149.5,726.5Z M205.5,676.5 213.5,676.5 220.5,674.5 224.5,670.5 228.5,672.5 227.5,679.5 223.5,686.5 227.5,692.5 224.5,692.5 223.5,696.5 219.5,700.5 220.5,705.5 216.5,704.5 212.5,707.5 207.5,713.5 203.5,715.5 200.5,717.5 202.5,721.5 201.5,727.5 201.5,732.5 202.5,736.5 199.5,736.5 195.5,732.5 190.5,726.5 186.5,720.5 182.5,716.5 187.5,710.5 193.5,702.5 199.5,698.5 201.5,692.5 204.5,684.5Z M65.5,742.5 70.5,739.5 75.5,741.5 78.5,746.5 82.5,744.5 86.5,741.5 91.5,740.5 96.5,742.5 98.5,748.5 105.5,751.5 112.5,750.5 114.5,747.5 121.5,743.5 126.5,739.5 133.5,740.5 140.5,743.5 146.5,748.5 148.5,753.5 154.5,755.5 159.5,759.5 65.5,759.5Z M203.5,736.5 209.5,737.5 214.5,740.5 218.5,738.5 222.5,741.5 225.5,742.5 228.5,744.5 230.5,748.5 234.5,753.5 236.5,757.5 231.5,757.5 229.5,753.5 226.5,749.5 223.5,746.5 220.5,744.5 217.5,743.5 214.5,743.5 209.5,740.5 205.5,739.5Z" fill="url(#mp)" stroke="#000" stroke-width="1"/>
<path d="M518.5,711.5 525.5,713.5 530.5,716.5 533.5,720.5 539.5,717.5 546.5,715.5 553.5,711.5 558.5,708.5 565.5,702.5 569.5,699.5 M309.5,665.5 315.5,663.5 324.5,662.5 332.5,661.5 M280.5,663.5 285.5,664.5 M228.5,661.5 238.5,662.5 251.5,664.5 M258.5,661.5 270.5,663.5 284.5,665.5 M228.5,662.5 235.5,664.5 M242.5,664.5 249.5,661.5 M258.5,660.5 269.5,662.5 284.5,665.5" fill="none" stroke="#000" stroke-width="1.6"/>
<path d="M254.5,692.5 253.5,696.5 251.5,702.5 248.5,709.5 241.5,716.5 235.5,723.5 226.5,729.5 223.5,731.5" fill="none" stroke="#000" stroke-width="1.3" stroke-dasharray="5 3 2 4 7 3"/>
<path d="M241.5,701.5 243.5,698.5 245.5,695.5 249.5,693.5" fill="none" stroke="#000" stroke-width="1.2" stroke-dasharray="3 3"/>
<path d="M786.5,654.5 783.5,658.5 785.5,663.5 779.5,672.5 784.5,669.5 786.5,677.5 789.5,684.5 793.5,691.5 794.5,700.5 791.5,707.5 788.5,713.5 789.5,718.5 785.5,721.5 784.5,728.5 786.5,734.5" fill="none" stroke="#000" stroke-width="3.4"/>
<path d="M786.5,654.5 783.5,658.5 785.5,663.5 779.5,672.5 784.5,669.5 786.5,677.5 789.5,684.5 793.5,691.5 794.5,700.5 791.5,707.5 788.5,713.5 789.5,718.5 785.5,721.5 784.5,728.5 786.5,734.5" fill="none" stroke="#004565" stroke-width="1.6"/>
<path d="M299.5,59.5 303.5,57.5 307.5,54.5 312.5,57.5 315.5,61.5 316.5,67.5 321.5,70.5 324.5,72.5 321.5,74.5 318.5,77.5 319.5,82.5 322.5,88.5 324.5,93.5 322.5,96.5 319.5,91.5 316.5,86.5 314.5,81.5 314.5,75.5 311.5,70.5 310.5,65.5 308.5,60.5 305.5,59.5 303.5,62.5 300.5,62.5Z M368.5,261.5 371.5,259.5 375.5,258.5 378.5,261.5 383.5,264.5 388.5,265.5 391.5,268.5 393.5,271.5 396.5,275.5 395.5,276.5 391.5,274.5 386.5,270.5 381.5,267.5 377.5,264.5 374.5,261.5 369.5,262.5Z M437.5,377.5 442.5,370.5 446.5,363.5 451.5,365.5 449.5,368.5 445.5,373.5 444.5,377.5 439.5,377.5Z M423.5,412.5 426.5,417.5 427.5,422.5 430.5,426.5 432.5,432.5 429.5,435.5 428.5,430.5 426.5,426.5 424.5,421.5 423.5,416.5Z M613.5,290.5 613.5,285.5 617.5,284.5 621.5,284.5 622.5,290.5 621.5,292.5 623.5,294.5 625.5,292.5 627.5,294.5 624.5,296.5 623.5,299.5 620.5,302.5 619.5,304.5 617.5,307.5 616.5,309.5 613.5,310.5 611.5,311.5 607.5,313.5 606.5,311.5 604.5,309.5 604.5,306.5 606.5,306.5 610.5,304.5 614.5,303.5 615.5,300.5 613.5,297.5 612.5,294.5Z M525.5,502.5 527.5,504.5 530.5,505.5 532.5,501.5 534.5,504.5 532.5,509.5 531.5,515.5 530.5,520.5 532.5,525.5 536.5,525.5 533.5,528.5 534.5,532.5 533.5,537.5 531.5,539.5 529.5,534.5 525.5,531.5 527.5,527.5 525.5,522.5 525.5,517.5 527.5,511.5 527.5,507.5Z M540.5,601.5 543.5,604.5 544.5,610.5 548.5,613.5 553.5,610.5 554.5,603.5 557.5,603.5 556.5,609.5 560.5,611.5 563.5,610.5 563.5,613.5 558.5,614.5 553.5,616.5 548.5,620.5 545.5,619.5 541.5,616.5 540.5,612.5Z M136.5,660.5 136.5,663.5 134.5,666.5 132.5,667.5 129.5,668.5 126.5,667.5 123.5,666.5 122.5,663.5 121.5,660.5 122.5,657.5 123.5,654.5 126.5,652.5 129.5,651.5 132.5,652.5 134.5,654.5 136.5,657.5Z M42.5,680.5 46.5,679.5 50.5,684.5 51.5,688.5 48.5,689.5 44.5,686.5 42.5,683.5Z M57.5,691.5 59.5,685.5 61.5,689.5 64.5,693.5 66.5,698.5 68.5,702.5 73.5,703.5 78.5,705.5 83.5,706.5 84.5,710.5 80.5,710.5 75.5,708.5 70.5,706.5 65.5,705.5 61.5,700.5 59.5,695.5Z M144.5,696.5 149.5,695.5 153.5,698.5 154.5,702.5 153.5,706.5 149.5,708.5 146.5,713.5 141.5,712.5 140.5,708.5 143.5,705.5 145.5,700.5Z M784.5,734.5 787.5,732.5 789.5,737.5 793.5,741.5 796.5,744.5 795.5,750.5 793.5,753.5 790.5,755.5 786.5,751.5 785.5,746.5 784.5,741.5Z M769.5,790.5 773.5,788.5 779.5,790.5 779.5,795.5 768.5,795.5Z" fill="#264263" stroke="none"/>
<path d="M181.5,6.5 191.5,16.5 194.5,26.5 198.5,37.5 200.5,41.5 M200.5,91.5 196.5,102.5 188.5,111.5 187.5,123.5 184.5,135.5 183.5,143.5 M240.5,6.5 234.5,12.5 229.5,19.5 228.5,29.5 227.5,45.5 224.5,56.5 219.5,63.5 210.5,67.5 200.5,71.5 M240.5,6.5 245.5,13.5 248.5,21.5 256.5,29.5 261.5,37.5 263.5,45.5 264.5,52.5 270.5,59.5 279.5,60.5 288.5,61.5 296.5,55.5 305.5,53.5 312.5,55.5 323.5,61.5 331.5,66.5 339.5,75.5 349.5,81.5 358.5,88.5 367.5,96.5 376.5,103.5 384.5,110.5 393.5,117.5 400.5,120.5 M400.5,99.5 393.5,100.5 384.5,105.5 376.5,114.5 369.5,125.5 365.5,133.5 366.5,143.5 M200.5,42.5 200.5,91.5 M473.5,6.5 472.5,17.5 470.5,31.5 467.5,42.5 463.5,47.5 454.5,54.5 444.5,57.5 434.5,59.5 430.5,68.5 428.5,77.5 422.5,90.5 416.5,101.5 410.5,110.5 408.5,119.5 405.5,130.5 406.5,143.5 M400.5,99.5 416.5,102.5 426.5,106.5 434.5,110.5 436.5,119.5 437.5,130.5 436.5,137.5 435.5,143.5 M400.5,123.5 405.5,130.5 417.5,133.5 437.5,132.5 452.5,133.5 458.5,134.5 M481.5,139.5 491.5,136.5 514.5,136.5 521.5,140.5 523.5,143.5 M588.5,6.5 588.5,13.5 586.5,21.5 589.5,30.5 593.5,37.5 598.5,41.5 602.5,44.5 604.5,47.5 604.5,58.5 602.5,65.5 601.5,68.5 599.5,76.5 599.5,83.5 601.5,87.5 604.5,93.5 603.5,98.5 599.5,102.5 593.5,107.5 590.5,111.5 593.5,115.5 595.5,118.5 595.5,122.5 599.5,127.5 603.5,132.5 606.5,140.5 604.5,150.5 600.5,158.5 610.5,155.5 M600.5,639.5 610.5,639.5 M806.5,71.5 794.5,75.5 784.5,79.5 773.5,81.5 764.5,85.5 756.5,91.5 743.5,96.5 733.5,102.5 722.5,109.5 712.5,114.5 701.5,119.5 689.5,126.5 676.5,131.5 666.5,135.5 659.5,140.5 657.5,143.5 M6.5,257.5 17.5,255.5 35.5,256.5 52.5,253.5 65.5,251.5 75.5,246.5 88.5,243.5 100.5,239.5 110.5,234.5 123.5,229.5 135.5,225.5 151.5,223.5 160.5,225.5 M179.5,143.5 176.5,148.5 175.5,155.5 170.5,162.5 165.5,171.5 160.5,181.5 154.5,190.5 149.5,197.5 145.5,204.5 147.5,211.5 150.5,218.5 152.5,224.5 M160.5,224.5 164.5,221.5 170.5,221.5 175.5,225.5 175.5,230.5 164.5,231.5 160.5,231.5 160.5,224.5 M175.5,224.5 183.5,220.5 191.5,215.5 200.5,208.5 M163.5,231.5 166.5,241.5 168.5,253.5 169.5,266.5 169.5,276.5 171.5,286.5 M200.5,207.5 210.5,202.5 219.5,195.5 221.5,191.5 228.5,187.5 237.5,184.5 245.5,180.5 258.5,177.5 270.5,172.5 282.5,169.5 293.5,165.5 303.5,165.5 312.5,160.5 323.5,160.5 332.5,159.5 340.5,158.5 349.5,151.5 358.5,148.5 367.5,147.5 376.5,145.5 379.5,143.5 M367.5,143.5 369.5,148.5 373.5,153.5 377.5,158.5 384.5,164.5 390.5,165.5 400.5,165.5 M398.5,167.5 397.5,178.5 398.5,192.5 398.5,204.5 398.5,218.5 398.5,238.5 395.5,248.5 393.5,259.5 394.5,269.5 396.5,276.5 397.5,286.5 M400.5,165.5 407.5,165.5 416.5,163.5 428.5,158.5 430.5,151.5 431.5,143.5 M401.5,158.5 403.5,150.5 406.5,143.5 M411.5,143.5 419.5,150.5 428.5,158.5 435.5,167.5 442.5,176.5 445.5,186.5 454.5,191.5 459.5,197.5 466.5,205.5 472.5,215.5 477.5,222.5 482.5,229.5 484.5,233.5 491.5,233.5 498.5,237.5 505.5,239.5 M523.5,143.5 533.5,148.5 542.5,155.5 551.5,159.5 560.5,158.5 569.5,158.5 577.5,160.5 586.5,159.5 593.5,159.5 600.5,158.5 M593.5,159.5 586.5,169.5 577.5,180.5 569.5,190.5 562.5,201.5 554.5,209.5 549.5,216.5 542.5,224.5 533.5,229.5 526.5,234.5 522.5,238.5 M505.5,239.5 509.5,236.5 514.5,234.5 519.5,237.5 522.5,239.5 523.5,241.5 528.5,246.5 535.5,250.5 537.5,259.5 539.5,268.5 542.5,276.5 544.5,286.5 M505.5,239.5 501.5,245.5 497.5,253.5 496.5,262.5 491.5,271.5 487.5,279.5 483.5,286.5 M610.5,155.5 615.5,148.5 622.5,147.5 629.5,149.5 639.5,150.5 650.5,147.5 659.5,143.5 M659.5,143.5 664.5,148.5 671.5,153.5 673.5,162.5 678.5,168.5 683.5,173.5 686.5,181.5 687.5,186.5 694.5,189.5 705.5,190.5 715.5,189.5 726.5,187.5 736.5,184.5 747.5,181.5 759.5,180.5 768.5,176.5 779.5,174.5 787.5,173.5 796.5,172.5 806.5,175.5 M715.5,189.5 720.5,195.5 722.5,202.5 729.5,209.5 735.5,215.5 743.5,216.5 749.5,220.5 754.5,227.5 757.5,234.5 760.5,241.5 764.5,252.5 764.5,262.5 767.5,273.5 770.5,282.5 771.5,286.5 M806.5,223.5 796.5,226.5 784.5,230.5 772.5,234.5 761.5,239.5 752.5,246.5 740.5,252.5 728.5,257.5 722.5,266.5 715.5,272.5 705.5,277.5 692.5,282.5 680.5,286.5 M739.5,253.5 740.5,261.5 747.5,268.5 756.5,273.5 764.5,278.5 775.5,286.5 M173.5,286.5 171.5,296.5 171.5,307.5 173.5,317.5 176.5,328.5 176.5,338.5 177.5,347.5 180.5,356.5 183.5,365.5 184.5,374.5 183.5,384.5 181.5,391.5 177.5,400.5 174.5,407.5 169.5,414.5 166.5,421.5 163.5,429.5 M319.5,429.5 330.5,416.5 340.5,405.5 346.5,401.5 354.5,401.5 367.5,399.5 376.5,396.5 383.5,389.5 388.5,382.5 391.5,375.5 395.5,372.5 400.5,369.5 M386.5,386.5 393.5,386.5 400.5,384.5 M397.5,286.5 396.5,293.5 395.5,300.5 398.5,307.5 398.5,314.5 400.5,321.5 400.5,337.5 M415.5,366.5 422.5,364.5 435.5,362.5 447.5,362.5 456.5,363.5 466.5,364.5 477.5,362.5 488.5,361.5 498.5,359.5 509.5,356.5 519.5,355.5 M543.5,285.5 543.5,290.5 544.5,294.5 548.5,298.5 551.5,302.5 556.5,306.5 556.5,311.5 557.5,316.5 560.5,319.5 566.5,320.5 569.5,325.5 570.5,327.5 573.5,331.5 576.5,335.5 579.5,339.5 580.5,344.5 583.5,346.5 M584.5,294.5 583.5,297.5 581.5,300.5 577.5,303.5 577.5,306.5 574.5,310.5 572.5,315.5 571.5,320.5 569.5,325.5 M576.5,338.5 579.5,336.5 583.5,335.5 588.5,334.5 593.5,335.5 593.5,340.5 594.5,347.5 595.5,351.5 593.5,354.5 588.5,355.5 585.5,357.5 581.5,359.5 577.5,361.5 575.5,357.5 575.5,352.5 575.5,347.5 575.5,341.5 576.5,338.5 M583.5,346.5 586.5,343.5 589.5,339.5 593.5,335.5 598.5,333.5 603.5,330.5 606.5,327.5 610.5,322.5 615.5,321.5 621.5,319.5 627.5,318.5 632.5,316.5 637.5,314.5 640.5,312.5 M520.5,355.5 525.5,354.5 532.5,354.5 534.5,352.5 544.5,352.5 555.5,352.5 558.5,349.5 564.5,347.5 573.5,347.5 575.5,348.5 581.5,350.5 587.5,350.5 589.5,352.5 594.5,353.5 604.5,353.5 607.5,356.5 613.5,358.5 617.5,361.5 621.5,362.5 627.5,362.5 632.5,361.5 640.5,363.5 M583.5,346.5 583.5,351.5 582.5,355.5 582.5,359.5 579.5,362.5 575.5,364.5 569.5,367.5 565.5,370.5 563.5,376.5 M582.5,359.5 585.5,364.5 592.5,367.5 594.5,370.5 596.5,376.5 M586.5,356.5 589.5,362.5 591.5,366.5 593.5,368.5 M415.5,366.5 415.5,359.5 422.5,353.5 431.5,347.5 442.5,338.5 451.5,331.5 458.5,324.5 463.5,315.5 466.5,308.5 472.5,301.5 477.5,294.5 483.5,286.5 M400.5,337.5 401.5,342.5 401.5,352.5 403.5,363.5 405.5,370.5 405.5,381.5 M400.5,382.5 405.5,381.5 408.5,375.5 415.5,366.5 M405.5,381.5 403.5,391.5 405.5,400.5 408.5,409.5 414.5,419.5 418.5,429.5 M562.5,375.5 556.5,382.5 553.5,391.5 547.5,400.5 544.5,409.5 535.5,416.5 528.5,423.5 525.5,429.5 M639.5,312.5 645.5,308.5 655.5,301.5 666.5,294.5 675.5,290.5 680.5,286.5 M639.5,363.5 648.5,366.5 662.5,367.5 675.5,367.5 685.5,367.5 698.5,371.5 710.5,372.5 722.5,371.5 736.5,372.5 749.5,373.5 756.5,372.5 763.5,367.5 772.5,361.5 779.5,358.5 786.5,355.5 793.5,350.5 799.5,345.5 806.5,339.5 M777.5,286.5 783.5,291.5 787.5,296.5 794.5,300.5 801.5,305.5 806.5,307.5 M599.5,377.5 606.5,395.5 610.5,403.5 613.5,409.5 620.5,416.5 627.5,421.5 634.5,426.5 638.5,429.5 M6.5,461.5 17.5,462.5 31.5,464.5 45.5,465.5 59.5,466.5 73.5,469.5 82.5,473.5 91.5,476.5 100.5,475.5 110.5,473.5 123.5,474.5 135.5,473.5 142.5,476.5 147.5,479.5 153.5,480.5 165.5,480.5 176.5,480.5 188.5,478.5 200.5,476.5 M162.5,429.5 162.5,439.5 161.5,448.5 158.5,457.5 155.5,466.5 154.5,474.5 152.5,480.5 147.5,487.5 143.5,495.5 139.5,502.5 135.5,511.5 133.5,522.5 131.5,534.5 130.5,548.5 130.5,562.5 130.5,572.5 M147.5,479.5 147.5,473.5 152.5,469.5 154.5,468.5 M318.5,429.5 309.5,439.5 300.5,448.5 295.5,455.5 288.5,462.5 281.5,466.5 273.5,469.5 265.5,471.5 259.5,474.5 252.5,473.5 242.5,474.5 229.5,475.5 217.5,476.5 207.5,476.5 200.5,475.5 M258.5,474.5 253.5,481.5 251.5,490.5 247.5,501.5 243.5,508.5 237.5,516.5 236.5,525.5 229.5,533.5 222.5,541.5 216.5,550.5 215.5,561.5 214.5,568.5 214.5,572.5 M400.5,543.5 391.5,554.5 384.5,561.5 376.5,568.5 370.5,572.5 M525.5,429.5 521.5,434.5 516.5,441.5 510.5,448.5 502.5,453.5 491.5,460.5 481.5,465.5 470.5,467.5 461.5,471.5 451.5,473.5 439.5,472.5 M419.5,429.5 421.5,436.5 424.5,444.5 428.5,453.5 432.5,462.5 437.5,468.5 439.5,472.5 438.5,478.5 434.5,485.5 429.5,494.5 426.5,502.5 422.5,509.5 417.5,517.5 412.5,525.5 407.5,532.5 401.5,540.5 400.5,543.5 M631.5,429.5 632.5,436.5 631.5,443.5 631.5,455.5 629.5,467.5 630.5,481.5 629.5,495.5 630.5,506.5 632.5,517.5 636.5,525.5 641.5,534.5 646.5,543.5 648.5,554.5 650.5,564.5 651.5,572.5 M639.5,429.5 645.5,436.5 647.5,441.5 652.5,446.5 662.5,451.5 671.5,455.5 682.5,459.5 694.5,462.5 706.5,466.5 719.5,466.5 733.5,468.5 745.5,471.5 759.5,472.5 768.5,476.5 777.5,480.5 786.5,484.5 796.5,486.5 806.5,493.5 M631.5,429.5 634.5,436.5 639.5,429.5 M806.5,534.5 802.5,543.5 801.5,555.5 799.5,572.5 M131.5,540.5 130.5,557.5 130.5,575.5 128.5,591.5 126.5,601.5 126.5,619.5 127.5,631.5 129.5,640.5 132.5,647.5 135.5,654.5 134.5,663.5 132.5,670.5 132.5,677.5 M6.5,661.5 15.5,660.5 26.5,656.5 38.5,651.5 52.5,647.5 66.5,643.5 77.5,644.5 86.5,645.5 95.5,642.5 109.5,641.5 123.5,640.5 137.5,640.5 149.5,641.5 158.5,644.5 167.5,649.5 176.5,654.5 184.5,656.5 193.5,656.5 200.5,654.5 M86.5,645.5 91.5,654.5 93.5,661.5 100.5,666.5 109.5,671.5 119.5,672.5 132.5,674.5 139.5,679.5 146.5,683.5 M200.5,626.5 193.5,631.5 190.5,638.5 186.5,647.5 184.5,656.5 183.5,663.5 177.5,670.5 172.5,675.5 167.5,680.5 M6.5,616.5 10.5,621.5 13.5,628.5 12.5,638.5 12.5,649.5 15.5,660.5 M126.5,600.5 126.5,617.5 127.5,629.5 129.5,640.5 134.5,651.5 136.5,658.5 133.5,666.5 132.5,673.5 M100.5,641.5 122.5,640.5 147.5,640.5 159.5,644.5 170.5,651.5 177.5,654.5 186.5,656.5 193.5,656.5 202.5,653.5 212.5,650.5 223.5,646.5 233.5,644.5 244.5,642.5 254.5,643.5 265.5,644.5 276.5,643.5 284.5,641.5 293.5,637.5 300.5,633.5 M205.5,600.5 202.5,610.5 197.5,621.5 193.5,629.5 189.5,640.5 186.5,649.5 185.5,656.5 181.5,665.5 173.5,673.5 166.5,681.5 159.5,686.5 M100.5,666.5 108.5,671.5 119.5,672.5 131.5,673.5 138.5,679.5 147.5,682.5 159.5,685.5 161.5,687.5 M224.5,540.5 217.5,548.5 215.5,561.5 215.5,573.5 212.5,584.5 208.5,596.5 205.5,606.5 200.5,617.5 M284.5,640.5 295.5,636.5 303.5,629.5 305.5,622.5 307.5,610.5 310.5,605.5 319.5,599.5 330.5,597.5 340.5,591.5 351.5,584.5 362.5,577.5 372.5,569.5 381.5,562.5 390.5,554.5 395.5,547.5 400.5,543.5 M312.5,621.5 323.5,624.5 333.5,625.5 344.5,627.5 351.5,631.5 362.5,633.5 369.5,637.5 377.5,637.5 384.5,635.5 391.5,629.5 400.5,623.5 M400.5,622.5 410.5,620.5 422.5,618.5 435.5,618.5 444.5,616.5 452.5,621.5 463.5,621.5 470.5,618.5 477.5,615.5 488.5,615.5 498.5,616.5 509.5,616.5 516.5,615.5 523.5,618.5 532.5,622.5 539.5,626.5 546.5,627.5 554.5,628.5 562.5,632.5 569.5,636.5 576.5,636.5 583.5,640.5 591.5,640.5 600.5,638.5 M644.5,540.5 647.5,550.5 650.5,562.5 654.5,578.5 657.5,592.5 661.5,605.5 668.5,617.5 675.5,628.5 682.5,636.5 691.5,643.5 698.5,652.5 705.5,659.5 710.5,666.5 713.5,675.5 715.5,683.5 M610.5,639.5 624.5,641.5 636.5,644.5 650.5,644.5 662.5,648.5 673.5,651.5 685.5,652.5 698.5,657.5 708.5,661.5 722.5,660.5 733.5,659.5 740.5,662.5 750.5,660.5 759.5,658.5 768.5,656.5 779.5,655.5 786.5,654.5 M803.5,540.5 801.5,557.5 800.5,569.5 793.5,582.5 786.5,592.5 784.5,603.5 786.5,617.5 787.5,631.5 786.5,643.5 786.5,654.5 789.5,663.5 794.5,672.5 798.5,683.5 M786.5,643.5 779.5,645.5 778.5,654.5 779.5,663.5 786.5,666.5 793.5,668.5 M710.5,669.5 715.5,679.5 720.5,691.5 724.5,704.5 733.5,718.5 740.5,728.5 744.5,739.5 747.5,753.5 749.5,767.5 753.5,778.5 755.5,790.5 M793.5,669.5 799.5,679.5 803.5,688.5 805.5,697.5" stroke="#82690c" stroke-width="1" shape-rendering="crispEdges"/>
<path d="M6.5,105.5 154.5,105.5 155.5,110.5 159.5,112.5 161.5,116.5 160.5,123.5 156.5,126.5 153.5,130.5 149.5,132.5 146.5,137.5 142.5,140.5 141.5,143.5 M207.5,104.5 310.5,105.5 312.5,102.5 310.5,95.5 309.5,88.5 323.5,90.5 325.5,91.5 354.5,91.5 363.5,91.5 400.5,91.5 M202.5,6.5 201.5,9.5 205.5,15.5 207.5,22.5 207.5,29.5 202.5,31.5 201.5,36.5 206.5,38.5 208.5,45.5 212.5,52.5 216.5,56.5 219.5,60.5 222.5,58.5 221.5,54.5 226.5,51.5 231.5,45.5 237.5,40.5 243.5,39.5 248.5,41.5 254.5,44.5 261.5,46.5 266.5,50.5 272.5,53.5 277.5,54.5 281.5,51.5 283.5,45.5 280.5,40.5 276.5,35.5 277.5,29.5 280.5,24.5 284.5,22.5 291.5,20.5 298.5,18.5 305.5,17.5 309.5,14.5 308.5,9.5 304.5,6.5 M222.5,58.5 226.5,59.5 231.5,63.5 232.5,66.5 229.5,72.5 226.5,75.5 229.5,79.5 231.5,81.5 229.5,84.5 225.5,83.5 226.5,88.5 229.5,90.5 226.5,95.5 222.5,99.5 219.5,98.5 215.5,94.5 212.5,92.5 210.5,98.5 208.5,104.5 205.5,107.5 203.5,103.5 204.5,99.5 200.5,97.5 M200.5,97.5 198.5,100.5 198.5,103.5 200.5,105.5 201.5,112.5 200.5,118.5 195.5,119.5 194.5,122.5 200.5,124.5 200.5,125.5 189.5,126.5 188.5,130.5 192.5,131.5 196.5,135.5 192.5,139.5 190.5,143.5 M400.5,91.5 419.5,90.5 444.5,91.5 470.5,93.5 505.5,94.5 540.5,94.5 576.5,96.5 600.5,96.5 M599.5,96.5 611.5,96.5 M599.5,239.5 611.5,239.5 M610.5,96.5 634.5,96.5 662.5,96.5 715.5,96.5 764.5,96.5 768.5,94.5 786.5,94.5 794.5,96.5 806.5,97.5 M635.5,96.5 641.5,92.5 650.5,88.5 661.5,85.5 669.5,84.5 676.5,82.5 676.5,79.5 679.5,74.5 683.5,73.5 692.5,71.5 696.5,69.5 696.5,63.5 699.5,59.5 706.5,56.5 707.5,49.5 715.5,44.5 724.5,40.5 733.5,37.5 740.5,33.5 747.5,26.5 754.5,20.5 759.5,15.5 764.5,13.5 M749.5,6.5 752.5,10.5 759.5,12.5 765.5,13.5 763.5,16.5 764.5,21.5 765.5,26.5 770.5,31.5 775.5,35.5 779.5,37.5 783.5,41.5 787.5,42.5 794.5,41.5 801.5,37.5 805.5,35.5 806.5,32.5 M786.5,94.5 784.5,98.5 783.5,103.5 781.5,109.5 781.5,114.5 782.5,118.5 777.5,117.5 772.5,119.5 767.5,123.5 764.5,128.5 762.5,133.5 759.5,138.5 754.5,139.5 747.5,136.5 742.5,135.5 736.5,138.5 731.5,140.5 729.5,143.5 M141.5,143.5 139.5,146.5 137.5,149.5 187.5,149.5 M190.5,138.5 189.5,143.5 187.5,149.5 190.5,153.5 191.5,158.5 188.5,159.5 184.5,158.5 184.5,163.5 188.5,165.5 183.5,168.5 177.5,171.5 171.5,170.5 169.5,174.5 171.5,178.5 176.5,179.5 174.5,182.5 169.5,184.5 171.5,189.5 169.5,192.5 165.5,189.5 161.5,190.5 159.5,195.5 154.5,199.5 153.5,203.5 157.5,202.5 161.5,203.5 158.5,207.5 154.5,210.5 154.5,215.5 158.5,216.5 159.5,222.5 156.5,224.5 153.5,226.5 151.5,231.5 149.5,234.5 143.5,234.5 142.5,239.5 146.5,241.5 147.5,246.5 142.5,250.5 137.5,252.5 133.5,248.5 130.5,248.5 131.5,253.5 130.5,257.5 126.5,255.5 125.5,260.5 129.5,261.5 131.5,266.5 126.5,268.5 123.5,266.5 122.5,271.5 123.5,276.5 124.5,282.5 122.5,286.5 M143.5,238.5 200.5,238.5 M200.5,238.5 299.5,238.5 335.5,237.5 358.5,238.5 400.5,238.5 M299.5,238.5 302.5,243.5 307.5,246.5 306.5,257.5 305.5,266.5 304.5,275.5 303.5,286.5 M400.5,238.5 470.5,239.5 600.5,239.5 M492.5,239.5 494.5,248.5 496.5,259.5 497.5,269.5 499.5,280.5 500.5,286.5 M588.5,239.5 589.5,227.5 590.5,218.5 595.5,214.5 598.5,216.5 600.5,216.5 610.5,210.5 610.5,203.5 612.5,199.5 M729.5,143.5 726.5,149.5 720.5,151.5 715.5,150.5 715.5,146.5 710.5,143.5 706.5,147.5 701.5,152.5 698.5,154.5 694.5,155.5 692.5,160.5 690.5,167.5 685.5,169.5 680.5,167.5 675.5,170.5 669.5,173.5 662.5,179.5 654.5,184.5 648.5,187.5 641.5,187.5 632.5,187.5 624.5,191.5 617.5,195.5 612.5,199.5 M610.5,239.5 678.5,238.5 685.5,235.5 694.5,232.5 703.5,231.5 708.5,229.5 711.5,226.5 715.5,225.5 722.5,223.5 729.5,221.5 731.5,219.5 733.5,221.5 740.5,220.5 747.5,220.5 759.5,221.5 777.5,222.5 794.5,223.5 806.5,223.5 M678.5,238.5 677.5,243.5 671.5,247.5 666.5,252.5 662.5,255.5 661.5,261.5 660.5,264.5 662.5,268.5 668.5,271.5 673.5,274.5 678.5,278.5 683.5,282.5 691.5,283.5 696.5,286.5 M122.5,285.5 123.5,286.5 123.5,290.5 118.5,293.5 114.5,294.5 116.5,298.5 112.5,299.5 109.5,296.5 110.5,301.5 104.5,302.5 102.5,306.5 96.5,305.5 97.5,309.5 103.5,308.5 105.5,312.5 102.5,314.5 96.5,312.5 95.5,315.5 98.5,318.5 101.5,321.5 98.5,324.5 95.5,325.5 89.5,328.5 85.5,330.5 88.5,332.5 93.5,330.5 91.5,333.5 88.5,337.5 87.5,341.5 89.5,345.5 92.5,346.5 89.5,348.5 85.5,347.5 81.5,347.5 81.5,352.5 84.5,352.5 88.5,354.5 86.5,357.5 81.5,356.5 77.5,353.5 74.5,356.5 77.5,359.5 81.5,360.5 80.5,364.5 75.5,366.5 74.5,368.5 79.5,371.5 81.5,374.5 77.5,374.5 74.5,376.5 77.5,379.5 81.5,378.5 86.5,375.5 87.5,378.5 84.5,382.5 81.5,382.5 82.5,388.5 87.5,391.5 88.5,393.5 84.5,395.5 86.5,400.5 82.5,404.5 78.5,404.5 76.5,407.5 80.5,409.5 82.5,411.5 80.5,415.5 76.5,419.5 75.5,423.5 79.5,425.5 81.5,421.5 81.5,417.5 84.5,418.5 86.5,422.5 85.5,426.5 82.5,429.5 M6.5,415.5 79.5,415.5 M303.5,286.5 300.5,312.5 297.5,338.5 295.5,361.5 292.5,388.5 289.5,412.5 288.5,429.5 M500.5,286.5 505.5,312.5 510.5,338.5 514.5,363.5 518.5,384.5 521.5,409.5 524.5,429.5 M696.5,286.5 698.5,293.5 703.5,300.5 706.5,308.5 710.5,315.5 715.5,323.5 718.5,330.5 724.5,335.5 729.5,338.5 736.5,342.5 742.5,347.5 744.5,354.5 749.5,361.5 756.5,364.5 760.5,368.5 764.5,373.5 767.5,377.5 765.5,382.5 767.5,386.5 772.5,389.5 773.5,395.5 779.5,397.5 779.5,403.5 786.5,407.5 793.5,411.5 797.5,414.5 799.5,419.5 801.5,426.5 801.5,429.5 803.5,432.5 805.5,437.5 M82.5,429.5 79.5,432.5 80.5,437.5 84.5,440.5 88.5,442.5 84.5,444.5 81.5,447.5 81.5,451.5 84.5,452.5 88.5,451.5 91.5,449.5 88.5,448.5 87.5,451.5 86.5,455.5 82.5,458.5 83.5,463.5 88.5,466.5 93.5,466.5 96.5,471.5 100.5,471.5 99.5,475.5 96.5,478.5 91.5,481.5 92.5,486.5 88.5,485.5 82.5,485.5 79.5,488.5 78.5,492.5 81.5,495.5 86.5,495.5 90.5,492.5 89.5,489.5 87.5,492.5 88.5,496.5 84.5,499.5 80.5,498.5 82.5,501.5 85.5,503.5 83.5,506.5 79.5,507.5 77.5,510.5 73.5,514.5 70.5,517.5 66.5,518.5 66.5,522.5 69.5,521.5 72.5,519.5 71.5,523.5 67.5,525.5 64.5,527.5 62.5,532.5 61.5,538.5 58.5,540.5 54.5,537.5 53.5,539.5 56.5,542.5 60.5,541.5 61.5,544.5 58.5,547.5 53.5,548.5 52.5,554.5 51.5,556.5 48.5,558.5 49.5,561.5 52.5,561.5 56.5,559.5 54.5,556.5 51.5,558.5 51.5,563.5 53.5,566.5 52.5,569.5 44.5,570.5 M288.5,429.5 285.5,455.5 282.5,478.5 280.5,499.5 279.5,513.5 280.5,527.5 281.5,548.5 281.5,572.5 M524.5,429.5 526.5,434.5 529.5,439.5 530.5,446.5 533.5,453.5 537.5,459.5 540.5,466.5 538.5,472.5 537.5,475.5 540.5,478.5 546.5,480.5 543.5,485.5 538.5,488.5 534.5,491.5 533.5,496.5 533.5,502.5 531.5,508.5 528.5,517.5 529.5,525.5 531.5,534.5 532.5,541.5 533.5,548.5 532.5,557.5 530.5,566.5 529.5,572.5 M44.5,570.5 44.5,575.5 47.5,578.5 45.5,583.5 48.5,587.5 49.5,591.5 44.5,594.5 186.5,594.5 184.5,599.5 183.5,605.5 179.5,612.5 177.5,619.5 178.5,626.5 181.5,633.5 185.5,638.5 189.5,642.5 190.5,647.5 192.5,652.5 193.5,659.5 196.5,665.5 200.5,666.5 M280.5,540.5 281.5,566.5 283.5,592.5 284.5,619.5 285.5,638.5 285.5,648.5 M400.5,594.5 344.5,594.5 345.5,598.5 342.5,602.5 341.5,606.5 345.5,610.5 349.5,613.5 351.5,618.5 354.5,621.5 358.5,623.5 359.5,628.5 358.5,633.5 355.5,636.5 356.5,642.5 360.5,643.5 359.5,648.5 M400.5,594.5 537.5,594.5 M529.5,534.5 532.5,540.5 534.5,545.5 532.5,554.5 531.5,562.5 529.5,569.5 530.5,577.5 534.5,584.5 536.5,591.5 539.5,596.5 540.5,601.5 M547.5,620.5 558.5,621.5 576.5,621.5 600.5,622.5 M599.5,622.5 610.5,622.5 645.5,625.5 680.5,628.5 715.5,630.5 743.5,631.5 744.5,638.5 745.5,645.5 748.5,650.5 752.5,650.5 757.5,650.5 759.5,642.5 760.5,633.5 758.5,626.5 757.5,619.5 757.5,613.5 763.5,610.5 767.5,609.5 772.5,612.5 779.5,614.5 786.5,617.5 793.5,619.5 796.5,621.5" stroke="#000" stroke-width="1" shape-rendering="crispEdges"/>
<g fill="none"><path d="M717.0 64.5H724.0M720.5 61.0V68.0" stroke="#f07010" stroke-width="1"/><path d="M782.0 114.5H789.0" stroke="#ffb400" stroke-width="1"/><path d="M784.0 135.5H791.0" stroke="#ffd200" stroke-width="1"/><path d="M787.0 146.5H794.0" stroke="#e85c10" stroke-width="1"/><path d="M760.0 155.5H767.0" stroke="#ffb400" stroke-width="1"/><path d="M711.0 162.5H718.0" stroke="#ffd200" stroke-width="1"/><path d="M790.0 163.5H797.0" stroke="#ffb400" stroke-width="1"/><path d="M799.0 190.5H806.0" stroke="#ffa000" stroke-width="1"/><path d="M761.0 196.5H768.0" stroke="#ffa000" stroke-width="1"/><circle cx="770.5" cy="202.5" r="4" fill="#3c3a50" stroke="#ff9000" stroke-width="1.05" shape-rendering="geometricPrecision"/><path d="M768.0 202.5H773.0" stroke="#ff9000" stroke-width="1"/><path d="M770.5 200.0V205.0" stroke="#ff9000" stroke-width="1"/><path d="M721.0 211.5H728.0" stroke="#e85c10" stroke-width="1"/><path d="M705.0 223.5H712.0" stroke="#ff9000" stroke-width="1"/><circle cx="803.5" cy="234.5" r="4" fill="#3c3a50" stroke="#ffb400" stroke-width="1.05" shape-rendering="geometricPrecision"/><path d="M801.0 234.5H806.0" stroke="#ffb400" stroke-width="1"/><path d="M803.5 232.0V237.0" stroke="#ffb400" stroke-width="1"/><path d="M707.0 239.5H714.0" stroke="#ffa000" stroke-width="1"/><path d="M748.0 256.5H755.0" stroke="#ffff00" stroke-width="1"/><path d="M751.0 261.5H758.0" stroke="#ffa000" stroke-width="1"/><path d="M746.0 264.5H753.0M749.5 261.0V268.0" stroke="#ffb400" stroke-width="1"/><path d="M790.0 258.5H797.0" stroke="#ffd200" stroke-width="1"/><path d="M797.0 260.5H804.0M800.5 257.0V264.0" stroke="#ffa000" stroke-width="1"/><path d="M733.0 272.5H740.0" stroke="#ff9000" stroke-width="1"/><circle cx="782.5" cy="273.5" r="4" fill="#3c3a50" stroke="#ffff00" stroke-width="1.05" shape-rendering="geometricPrecision"/><path d="M780.0 273.5H785.0" stroke="#ffff00" stroke-width="1"/><path d="M782.5 271.0V276.0" stroke="#ffff00" stroke-width="1"/><path d="M619.0 274.5H626.0" stroke="#ff9000" stroke-width="1"/><path d="M705.0 280.5H712.0" stroke="#ffd200" stroke-width="1"/><path d="M758.0 282.5H765.0" stroke="#ffff00" stroke-width="1"/><path d="M685.0 289.5H692.0" stroke="#ff9000" stroke-width="1"/><path d="M732.0 287.5H739.0" stroke="#ffd200" stroke-width="1"/><path d="M751.0 290.5H758.0M754.5 287.0V294.0" stroke="#ffa000" stroke-width="1"/><circle cx="773.5" cy="293.5" r="4" fill="#3c3a50" stroke="#ffb400" stroke-width="1.05" shape-rendering="geometricPrecision"/><path d="M771.0 293.5H776.0" stroke="#ffb400" stroke-width="1"/><path d="M773.5 291.0V296.0" stroke="#ffb400" stroke-width="1"/><path d="M796.0 288.5H803.0" stroke="#ff9000" stroke-width="1"/><path d="M781.0 298.5H788.0" stroke="#ff9000" stroke-width="1"/><path d="M796.0 298.5H803.0" stroke="#ff9000" stroke-width="1"/><path d="M770.0 297.5H777.0" stroke="#ffff00" stroke-width="1"/><path d="M753.0 301.5H760.0" stroke="#ffff00" stroke-width="1"/><path d="M763.0 304.5H770.0" stroke="#ffb400" stroke-width="1"/><circle cx="735.5" cy="306.5" r="4" fill="#3c3a50" stroke="#ffff00" stroke-width="1.05" shape-rendering="geometricPrecision"/><path d="M733.0 306.5H738.0" stroke="#ffff00" stroke-width="1"/><path d="M799.0 308.5H806.0" stroke="#ffff00" stroke-width="1"/><path d="M768.0 313.5H775.0M771.5 310.0V317.0" stroke="#ff9000" stroke-width="1"/><path d="M780.0 313.5H787.0" stroke="#f07010" stroke-width="1"/><path d="M799.0 313.5H806.0" stroke="#ffa000" stroke-width="1"/><path d="M778.0 319.5H785.0" stroke="#e85c10" stroke-width="1"/><path d="M740.0 325.5H747.0" stroke="#ffa000" stroke-width="1"/><circle cx="773.5" cy="327.5" r="4" fill="#3c3a50" stroke="#ffa000" stroke-width="1.05" shape-rendering="geometricPrecision"/><path d="M771.0 327.5H776.0" stroke="#ffa000" stroke-width="1"/><path d="M777.0 326.5H784.0" stroke="#ffb400" stroke-width="1"/><path d="M716.0 328.5H723.0" stroke="#ffa000" stroke-width="1"/><path d="M731.0 329.5H738.0" stroke="#ffff00" stroke-width="1"/><path d="M725.0 332.5H732.0" stroke="#ffff00" stroke-width="1"/><path d="M773.0 333.5H780.0" stroke="#ffb400" stroke-width="1"/><circle cx="786.5" cy="337.5" r="4" fill="#3c3a50" stroke="#ffff00" stroke-width="1.05" shape-rendering="geometricPrecision"/><path d="M784.0 337.5H789.0" stroke="#ffff00" stroke-width="1"/><path d="M786.5 335.0V340.0" stroke="#ffff00" stroke-width="1"/><path d="M760.0 345.5H767.0" stroke="#ffa000" stroke-width="1"/><path d="M736.0 346.5H743.0" stroke="#ff9000" stroke-width="1"/><path d="M741.0 351.5H748.0" stroke="#ffff00" stroke-width="1"/><path d="M747.0 350.5H754.0" stroke="#ffff00" stroke-width="1"/><path d="M676.0 366.5H683.0" stroke="#ff9000" stroke-width="1"/><path d="M777.0 390.5H784.0" stroke="#ff9000" stroke-width="1"/><path d="M797.0 397.5H804.0" stroke="#f07010" stroke-width="1"/><path d="M789.0 403.5H796.0" stroke="#ffff00" stroke-width="1"/><path d="M620.0 441.5H627.0" stroke="#ffa000" stroke-width="1"/><path d="M735.0 443.5H742.0" stroke="#f07010" stroke-width="1"/><circle cx="783.5" cy="433.5" r="4" fill="#3c3a50" stroke="#ffb400" stroke-width="1.05" shape-rendering="geometricPrecision"/><path d="M781.0 433.5H786.0" stroke="#ffb400" stroke-width="1"/><path d="M783.5 431.0V436.0" stroke="#ffb400" stroke-width="1"/><circle cx="771.5" cy="463.5" r="4" fill="#3c3a50" stroke="#ffd200" stroke-width="1.05" shape-rendering="geometricPrecision"/><path d="M769.0 463.5H774.0" stroke="#ffd200" stroke-width="1"/><path d="M668.0 596.5H675.0" stroke="#e85c10" stroke-width="1"/><circle cx="742.5" cy="625.5" r="4" fill="#3c3a50" stroke="#00ffff" stroke-width="1.05" shape-rendering="geometricPrecision"/><path d="M740.0 625.5H745.0" stroke="#00ffff" stroke-width="1"/><path d="M742.5 623.0V628.0" stroke="#00ffff" stroke-width="1"/><path d="M744.0 655.5H751.0" stroke="#e85c10" stroke-width="1"/><path d="M733.0 671.5H740.0M736.5 668.0V675.0" stroke="#e85c10" stroke-width="1"/><path d="M738.0 729.5H745.0" stroke="#ff9000" stroke-width="1"/><circle cx="757.5" cy="790.5" r="4" fill="#3c3a50" stroke="#ffa000" stroke-width="1.05" shape-rendering="geometricPrecision"/><path d="M755.0 790.5H760.0" stroke="#ffa000" stroke-width="1"/><path d="M757.5 788.0V793.0" stroke="#ffa000" stroke-width="1"/></g>
<circle cx="407" cy="407" r="159.5" stroke="#d8d8d8" stroke-width="0.9"/>
<circle cx="407" cy="407" r="279.5" stroke="#d8d8d8" stroke-width="0.9"/>
<circle cx="407" cy="407" r="399.5" stroke="#d8d8d8" stroke-width="0.9"/>
<circle cx="407" cy="407" r="519.5" stroke="#d8d8d8" stroke-width="0.9"/>
</g>
<rect x="395.0" y="3.5" width="22" height="9" fill="#5c4f4b" clip-path="url(#mc)"/>
<text x="406" y="10.7" font-size="9.5" fill="#ffffaa" text-anchor="middle" textLength="21" lengthAdjust="spacingAndGlyphs" clip-path="url(#mc)">313</text>
<rect x="395.0" y="123.5" width="22" height="9" fill="#5c4f4b" clip-path="url(#mc)"/>
<text x="406" y="130.7" font-size="9.5" fill="#ffffaa" text-anchor="middle" textLength="21" lengthAdjust="spacingAndGlyphs" clip-path="url(#mc)">219</text>
<rect x="395.0" y="243.5" width="22" height="9" fill="#5c4f4b" clip-path="url(#mc)"/>
<text x="406" y="250.7" font-size="9.5" fill="#ffffaa" text-anchor="middle" textLength="21" lengthAdjust="spacingAndGlyphs" clip-path="url(#mc)">125</text>
<text x="406" y="370.7" font-size="9.5" fill="#ffffaa" text-anchor="middle" textLength="14" lengthAdjust="spacingAndGlyphs" clip-path="url(#mc)">31</text>
<circle cx="407" cy="407" r="39.5" fill="none" stroke="#ff0000" stroke-width="1" shape-rendering="crispEdges"/>
<rect x="9.5" y="759.5" width="242" height="43" fill="#000" stroke="#b8b8b8" stroke-width="1"/>
<text x="13" y="771" font-size="9.6" fill="#fff" textLength="36.5" lengthAdjust="spacingAndGlyphs">Symbols</text>
<text x="52.5" y="771" font-size="9.6" fill="#fff" textLength="18" lengthAdjust="spacingAndGlyphs">-CG</text>
<text x="77" y="771" font-size="9.6" fill="#fff" textLength="15" lengthAdjust="spacingAndGlyphs">-IC</text>
<text x="98.5" y="771" font-size="9.6" fill="#fff" textLength="21" lengthAdjust="spacingAndGlyphs">+CG</text>
<text x="122.5" y="771" font-size="9.6" fill="#fff" textLength="19" lengthAdjust="spacingAndGlyphs">+IC</text>
<text x="153" y="771" font-size="9.6" fill="#fff" textLength="90.5" lengthAdjust="spacingAndGlyphs">Strike age color codes</text>
<text x="13" y="784" font-size="9.6" fill="#fff" textLength="28.5" lengthAdjust="spacingAndGlyphs">Recent</text>
<text x="13" y="796.5" font-size="9.6" fill="#fff" textLength="15.5" lengthAdjust="spacingAndGlyphs">Old</text>
<g fill="none" shape-rendering="crispEdges"><circle cx="60.5" cy="780.5" r="4" fill="#000" stroke="#00ffff" stroke-width="1.05" shape-rendering="geometricPrecision"/><path d="M58.0 780.5H63.0" stroke="#00ffff" stroke-width="1"/><path d="M82.0 780.5H89.0" stroke="#00ffff" stroke-width="1"/><circle cx="110.5" cy="780.5" r="4" fill="#000" stroke="#00ffff" stroke-width="1.05" shape-rendering="geometricPrecision"/><path d="M108.0 780.5H113.0" stroke="#00ffff" stroke-width="1"/><path d="M110.5 778.0V783.0" stroke="#00ffff" stroke-width="1"/><path d="M132.0 780.5H139.0M135.5 777.0V784.0" stroke="#00ffff" stroke-width="1"/></g>
<g fill="none" shape-rendering="crispEdges"><circle cx="60.5" cy="793.5" r="4" fill="#000" stroke="#ffff00" stroke-width="1.05" shape-rendering="geometricPrecision"/><path d="M58.0 793.5H63.0" stroke="#ffff00" stroke-width="1"/><path d="M82.0 793.5H89.0" stroke="#ffff00" stroke-width="1"/><circle cx="110.5" cy="793.5" r="4" fill="#000" stroke="#ffff00" stroke-width="1.05" shape-rendering="geometricPrecision"/><path d="M108.0 793.5H113.0" stroke="#ffff00" stroke-width="1"/><path d="M110.5 791.0V796.0" stroke="#ffff00" stroke-width="1"/><path d="M132.0 793.5H139.0M135.5 790.0V797.0" stroke="#ffff00" stroke-width="1"/></g>
<text x="153" y="784" font-size="9.6" fill="#ffd200" textLength="17" lengthAdjust="spacingAndGlyphs">15+</text>
<text x="188" y="784" font-size="9.6" fill="#ffaa00" textLength="17" lengthAdjust="spacingAndGlyphs">30+</text>
<text x="222.5" y="784" font-size="9.6" fill="#ff9600" textLength="17" lengthAdjust="spacingAndGlyphs">45+</text>
<text x="153" y="796.5" font-size="9.6" fill="#ff7d00" textLength="17" lengthAdjust="spacingAndGlyphs">60+</text>
<text x="188" y="796.5" font-size="9.6" fill="#ff6400" textLength="17" lengthAdjust="spacingAndGlyphs">75+</text>
<text x="222.5" y="796.5" font-size="9.6" fill="#ff3200" textLength="17" lengthAdjust="spacingAndGlyphs">90+</text>
<rect x="685" y="792" width="121" height="14" fill="#000"/>
<text x="688.5" y="802" font-size="9.6" fill="#fff" textLength="114" lengthAdjust="spacingAndGlyphs">©2005 Astrogenic Systems</text>
<rect x="812.5" y="8.5" width="320" height="319" rx="6" ry="6" fill="#000" stroke="#b6b6b6" stroke-width="1"/>
<rect x="812.5" y="333.5" width="320" height="114" rx="6" ry="6" fill="#000" stroke="#b6b6b6" stroke-width="1"/>
<rect x="812.5" y="453.5" width="320" height="349" rx="6" ry="6" fill="#000" stroke="#b6b6b6" stroke-width="1"/>
<rect x="819.5" y="16.5" width="57" height="17" fill="#5a0000" stroke="#f4f4f4" stroke-width="1"/>
<text x="824" y="29.8" font-size="11.6" fill="#d8c8c8" font-weight="bold" textLength="49" lengthAdjust="spacingAndGlyphs">STRIKE</text>
<rect x="883.5" y="16.5" width="57" height="17" fill="#333" stroke="#f4f4f4" stroke-width="1"/>
<text x="890.5" y="29.8" font-size="11.6" fill="#c0c0c0" font-weight="bold" textLength="43.5" lengthAdjust="spacingAndGlyphs">NOISE</text>
<rect x="994.5" y="16.5" width="127" height="17" fill="#333" stroke="#f4f4f4" stroke-width="1"/>
<text x="998" y="30" font-size="13" fill="#fff" font-weight="bold" textLength="63" lengthAdjust="spacingAndGlyphs">Bng 123°</text>
<text x="1075.5" y="30" font-size="13" fill="#00ff00" font-weight="bold" textLength="42.5" lengthAdjust="spacingAndGlyphs">313mi</text>
<rect x="821.5" y="64.5" width="81" height="15" fill="#606060" stroke="#f4f4f4" stroke-width="1"/>
<text x="829" y="76.2" font-size="11.2" fill="#fff" textLength="66.5" lengthAdjust="spacingAndGlyphs">Strikes/min</text>
<rect x="931.5" y="64.5" width="81" height="15" fill="#606060" stroke="#f4f4f4" stroke-width="1"/>
<text x="943" y="76.2" font-size="11.2" fill="#fff" textLength="58" lengthAdjust="spacingAndGlyphs">Close/min</text>
<rect x="1041.5" y="64.5" width="81" height="15" fill="#606060" stroke="#f4f4f4" stroke-width="1"/>
<text x="1050" y="76.2" font-size="11.2" fill="#fff" textLength="63" lengthAdjust="spacingAndGlyphs">Noises/min</text>
<text x="902.5" y="112" font-size="29" fill="#fff" font-weight="bold" text-anchor="end">1</text>
<text x="1013.5" y="112" font-size="29" fill="#fff" font-weight="bold" text-anchor="end">0</text>
<text x="1123" y="112" font-size="29" fill="#c0c0c0" font-weight="bold" text-anchor="end">0</text>
<text x="825.5" y="143" font-size="13" fill="#fff" textLength="77.5" lengthAdjust="spacingAndGlyphs">Total Strikes</text>
<text x="944" y="143" font-size="13" fill="#fff" textLength="69" lengthAdjust="spacingAndGlyphs">Total Close</text>
<text x="1048" y="143" font-size="13" fill="#c0c0c0" textLength="75" lengthAdjust="spacingAndGlyphs">Total Noises</text>
<text x="871" y="161" font-size="13" fill="#fff" textLength="32" lengthAdjust="spacingAndGlyphs">2250</text>
<text x="1004.5" y="161" font-size="13" fill="#fff" textLength="8.5" lengthAdjust="spacingAndGlyphs">0</text>
<text x="1100" y="161" font-size="13" fill="#fff" textLength="22.5" lengthAdjust="spacingAndGlyphs">127</text>
<text x="820.5" y="215" font-size="13" fill="#c0c0c0" textLength="165.5" lengthAdjust="spacingAndGlyphs">Lightning type distribution</text>
<rect x="821" y="217" width="303" height="1" fill="#909090"/>
<text x="820.5" y="237" font-size="13" fill="#fff" font-weight="bold" textLength="85.5" lengthAdjust="spacingAndGlyphs">Cloud-ground</text>
<text x="912.5" y="237" font-size="13" fill="#fff" textLength="9" lengthAdjust="spacingAndGlyphs">+</text>
<rect x="925.5" y="227.5" width="50" height="10" rx="2" fill="#000" stroke="#909090" stroke-width="1"/><rect x="926" y="228" width="22" height="9" fill="#ff0000"/>
<text x="978.5" y="237" font-size="13" fill="#fff" font-weight="bold" textLength="30.5" lengthAdjust="spacingAndGlyphs">44%</text>
<rect x="1016" y="231" width="7" height="2" fill="#d8d8d8"/>
<rect x="1028.5" y="227.5" width="50" height="10" rx="2" fill="#000" stroke="#909090" stroke-width="1"/><rect x="1029" y="228" width="6" height="9" fill="#99ccff"/>
<text x="1082" y="237" font-size="13" fill="#fff" font-weight="bold" textLength="30.5" lengthAdjust="spacingAndGlyphs">12%</text>
<text x="820.5" y="261" font-size="13" fill="#c0c0c0" font-weight="bold" textLength="39" lengthAdjust="spacingAndGlyphs">Count</text>
<text x="925" y="261" font-size="13" fill="#fff" font-weight="bold" textLength="31.5" lengthAdjust="spacingAndGlyphs">1001</text>
<text x="1028" y="261" font-size="13" fill="#fff" font-weight="bold" textLength="24" lengthAdjust="spacingAndGlyphs">259</text>
<text x="820.5" y="291" font-size="13" fill="#fff" font-weight="bold" textLength="64.5" lengthAdjust="spacingAndGlyphs">Intracloud</text>
<text x="912.5" y="291" font-size="13" fill="#fff" textLength="9" lengthAdjust="spacingAndGlyphs">+</text>
<rect x="925.5" y="281.5" width="50" height="10" rx="2" fill="#000" stroke="#909090" stroke-width="1"/><rect x="926" y="282" width="3" height="9" fill="#e864a8"/>
<text x="978.5" y="291" font-size="13" fill="#fff" font-weight="bold" textLength="22.5" lengthAdjust="spacingAndGlyphs">6%</text>
<rect x="1016" y="285" width="7" height="2" fill="#d8d8d8"/>
<rect x="1028.5" y="281.5" width="50" height="10" rx="2" fill="#000" stroke="#909090" stroke-width="1"/><rect x="1029" y="282" width="19" height="9" fill="#00ff00"/>
<text x="1082" y="291" font-size="13" fill="#fff" font-weight="bold" textLength="30.5" lengthAdjust="spacingAndGlyphs">38%</text>
<text x="820.5" y="315" font-size="13" fill="#c0c0c0" font-weight="bold" textLength="39" lengthAdjust="spacingAndGlyphs">Count</text>
<text x="925" y="315" font-size="13" fill="#fff" font-weight="bold" textLength="24" lengthAdjust="spacingAndGlyphs">137</text>
<text x="1028" y="315" font-size="13" fill="#fff" font-weight="bold" textLength="24" lengthAdjust="spacingAndGlyphs">853</text>
<text x="821" y="353" font-size="16" fill="#00ff00" font-weight="bold" textLength="225" lengthAdjust="spacingAndGlyphs">10/20/2025 10:59:16 AM</text>
<rect x="821" y="358" width="302" height="1" fill="#909090"/>
<text x="821" y="388" font-size="13" fill="#fff" textLength="49" lengthAdjust="spacingAndGlyphs">Squelch</text>
<text x="909" y="388" font-size="13" fill="#fff" textLength="8.5" lengthAdjust="spacingAndGlyphs">0</text>
<text x="981" y="388" font-size="13" fill="#fff" textLength="44.5" lengthAdjust="spacingAndGlyphs">Upload</text>
<text x="1061" y="388" font-size="13" fill="#c0c0c0" textLength="55" lengthAdjust="spacingAndGlyphs">Disabled</text>
<text x="821" y="408" font-size="13" fill="#fff" textLength="73.5" lengthAdjust="spacingAndGlyphs">Persistence</text>
<text x="909" y="408" font-size="13" fill="#fff" textLength="43" lengthAdjust="spacingAndGlyphs">90 min</text>
<text x="981" y="408" font-size="13" fill="#fff" textLength="51.5" lengthAdjust="spacingAndGlyphs">Capture</text>
<text x="1061" y="408" font-size="13" fill="#00ff00" textLength="37.5" lengthAdjust="spacingAndGlyphs">Active</text>
<text x="821" y="428" font-size="13" fill="#fff" textLength="40.5" lengthAdjust="spacingAndGlyphs">Range</text>
<text x="909" y="428" font-size="13" fill="#fff" textLength="43" lengthAdjust="spacingAndGlyphs">313 mi</text>
<text x="981" y="428" font-size="13" fill="#fff" textLength="53.5" lengthAdjust="spacingAndGlyphs">Receiver</text>
<text x="1061" y="428" font-size="13" fill="#00ff00" textLength="51.5" lengthAdjust="spacingAndGlyphs">Enabled</text>
<text x="821" y="475" font-size="13" fill="#c0c0c0" textLength="44.5" lengthAdjust="spacingAndGlyphs">Uptime</text>
<text x="909" y="475" font-size="13" fill="#fff" textLength="37.5" lengthAdjust="spacingAndGlyphs">78:29</text>
<text x="981" y="475" font-size="13" fill="#c0c0c0" textLength="62.5" lengthAdjust="spacingAndGlyphs">Peak time</text>
<text x="1061" y="475" font-size="13" fill="#c0c0c0" textLength="25" lengthAdjust="spacingAndGlyphs">Plot</text>
<text x="821" y="498" font-size="13" fill="#c0c0c0" textLength="62" lengthAdjust="spacingAndGlyphs">Peak rate</text>
<text x="909.5" y="498" font-size="13" fill="#fff" textLength="43" lengthAdjust="spacingAndGlyphs">17/min</text>
<text x="981.5" y="498" font-size="13" fill="#fff" textLength="51.5" lengthAdjust="spacingAndGlyphs">1:02 AM</text>
<text x="1061" y="498" font-size="13" fill="#fff" textLength="36.5" lengthAdjust="spacingAndGlyphs">Strike</text>
<text x="822" y="528" font-size="13" fill="#c0c0c0" textLength="77.5" lengthAdjust="spacingAndGlyphs">Trend graph</text>
<text x="908" y="528" font-size="13" fill="#fff" textLength="42.5" lengthAdjust="spacingAndGlyphs">60 min</text>
<path d="M822 777.5H1089M1088.5 542V778" stroke="#c0c0c0" stroke-width="1" fill="none"/>
<path d="M1084 738.5H1089M1084 699.5H1089M1084 660.5H1089M1084 620.5H1089M1084 581.5H1089M1084 542.5H1089M1088.5 775V778M1044.5 775V778M999.5 775V778M955.5 775V778M910.5 775V778M866.5 775V778M821.5 775V778" stroke="#c0c0c0" stroke-width="1" fill="none"/>
<text x="1091.5" y="547" font-size="12" fill="#c0c0c0" textLength="14" lengthAdjust="spacingAndGlyphs">30</text>
<text x="1091.5" y="625.5" font-size="12" fill="#c0c0c0" textLength="14" lengthAdjust="spacingAndGlyphs">20</text>
<text x="1091.5" y="704" font-size="12" fill="#c0c0c0" textLength="14" lengthAdjust="spacingAndGlyphs">10</text>
<text x="819.5" y="793" font-size="12" fill="#c0c0c0" textLength="14.5" lengthAdjust="spacingAndGlyphs">60</text>
<text x="864" y="793" font-size="12" fill="#c0c0c0" textLength="14.5" lengthAdjust="spacingAndGlyphs">50</text>
<text x="908.8" y="793" font-size="12" fill="#c0c0c0" textLength="14.5" lengthAdjust="spacingAndGlyphs">40</text>
<text x="952.8" y="793" font-size="12" fill="#c0c0c0" textLength="14.5" lengthAdjust="spacingAndGlyphs">30</text>
<text x="997.4" y="793" font-size="12" fill="#c0c0c0" textLength="14.5" lengthAdjust="spacingAndGlyphs">20</text>
<text x="1042.2" y="793" font-size="12" fill="#c0c0c0" textLength="14.5" lengthAdjust="spacingAndGlyphs">10</text>
<text x="1087" y="793" font-size="12" fill="#c0c0c0" textLength="7" lengthAdjust="spacingAndGlyphs">0</text>
<text x="1100" y="793" font-size="12" fill="#c0c0c0" textLength="18.5" lengthAdjust="spacingAndGlyphs">min</text>
<g shape-rendering="crispEdges">
<polyline points="822.4,777.2 822.4,769.6 823.9,764.9 825.5,761.3 826.1,765.7 826.7,769.2 827.5,764.9 828.3,761.3 832.6,761.3 833.4,764.9 834.2,769.0 840.9,769.2 841.7,764.9 843.3,761.3 844.1,761.3 845.3,764.9 846.1,769.2 847.3,773.6 848.1,777.2 849.2,777.2 849.6,773.6 850.4,769.2 851.6,761.7 852.4,757.0 853.2,753.4 854.4,757.0 855.6,761.3 857.6,764.9 858.7,767.7 859.1,759.4 860.3,757.0 861.1,753.4 861.5,753.4 862.3,760.9 868.6,761.3 869.4,764.9 870.2,769.2 870.6,773.6 871.0,769.2 871.8,759.4 873.4,753.4 874.2,753.4 875.0,757.0 876.1,761.3 876.9,765.7 878.1,769.2 883.7,769.2 883.8,764.9 884.5,752.2 885.2,745.9 886.0,749.9 886.8,752.6 888.4,753.0 888.8,761.7 889.6,769.2 894.7,769.2 895.5,773.6 896.3,777.2 897.1,769.6 904.2,769.2 905.8,769.6 906.2,775.2 906.6,777.2 906.7,775.2 907.8,769.6 908.6,764.9 909.4,761.3 912.5,761.3 913.3,757.0 914.5,753.4 914.9,757.0 915.7,764.1 916.9,768.1 917.7,772.8 918.4,777.2 919.2,772.8 920.0,769.6 922.0,765.7 923.4,761.3 924.0,765.7 924.8,768.9 926.8,769.6 927.5,774.4 927.9,777.2 929.5,777.2 929.7,769.6 930.3,759.4 931.5,757.0 932.7,753.4 933.5,753.8 934.3,758.6 935.1,761.7 935.5,769.6 936.2,774.4 937.0,777.2 938.6,777.2 938.9,769.6 939.4,759.4 940.6,757.0 941.4,749.9 942.3,745.9 943.0,749.9 943.8,757.8 944.6,765.7 945.7,769.6 947.3,769.6 948.1,774.4 948.9,777.2 950.5,777.2 950.9,773.6 951.7,769.6 954.4,769.6 955.2,773.6 956.0,777.2 956.8,773.6 957.6,769.6 960.4,769.6 961.6,773.6 962.8,777.2 963.9,773.6 965.5,769.6 968.3,769.6 969.1,773.6 969.9,777.2 970.7,773.6 971.5,769.6 974.6,769.6 975.4,774.4 975.8,777.2 1004.4,777.2 1004.8,773.6 1005.6,769.6 1010.7,769.6 1011.1,764.9 1011.9,761.3 1014.7,761.3 1015.4,764.9 1016.2,769.6 1019.0,769.6 1020.2,773.6 1021.0,775.2 1022.2,772.0 1022.7,769.6 1025.3,769.6 1026.1,772.8 1027.3,777.2 1036.4,777.2 1036.8,772.8 1037.6,769.6 1040.4,769.6 1041.2,773.6 1042.7,777.2 1044.7,777.2 1045.5,773.6 1046.7,769.6 1054.6,769.6 1055.4,773.6 1056.2,776.0 1057.0,772.8 1057.8,765.7 1058.6,761.7 1060.9,761.3 1061.5,757.0 1062.1,753.4 1064.5,753.4 1065.3,757.0 1066.5,761.3 1066.9,765.7 1067.3,769.2 1068.1,765.7 1069.2,761.3 1073.6,761.3 1074.4,765.7 1075.2,773.6 1076.0,777.2 1079.1,777.2 1079.9,772.8 1081.1,769.6 1084.3,769.6 1085.1,773.6 1085.9,776.0 1086.7,772.8 1087.4,769.6 1088.2,769.6" fill="none" stroke="#fff" stroke-width="1"/>
<polyline points="828.3,777.2 828.7,772.8 829.5,769.6 832.2,769.6 833.0,772.8 833.8,776.0 834.6,777.2" fill="none" stroke="#ff0000" stroke-width="1.2"/>
<polyline points="850.4,777.2 851.2,772.8 852.4,769.6 854.4,769.2 860.7,769.2 861.5,772.8 862.3,776.0 862.7,777.2" fill="none" stroke="#ff0000" stroke-width="1.2"/>
<polyline points="884.1,769.2 884.9,764.9 885.6,761.3 888.0,761.3 888.4,765.7 888.8,769.2" fill="none" stroke="#ff0000" stroke-width="1.2"/>
<polyline points="889.2,769.2 890.0,772.8 890.8,776.0 891.6,777.2" fill="none" stroke="#ff0000" stroke-width="1.2"/>
<polyline points="882.9,775.2 883.7,772.8" fill="none" stroke="#ff0000" stroke-width="1.2"/>
<polyline points="941.4,777.2 941.8,772.8 942.6,769.6 946.1,769.6 946.5,773.6 947.3,777.2" fill="none" stroke="#ff0000" stroke-width="1.2"/>
<polyline points="1061.3,777.2 1062.1,772.8 1063.3,769.6 1066.5,769.2 1066.9,772.8 1067.7,777.2" fill="none" stroke="#ff0000" stroke-width="1.2"/>
<polyline points="840.9,777.2 841.7,772.8 842.5,769.6" fill="none" stroke="#99ccff" stroke-width="1.2"/>
<polyline points="844.1,769.6 845.3,772.8 846.5,777.2" fill="none" stroke="#99ccff" stroke-width="1.2"/>
<polyline points="871.4,777.2 872.2,772.8 872.6,770.4" fill="none" stroke="#99ccff" stroke-width="1.2"/>
<polyline points="880.5,777.2 881.3,772.8 882.1,770.4" fill="none" stroke="#99ccff" stroke-width="1.2"/>
<polyline points="884.9,777.2 885.6,772.8 886.0,770.4" fill="none" stroke="#99ccff" stroke-width="1.2"/>
<polyline points="921.2,777.2 922.0,773.6 922.4,771.2" fill="none" stroke="#99ccff" stroke-width="1.2"/>
<polyline points="1014.3,777.2 1014.7,775.2" fill="none" stroke="#99ccff" stroke-width="1.2"/>
<polyline points="873.4,769.6 875.0,770.4 875.8,772.8 876.5,777.2" fill="none" stroke="#ff69b4" stroke-width="1.2"/>
<polyline points="931.1,769.6 935.1,769.6" fill="none" stroke="#ff69b4" stroke-width="1.2"/>
<polyline points="828.3,763.3 829.1,765.7 829.9,769.2 833.8,769.2" fill="none" stroke="#00ff00" stroke-width="1.2"/>
<polyline points="840.2,777.2 840.9,772.8 841.3,769.6 845.7,769.6" fill="none" stroke="#00ff00" stroke-width="1.2"/>
<polyline points="851.6,769.2 852.8,765.7 853.6,761.7 855.2,764.9 856.8,769.2 857.6,772.8 858.3,776.0 858.7,777.2" fill="none" stroke="#00ff00" stroke-width="1.2"/>
<polyline points="859.1,769.2 860.3,765.7 861.1,761.7 861.9,761.3" fill="none" stroke="#00ff00" stroke-width="1.2"/>
<polyline points="871.0,772.8 871.2,769.6 876.5,769.6" fill="none" stroke="#00ff00" stroke-width="1.2"/>
<polyline points="881.3,771.2 882.9,776.0 883.7,777.2" fill="none" stroke="#00ff00" stroke-width="1.2"/>
<polyline points="883.7,777.2 885.2,769.6 891.6,769.6" fill="none" stroke="#00ff00" stroke-width="1.2"/>
<polyline points="889.2,776.0 890.0,772.0 890.8,769.6" fill="none" stroke="#00ff00" stroke-width="1.2"/>
<polyline points="922.4,769.6 923.6,769.6 924.0,772.8 924.6,777.2" fill="none" stroke="#00ff00" stroke-width="1.2"/>
<polyline points="930.3,772.8 930.7,769.6 931.5,764.1 932.7,761.7 933.9,763.3 934.7,768.1" fill="none" stroke="#00ff00" stroke-width="1.2"/>
<polyline points="942.3,753.4 943.0,757.8 943.8,765.7 944.6,772.8 945.7,777.2" fill="none" stroke="#00ff00" stroke-width="1.2"/>
<polyline points="1014.3,764.1 1015.1,768.1 1015.6,772.8 1016.6,777.2" fill="none" stroke="#00ff00" stroke-width="1.2"/>
<polyline points="1062.5,757.0 1063.7,760.9 1065.3,764.9 1066.5,769.2" fill="none" stroke="#00ff00" stroke-width="1.2"/>
</g>
</svg>
</body></html>
